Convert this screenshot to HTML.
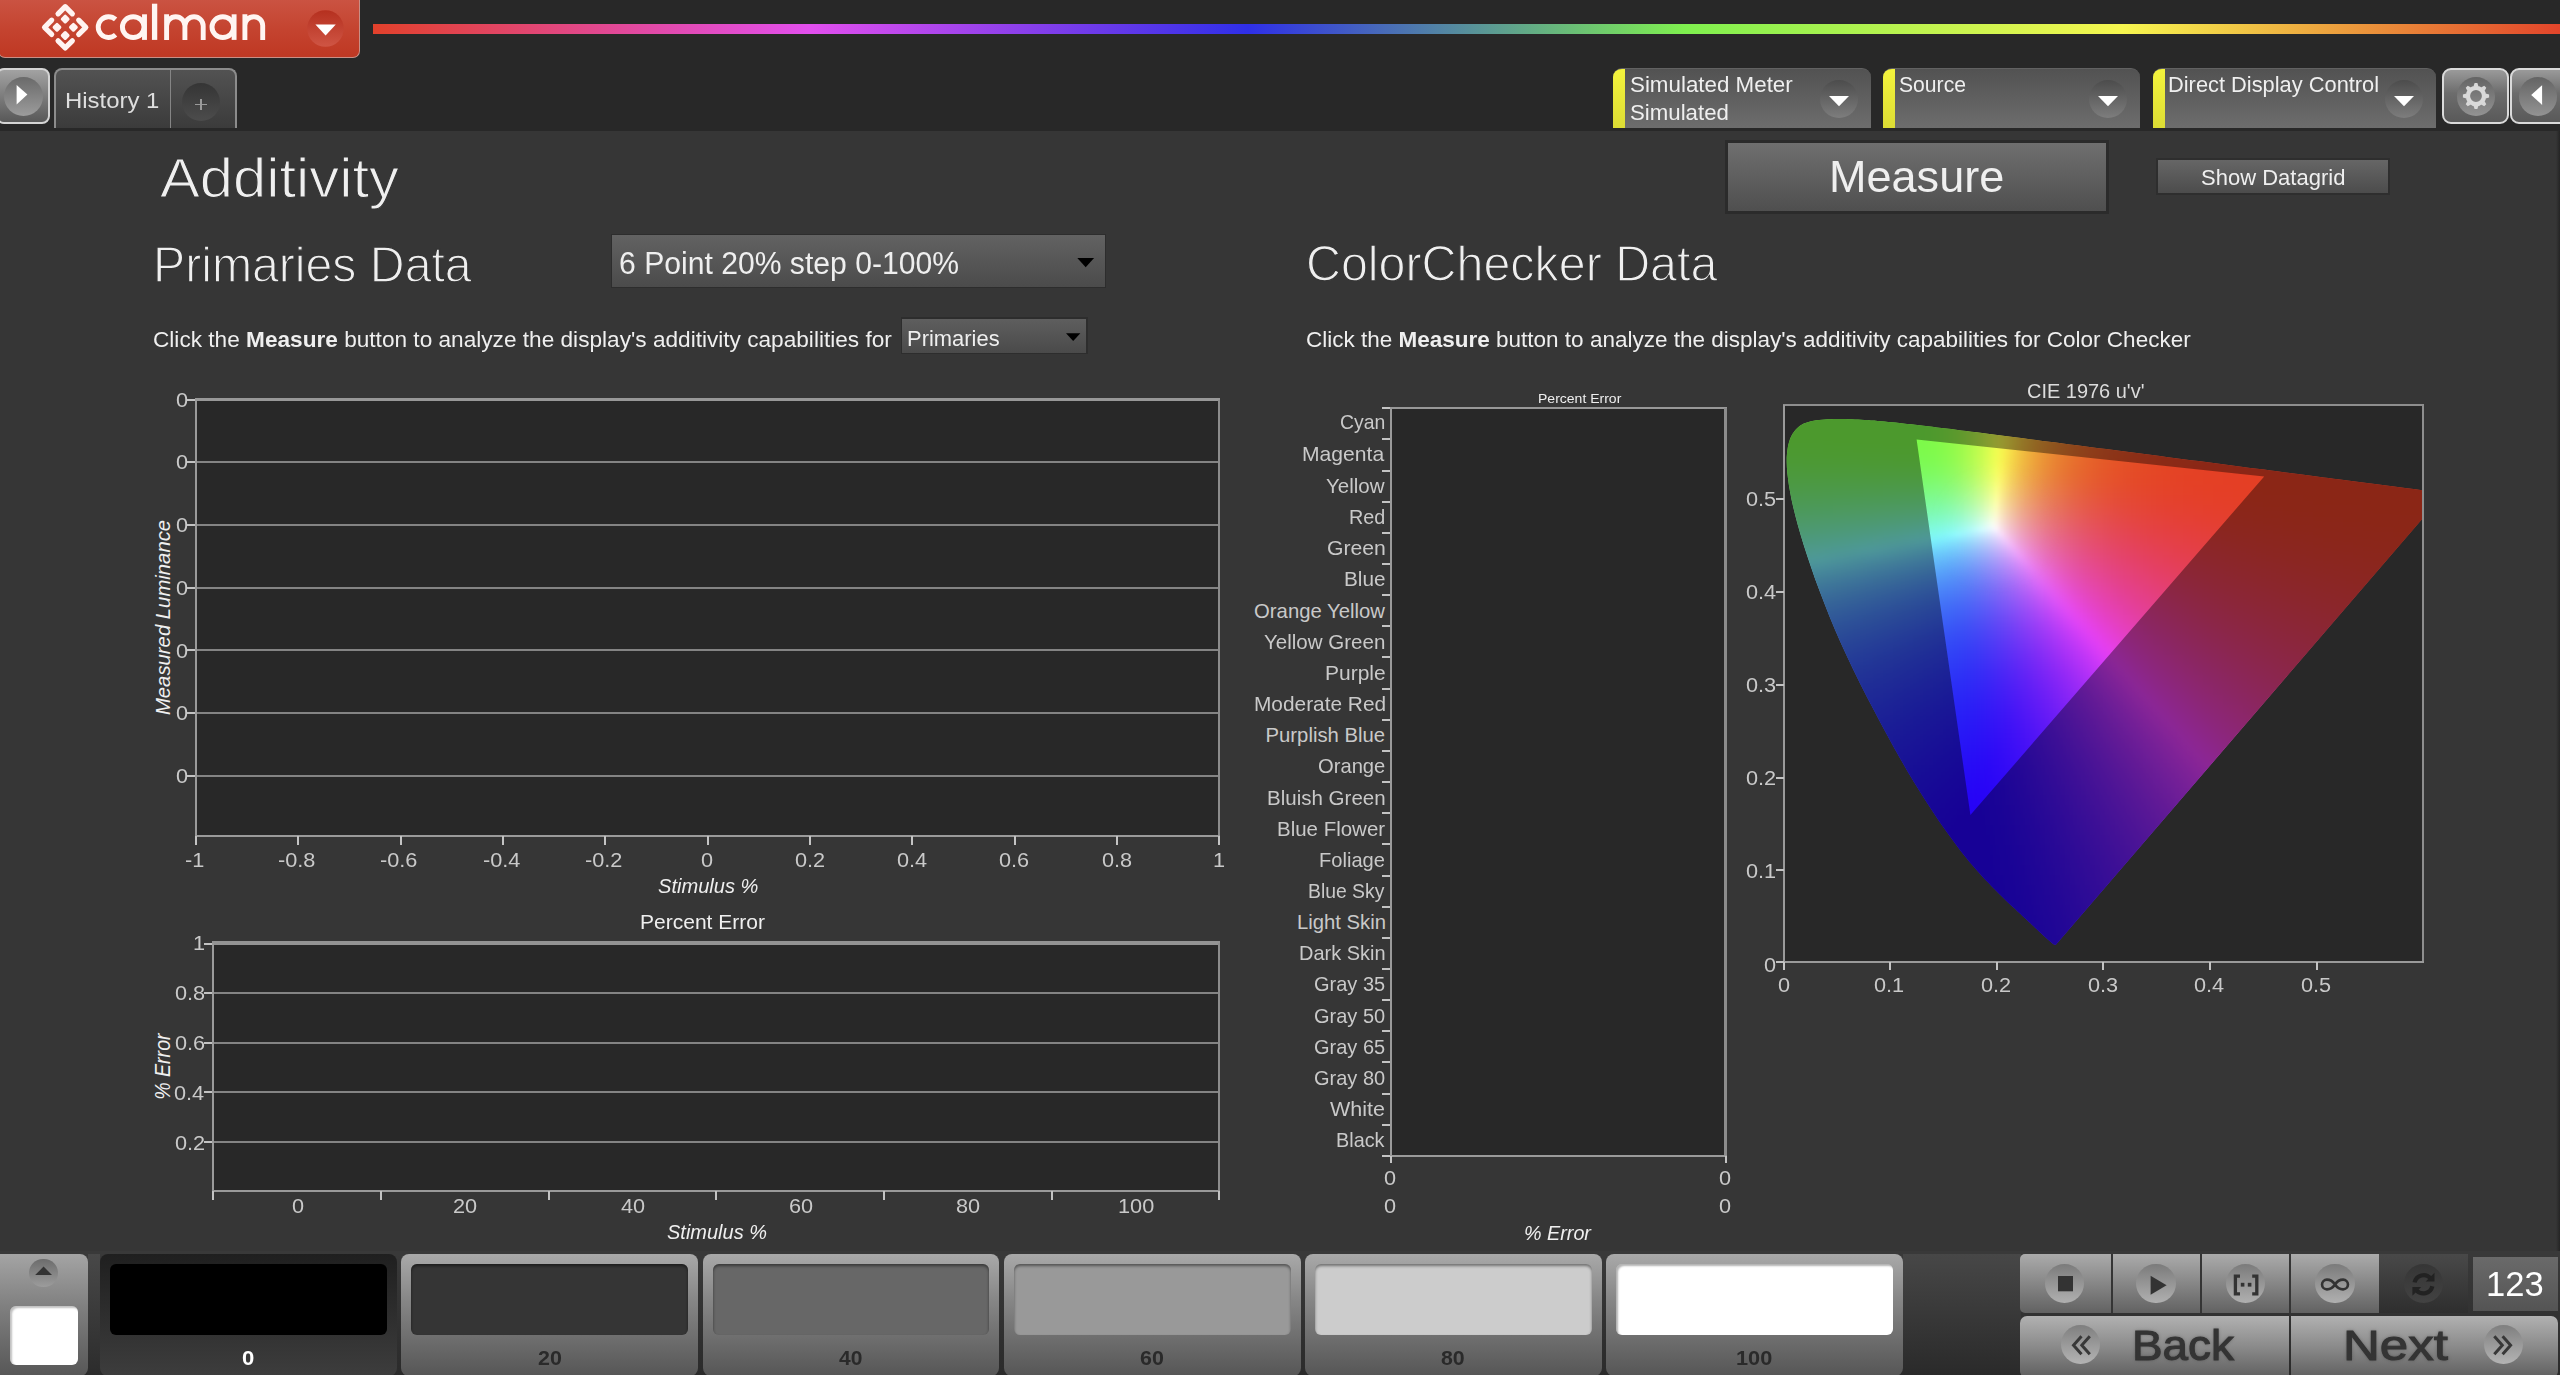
<!DOCTYPE html>
<html><head><meta charset="utf-8"><title>Calman - Additivity</title>
<style>
html,body{margin:0;padding:0;background:#363636;}
body{width:2560px;height:1375px;overflow:hidden;position:relative;font-family:"Liberation Sans",sans-serif;}
#app{position:absolute;left:0;top:0;width:2560px;height:1375px;overflow:hidden;}
#app div,.abs{position:absolute;}
.t{position:absolute;white-space:pre;transform-origin:0 0;display:block;}
.t b{font-weight:bold;}
</style></head><body><div id="app">
<div style="left:0.00px;top:0.00px;width:2560.00px;height:130.50px;background:#282828;"></div>
<div style="left:0.00px;top:130.50px;width:2560.00px;height:1244.50px;background:#363636;"></div>
<div style="left:373.00px;top:24.00px;width:2187.00px;height:10.00px;background:linear-gradient(90deg,#e2412b 0%,#e24fee 20%,#2f2fe8 40%,#7ff04f 60%,#f6f64f 80%,#e2452b 100%);"></div>
<div style="left:2556.00px;top:130.50px;width:4.00px;height:1123.50px;background:linear-gradient(90deg,#363636,#242424);"></div>
<div style="left:-2.00px;top:-2.00px;width:361.50px;height:59.50px;background:linear-gradient(180deg,#cb5443 0%,#c4432f 55%,#bf3823 100%);border-radius:0 0 7px 7px;border:1.5px solid #c98f86;border-top:none;box-sizing:border-box;"></div>
<svg class="abs" style="left:0;top:0" width="370" height="60" viewBox="0 0 370 60">
<defs><linearGradient id="lgc" x1="0" y1="0" x2="0" y2="1"><stop offset="0" stop-color="#b5301f"/><stop offset="1" stop-color="#cf5544"/></linearGradient></defs>
<circle cx="325.5" cy="28.5" r="18.3" fill="url(#lgc)"/>
<path d="M315.4 24.6h20.4l-10.2 10.8z" fill="#fff"/>
<g transform="translate(65.200 27.300) rotate(45)" fill="#fff3f1">
<path d="M-14.6 -4.500V-14.6H-4.500M4.500 -14.6H14.6V-4.500M14.6 4.500V14.6H4.500M-4.500 14.6H-14.6V4.500" fill="none" stroke="#fff3f1" stroke-width="5.200" stroke-linecap="round" stroke-linejoin="round"/>
<rect x="-9.400" y="-9.400" width="7.200" height="7.200" rx="1.700"/><rect x="2.200" y="-9.400" width="7.200" height="7.200" rx="1.700"/>
<rect x="-9.400" y="2.200" width="7.200" height="7.200" rx="1.700"/><rect x="2.200" y="2.200" width="7.200" height="7.200" rx="1.700"/>
</g>
<g fill="none" stroke="#fff5f2" stroke-width="4.9">
<path d="M115.6 19.4A10.4 10.4 0 1 0 115.6 34.8"/>
<ellipse cx="133.2" cy="27.1" rx="10.8" ry="10.4"/><path d="M144.5 14.3V39.9"/>
<path d="M154.6 3.7V39.9" stroke-width="5.3"/>
<path d="M166.6 14.3V39.9M166.6 25.9A9.15 9.15 0 0 1 184.9 25.9V39.9M184.9 25.9A9.15 9.15 0 0 1 203.2 25.9V39.9"/>
<ellipse cx="222.8" cy="27.1" rx="10.8" ry="10.4"/><path d="M234.1 14.3V39.9"/>
<path d="M244.9 14.3V39.9M244.9 25.6A8.9 8.9 0 0 1 262.7 25.6V39.9"/>
</g></svg>
<div style="left:-4.00px;top:68.30px;width:54.30px;height:55.70px;background:linear-gradient(180deg,#a2a2a2,#585858);border:2px solid #d4d4d4;border-radius:8px;box-sizing:border-box;"></div>
<div style="left:3.50px;top:76.60px;width:39.00px;height:39.00px;border-radius:50%;background:linear-gradient(180deg,#6a6a6a,#9c9c9c);"></div>
<svg class="abs" style="left:0;top:60px" width="60" height="70"><path d="M16.6 24.9V44.4L27.4 34.6z" fill="#fff"/></svg>
<div style="left:54.20px;top:68.30px;width:183.00px;height:59.70px;background:linear-gradient(180deg,#525252,#3b3b3b);border:2px solid #8c8c8c;border-bottom:none;border-radius:8px 8px 0 0;box-sizing:border-box;"></div>
<div style="left:169.60px;top:70.00px;width:1.80px;height:58.00px;background:#858585;"></div>
<span class="t" style="left:65.49px;top:89.78px;font-size:21.88px;line-height:21.88px;color:#dedede;transform:scaleX(1.0936);">History 1</span>
<div style="left:182.20px;top:83.00px;width:38.00px;height:38.00px;border-radius:50%;background:linear-gradient(180deg,#353535,#4c4c4c);"></div>
<div style="left:195.10px;top:103.70px;width:11.70px;height:1.60px;background:#9a9a9a;"></div>
<div style="left:200.20px;top:98.60px;width:1.60px;height:11.70px;background:#9a9a9a;"></div>
<div style="left:1613.00px;top:68.00px;width:258.00px;height:60.40px;background:linear-gradient(180deg,#525252,#6d6d6d);border-radius:9px 9px 0 0;overflow:hidden;border-top:1px solid #626262;box-sizing:border-box;"><div style="left:0;top:-1px;width:12px;height:62px;background:linear-gradient(180deg,#f4f43c,#dcdc34);"></div></div>
<div style="left:1819.50px;top:79.50px;width:38.00px;height:38.00px;border-radius:50%;background:linear-gradient(180deg,#4c4c4c,#7d7d7d);"></div>
<svg class="abs" style="left:1823.7px;top:90px" width="30" height="24"><path d="M5 6.100h20l-10 10.2z" fill="#fff"/></svg>
<span class="t" style="left:1629.59px;top:73.60px;font-size:21.74px;line-height:21.74px;color:#efefef;transform:scaleX(1.0283);">Simulated Meter</span>
<span class="t" style="left:1629.60px;top:102.10px;font-size:21.74px;line-height:21.74px;color:#efefef;transform:scaleX(1.0229);">Simulated</span>
<div style="left:1882.60px;top:68.00px;width:257.40px;height:60.40px;background:linear-gradient(180deg,#525252,#6d6d6d);border-radius:9px 9px 0 0;overflow:hidden;border-top:1px solid #626262;box-sizing:border-box;"><div style="left:0;top:-1px;width:12px;height:62px;background:linear-gradient(180deg,#f4f43c,#dcdc34);"></div></div>
<div style="left:2089.00px;top:79.50px;width:38.00px;height:38.00px;border-radius:50%;background:linear-gradient(180deg,#4c4c4c,#7d7d7d);"></div>
<svg class="abs" style="left:2093.2px;top:90px" width="30" height="24"><path d="M5 6.100h20l-10 10.2z" fill="#fff"/></svg>
<span class="t" style="left:1899.05px;top:73.60px;font-size:21.74px;line-height:21.74px;color:#efefef;transform:scaleX(0.9724);">Source</span>
<div style="left:2152.70px;top:68.00px;width:283.30px;height:60.40px;background:linear-gradient(180deg,#525252,#6d6d6d);border-radius:9px 9px 0 0;overflow:hidden;border-top:1px solid #626262;box-sizing:border-box;"><div style="left:0;top:-1px;width:12px;height:62px;background:linear-gradient(180deg,#f4f43c,#dcdc34);"></div></div>
<div style="left:2385.00px;top:79.50px;width:38.00px;height:38.00px;border-radius:50%;background:linear-gradient(180deg,#4c4c4c,#7d7d7d);"></div>
<svg class="abs" style="left:2389.2px;top:90px" width="30" height="24"><path d="M5 6.100h20l-10 10.2z" fill="#fff"/></svg>
<span class="t" style="left:2168.25px;top:73.60px;font-size:21.74px;line-height:21.74px;color:#efefef;transform:scaleX(1.0045);">Direct Display Control</span>
<div style="left:2442.20px;top:68.10px;width:66.80px;height:55.70px;background:linear-gradient(180deg,#9a9a9a,#6c6c6c 45%,#595959);border:2px solid #dadada;border-radius:9px;box-sizing:border-box;"></div>
<div style="left:2510.10px;top:68.10px;width:69.90px;height:55.70px;background:linear-gradient(180deg,#9a9a9a,#6c6c6c 45%,#595959);border:2px solid #dadada;border-radius:9px;box-sizing:border-box;"></div>
<div style="left:2456.70px;top:77.10px;width:38.60px;height:38.60px;border-radius:50%;background:linear-gradient(180deg,#646464,#939393);"></div>
<div style="left:2518.50px;top:77.10px;width:38.60px;height:38.60px;border-radius:50%;background:linear-gradient(180deg,#646464,#939393);"></div>
<svg class="abs" style="left:2456px;top:76.4px" width="40" height="40" viewBox="-20 -20 40 40"><g fill="#d9d9d9"><path d="M-2.500 -9.6L-1.400 -13.100H1.400L2.500 -9.6z" transform="rotate(0)"/><path d="M-2.500 -9.6L-1.400 -13.100H1.400L2.500 -9.6z" transform="rotate(45)"/><path d="M-2.500 -9.6L-1.400 -13.100H1.400L2.500 -9.6z" transform="rotate(90)"/><path d="M-2.500 -9.6L-1.400 -13.100H1.400L2.500 -9.6z" transform="rotate(135)"/><path d="M-2.500 -9.6L-1.400 -13.100H1.400L2.500 -9.6z" transform="rotate(180)"/><path d="M-2.500 -9.6L-1.400 -13.100H1.400L2.500 -9.6z" transform="rotate(225)"/><path d="M-2.500 -9.6L-1.400 -13.100H1.400L2.500 -9.6z" transform="rotate(270)"/><path d="M-2.500 -9.6L-1.400 -13.100H1.400L2.500 -9.6z" transform="rotate(315)"/></g><circle r="8.1" fill="none" stroke="#d9d9d9" stroke-width="4.4"/></svg>
<svg class="abs" style="left:2520px;top:76px" width="40" height="40"><path d="M22.100 9.200V28.900L11.200 19.050z" fill="#fff"/></svg>
<span class="t" style="left:159.70px;top:150.10px;font-size:56.23px;line-height:56.23px;color:#efefef;transform:scaleX(1.0621);-webkit-text-stroke:1.1px #363636;">Additivity</span>
<span class="t" style="left:153.15px;top:239.97px;font-size:50.00px;line-height:50.00px;color:#efefef;transform:scaleX(0.9636);-webkit-text-stroke:1.3px #363636;">Primaries Data</span>
<span class="t" style="left:1305.88px;top:239.44px;font-size:50.87px;line-height:50.87px;color:#efefef;transform:scaleX(0.9512);-webkit-text-stroke:1.3px #363636;">ColorChecker Data</span>
<div style="left:1725.00px;top:140.00px;width:384.00px;height:74.00px;background:#2b2b2b;"></div>
<div style="left:1728.00px;top:143.00px;width:378.00px;height:68.00px;background:linear-gradient(180deg,#6f6f6f,#4f4f4f);"></div>
<span class="t" style="left:1829.10px;top:155.60px;font-size:43.48px;line-height:43.48px;color:#efefef;transform:scaleX(1.0361);">Measure</span>
<div style="left:2156.00px;top:158.00px;width:234.00px;height:37.00px;background:#2e2e2e;"></div>
<div style="left:2158.00px;top:159.50px;width:230.40px;height:33.80px;background:linear-gradient(180deg,#666,#4c4c4c);"></div>
<span class="t" style="left:2201.01px;top:166.89px;font-size:21.16px;line-height:21.16px;color:#efefef;transform:scaleX(1.0405);">Show Datagrid</span>
<div style="left:610.50px;top:233.50px;width:495.50px;height:54.70px;background:#2d2d2d;"></div>
<div style="left:612.00px;top:235.00px;width:492.60px;height:51.80px;background:linear-gradient(180deg,#626262,#4b4b4b);"></div>
<span class="t" style="left:619.39px;top:247.54px;font-size:30.43px;line-height:30.43px;color:#efefef;transform:scaleX(0.9904);">6 Point 20% step 0-100%</span>
<svg class="abs" style="left:1070px;top:250px" width="30" height="24"><path d="M7.3 8h16.8l-8.4 9.3z" fill="#000"/></svg>
<div style="left:900.50px;top:317.30px;width:187.10px;height:37.20px;background:#2d2d2d;"></div>
<div style="left:901.80px;top:318.60px;width:184.60px;height:34.70px;background:linear-gradient(180deg,#5e5e5e,#4a4a4a);"></div>
<span class="t" style="left:907.04px;top:328.13px;font-size:22.17px;line-height:22.17px;color:#efefef;transform:scaleX(0.9897);">Primaries</span>
<svg class="abs" style="left:1060px;top:326px" width="30" height="24"><path d="M6 7.3h14.4l-7.2 7.6z" fill="#000"/></svg>
<span class="t" style="left:153.47px;top:328.34px;font-size:22.75px;line-height:22.75px;color:#efefef;transform:scaleX(0.9946);">Click the <b>Measure</b> button to analyze the display's additivity capabilities for</span>
<span class="t" style="left:1306.07px;top:328.34px;font-size:22.75px;line-height:22.75px;color:#efefef;transform:scaleX(0.9889);">Click the <b>Measure</b> button to analyze the display's additivity capabilities for Color Checker</span>
<div style="left:196.00px;top:399.70px;width:1023.50px;height:436.20px;background:#282828;"></div>
<div style="left:187.00px;top:399.00px;width:9.00px;height:2.00px;background:#c2c2c2;"></div>
<span class="t" style="left:176.02px;top:389.82px;font-size:20.29px;line-height:20.29px;color:#c9c9c9;transform:scaleX(1.0700);">0</span>
<div style="left:196.00px;top:461.00px;width:1024.00px;height:2.00px;background:#848484;"></div>
<div style="left:187.00px;top:461.00px;width:9.00px;height:2.00px;background:#c2c2c2;"></div>
<span class="t" style="left:176.02px;top:452.49px;font-size:20.29px;line-height:20.29px;color:#c9c9c9;transform:scaleX(1.0700);">0</span>
<div style="left:196.00px;top:524.00px;width:1024.00px;height:2.00px;background:#848484;"></div>
<div style="left:187.00px;top:524.00px;width:9.00px;height:2.00px;background:#c2c2c2;"></div>
<span class="t" style="left:176.02px;top:515.16px;font-size:20.29px;line-height:20.29px;color:#c9c9c9;transform:scaleX(1.0700);">0</span>
<div style="left:196.00px;top:587.00px;width:1024.00px;height:2.00px;background:#848484;"></div>
<div style="left:187.00px;top:587.00px;width:9.00px;height:2.00px;background:#c2c2c2;"></div>
<span class="t" style="left:176.02px;top:577.83px;font-size:20.29px;line-height:20.29px;color:#c9c9c9;transform:scaleX(1.0700);">0</span>
<div style="left:196.00px;top:649.00px;width:1024.00px;height:2.00px;background:#848484;"></div>
<div style="left:187.00px;top:649.00px;width:9.00px;height:2.00px;background:#c2c2c2;"></div>
<span class="t" style="left:176.02px;top:640.50px;font-size:20.29px;line-height:20.29px;color:#c9c9c9;transform:scaleX(1.0700);">0</span>
<div style="left:196.00px;top:712.00px;width:1024.00px;height:2.00px;background:#848484;"></div>
<div style="left:187.00px;top:712.00px;width:9.00px;height:2.00px;background:#c2c2c2;"></div>
<span class="t" style="left:176.02px;top:703.17px;font-size:20.29px;line-height:20.29px;color:#c9c9c9;transform:scaleX(1.0700);">0</span>
<div style="left:196.00px;top:775.00px;width:1024.00px;height:2.00px;background:#848484;"></div>
<div style="left:187.00px;top:775.00px;width:9.00px;height:2.00px;background:#c2c2c2;"></div>
<span class="t" style="left:176.02px;top:765.84px;font-size:20.29px;line-height:20.29px;color:#c9c9c9;transform:scaleX(1.0700);">0</span>
<div style="left:195.00px;top:398.00px;width:1025.00px;height:3.00px;background:#989898;"></div>
<div style="left:195.00px;top:400.00px;width:2.00px;height:437.00px;background:#9a9a9a;"></div>
<div style="left:1218.00px;top:400.00px;width:2.00px;height:437.00px;background:#8c8c8c;"></div>
<div style="left:195.00px;top:835.00px;width:1025.00px;height:2.00px;background:#9a9a9a;"></div>
<div style="left:195.00px;top:836.00px;width:2.00px;height:9.00px;background:#c4c4c4;"></div>
<span class="t" style="left:184.79px;top:849.62px;font-size:20.29px;line-height:20.29px;color:#c9c9c9;transform:scaleX(1.0700);">-1</span>
<div style="left:297.00px;top:836.00px;width:2.00px;height:9.00px;background:#c4c4c4;"></div>
<span class="t" style="left:278.03px;top:849.62px;font-size:20.29px;line-height:20.29px;color:#c9c9c9;transform:scaleX(1.0700);">-0.8</span>
<div style="left:400.00px;top:836.00px;width:2.00px;height:9.00px;background:#c4c4c4;"></div>
<span class="t" style="left:380.43px;top:849.62px;font-size:20.29px;line-height:20.29px;color:#c9c9c9;transform:scaleX(1.0700);">-0.6</span>
<div style="left:502.00px;top:836.00px;width:2.00px;height:9.00px;background:#c4c4c4;"></div>
<span class="t" style="left:482.62px;top:849.62px;font-size:20.29px;line-height:20.29px;color:#c9c9c9;transform:scaleX(1.0700);">-0.4</span>
<div style="left:604.00px;top:836.00px;width:2.00px;height:9.00px;background:#c4c4c4;"></div>
<span class="t" style="left:585.18px;top:849.62px;font-size:20.29px;line-height:20.29px;color:#c9c9c9;transform:scaleX(1.0700);">-0.2</span>
<div style="left:707.00px;top:836.00px;width:2.00px;height:9.00px;background:#c4c4c4;"></div>
<span class="t" style="left:701.43px;top:849.62px;font-size:20.29px;line-height:20.29px;color:#c9c9c9;transform:scaleX(1.0700);">0</span>
<div style="left:809.00px;top:836.00px;width:2.00px;height:9.00px;background:#c4c4c4;"></div>
<span class="t" style="left:794.82px;top:849.62px;font-size:20.29px;line-height:20.29px;color:#c9c9c9;transform:scaleX(1.0700);">0.2</span>
<div style="left:911.00px;top:836.00px;width:2.00px;height:9.00px;background:#c4c4c4;"></div>
<span class="t" style="left:896.95px;top:849.62px;font-size:20.29px;line-height:20.29px;color:#c9c9c9;transform:scaleX(1.0700);">0.4</span>
<div style="left:1014.00px;top:836.00px;width:2.00px;height:9.00px;background:#c4c4c4;"></div>
<span class="t" style="left:999.47px;top:849.62px;font-size:20.29px;line-height:20.29px;color:#c9c9c9;transform:scaleX(1.0700);">0.6</span>
<div style="left:1116.00px;top:836.00px;width:2.00px;height:9.00px;background:#c4c4c4;"></div>
<span class="t" style="left:1101.76px;top:849.62px;font-size:20.29px;line-height:20.29px;color:#c9c9c9;transform:scaleX(1.0700);">0.8</span>
<div style="left:1218.00px;top:836.00px;width:2.00px;height:9.00px;background:#c4c4c4;"></div>
<span class="t" style="left:1212.90px;top:849.62px;font-size:20.29px;line-height:20.29px;color:#c9c9c9;transform:scaleX(1.0700);">1</span>
<span class="t" style="left:657.90px;top:875.83px;font-size:20.87px;line-height:20.87px;color:#efefef;transform:scaleX(0.9632);font-style:italic;">Stimulus %</span>
<span class="t" style="left:0;top:0;font-size:20.87px;line-height:20.87px;color:#efefef;transform:translate(170.60px,714.50px) rotate(-90deg) scale(0.9734,1) translate(-0.63px,-17.67px);font-style:italic;">Measured Luminance</span>
<div style="left:213.10px;top:942.80px;width:1006.40px;height:247.90px;background:#282828;"></div>
<div style="left:204.00px;top:943.00px;width:9.00px;height:2.00px;background:#c2c2c2;"></div>
<span class="t" style="left:193.04px;top:933.22px;font-size:20.29px;line-height:20.29px;color:#c9c9c9;transform:scaleX(1.0700);">1</span>
<div style="left:213.00px;top:992.00px;width:1007.00px;height:2.00px;background:#848484;"></div>
<div style="left:204.00px;top:992.00px;width:9.00px;height:2.00px;background:#c2c2c2;"></div>
<span class="t" style="left:174.69px;top:983.07px;font-size:20.29px;line-height:20.29px;color:#c9c9c9;transform:scaleX(1.0700);">0.8</span>
<div style="left:213.00px;top:1042.00px;width:1007.00px;height:2.00px;background:#848484;"></div>
<div style="left:204.00px;top:1042.00px;width:9.00px;height:2.00px;background:#c2c2c2;"></div>
<span class="t" style="left:174.80px;top:1032.92px;font-size:20.29px;line-height:20.29px;color:#c9c9c9;transform:scaleX(1.0700);">0.6</span>
<div style="left:213.00px;top:1091.00px;width:1007.00px;height:2.00px;background:#848484;"></div>
<div style="left:204.00px;top:1091.00px;width:9.00px;height:2.00px;background:#c2c2c2;"></div>
<span class="t" style="left:174.47px;top:1082.77px;font-size:20.29px;line-height:20.29px;color:#c9c9c9;transform:scaleX(1.0700);">0.4</span>
<div style="left:213.00px;top:1141.00px;width:1007.00px;height:2.00px;background:#848484;"></div>
<div style="left:204.00px;top:1141.00px;width:9.00px;height:2.00px;background:#c2c2c2;"></div>
<span class="t" style="left:174.91px;top:1132.62px;font-size:20.29px;line-height:20.29px;color:#c9c9c9;transform:scaleX(1.0700);">0.2</span>
<div style="left:212.00px;top:941.00px;width:1008.00px;height:4.00px;background:#939393;"></div>
<div style="left:212.00px;top:943.00px;width:2.00px;height:249.00px;background:#9a9a9a;"></div>
<div style="left:1218.00px;top:943.00px;width:2.00px;height:249.00px;background:#8c8c8c;"></div>
<div style="left:212.00px;top:1190.00px;width:1008.00px;height:2.00px;background:#9a9a9a;"></div>
<div style="left:212.00px;top:1191.00px;width:2.00px;height:9.00px;background:#c4c4c4;"></div>
<div style="left:380.00px;top:1191.00px;width:2.00px;height:9.00px;background:#c4c4c4;"></div>
<div style="left:548.00px;top:1191.00px;width:2.00px;height:9.00px;background:#c4c4c4;"></div>
<div style="left:715.00px;top:1191.00px;width:2.00px;height:9.00px;background:#c4c4c4;"></div>
<div style="left:883.00px;top:1191.00px;width:2.00px;height:9.00px;background:#c4c4c4;"></div>
<div style="left:1051.00px;top:1191.00px;width:2.00px;height:9.00px;background:#c4c4c4;"></div>
<div style="left:1218.00px;top:1191.00px;width:2.00px;height:9.00px;background:#c4c4c4;"></div>
<span class="t" style="left:291.54px;top:1196.42px;font-size:20.29px;line-height:20.29px;color:#c9c9c9;transform:scaleX(1.0700);">0</span>
<span class="t" style="left:453.12px;top:1196.42px;font-size:20.29px;line-height:20.29px;color:#c9c9c9;transform:scaleX(1.0700);">20</span>
<span class="t" style="left:621.11px;top:1196.42px;font-size:20.29px;line-height:20.29px;color:#c9c9c9;transform:scaleX(1.0700);">40</span>
<span class="t" style="left:788.56px;top:1196.42px;font-size:20.29px;line-height:20.29px;color:#c9c9c9;transform:scaleX(1.0700);">60</span>
<span class="t" style="left:956.34px;top:1196.42px;font-size:20.29px;line-height:20.29px;color:#c9c9c9;transform:scaleX(1.0700);">80</span>
<span class="t" style="left:1117.71px;top:1196.42px;font-size:20.29px;line-height:20.29px;color:#c9c9c9;transform:scaleX(1.0700);">100</span>
<span class="t" style="left:640.32px;top:911.58px;font-size:20.58px;line-height:20.58px;color:#efefef;transform:scaleX(1.0217);">Percent Error</span>
<span class="t" style="left:666.90px;top:1221.83px;font-size:20.87px;line-height:20.87px;color:#efefef;transform:scaleX(0.9583);font-style:italic;">Stimulus %</span>
<span class="t" style="left:0;top:0;font-size:21.45px;line-height:21.45px;color:#efefef;transform:translate(171.20px,1098.50px) rotate(-90deg) scale(0.9143,1) translate(-1.50px,-18.16px);font-style:italic;">% Error</span>
<div style="left:1390.90px;top:408.00px;width:334.90px;height:747.60px;background:#282828;"></div>
<div style="left:1382.00px;top:407.00px;width:9.00px;height:2.00px;background:#c4c4c4;"></div>
<div style="left:1382.00px;top:438.00px;width:9.00px;height:2.00px;background:#c4c4c4;"></div>
<div style="left:1382.00px;top:470.00px;width:9.00px;height:2.00px;background:#c4c4c4;"></div>
<div style="left:1382.00px;top:501.00px;width:9.00px;height:2.00px;background:#c4c4c4;"></div>
<div style="left:1382.00px;top:532.00px;width:9.00px;height:2.00px;background:#c4c4c4;"></div>
<div style="left:1382.00px;top:563.00px;width:9.00px;height:2.00px;background:#c4c4c4;"></div>
<div style="left:1382.00px;top:594.00px;width:9.00px;height:2.00px;background:#c4c4c4;"></div>
<div style="left:1382.00px;top:625.00px;width:9.00px;height:2.00px;background:#c4c4c4;"></div>
<div style="left:1382.00px;top:656.00px;width:9.00px;height:2.00px;background:#c4c4c4;"></div>
<div style="left:1382.00px;top:688.00px;width:9.00px;height:2.00px;background:#c4c4c4;"></div>
<div style="left:1382.00px;top:719.00px;width:9.00px;height:2.00px;background:#c4c4c4;"></div>
<div style="left:1382.00px;top:750.00px;width:9.00px;height:2.00px;background:#c4c4c4;"></div>
<div style="left:1382.00px;top:781.00px;width:9.00px;height:2.00px;background:#c4c4c4;"></div>
<div style="left:1382.00px;top:812.00px;width:9.00px;height:2.00px;background:#c4c4c4;"></div>
<div style="left:1382.00px;top:843.00px;width:9.00px;height:2.00px;background:#c4c4c4;"></div>
<div style="left:1382.00px;top:875.00px;width:9.00px;height:2.00px;background:#c4c4c4;"></div>
<div style="left:1382.00px;top:906.00px;width:9.00px;height:2.00px;background:#c4c4c4;"></div>
<div style="left:1382.00px;top:937.00px;width:9.00px;height:2.00px;background:#c4c4c4;"></div>
<div style="left:1382.00px;top:968.00px;width:9.00px;height:2.00px;background:#c4c4c4;"></div>
<div style="left:1382.00px;top:999.00px;width:9.00px;height:2.00px;background:#c4c4c4;"></div>
<div style="left:1382.00px;top:1030.00px;width:9.00px;height:2.00px;background:#c4c4c4;"></div>
<div style="left:1382.00px;top:1061.00px;width:9.00px;height:2.00px;background:#c4c4c4;"></div>
<div style="left:1382.00px;top:1093.00px;width:9.00px;height:2.00px;background:#c4c4c4;"></div>
<div style="left:1382.00px;top:1124.00px;width:9.00px;height:2.00px;background:#c4c4c4;"></div>
<div style="left:1382.00px;top:1155.00px;width:9.00px;height:2.00px;background:#c4c4c4;"></div>
<span class="t" style="left:1340.43px;top:412.30px;font-size:20.29px;line-height:20.29px;color:#c9c9c9;transform:scaleX(0.9569);">Cyan</span>
<span class="t" style="left:1302.31px;top:443.95px;font-size:20.29px;line-height:20.29px;color:#c9c9c9;transform:scaleX(1.0413);">Magenta</span>
<span class="t" style="left:1325.89px;top:475.60px;font-size:20.29px;line-height:20.29px;color:#c9c9c9;transform:scaleX(1.0118);">Yellow</span>
<span class="t" style="left:1349.41px;top:507.15px;font-size:20.29px;line-height:20.29px;color:#c9c9c9;transform:scaleX(0.9770);">Red</span>
<span class="t" style="left:1326.94px;top:538.30px;font-size:20.29px;line-height:20.29px;color:#c9c9c9;transform:scaleX(1.0449);">Green</span>
<span class="t" style="left:1343.94px;top:569.45px;font-size:20.29px;line-height:20.29px;color:#c9c9c9;transform:scaleX(1.0225);">Blue</span>
<span class="t" style="left:1254.09px;top:600.60px;font-size:20.29px;line-height:20.29px;color:#c9c9c9;">Orange Yellow</span>
<span class="t" style="left:1264.49px;top:631.75px;font-size:20.29px;line-height:20.29px;color:#c9c9c9;transform:scaleX(1.0120);">Yellow Green</span>
<span class="t" style="left:1324.72px;top:662.90px;font-size:20.29px;line-height:20.29px;color:#c9c9c9;transform:scaleX(1.0356);">Purple</span>
<span class="t" style="left:1253.73px;top:694.05px;font-size:20.29px;line-height:20.29px;color:#c9c9c9;transform:scaleX(1.0279);">Moderate Red</span>
<span class="t" style="left:1265.57px;top:725.20px;font-size:20.29px;line-height:20.29px;color:#c9c9c9;">Purplish Blue</span>
<span class="t" style="left:1318.09px;top:756.35px;font-size:20.29px;line-height:20.29px;color:#c9c9c9;transform:scaleX(0.9948);">Orange</span>
<span class="t" style="left:1267.16px;top:787.50px;font-size:20.29px;line-height:20.29px;color:#c9c9c9;transform:scaleX(1.0120);">Bluish Green</span>
<span class="t" style="left:1276.76px;top:818.65px;font-size:20.29px;line-height:20.29px;color:#c9c9c9;transform:scaleX(1.0095);">Blue Flower</span>
<span class="t" style="left:1319.39px;top:849.80px;font-size:20.29px;line-height:20.29px;color:#c9c9c9;transform:scaleX(0.9920);">Foliage</span>
<span class="t" style="left:1308.25px;top:880.95px;font-size:20.29px;line-height:20.29px;color:#c9c9c9;transform:scaleX(0.9538);">Blue Sky</span>
<span class="t" style="left:1296.98px;top:912.10px;font-size:20.29px;line-height:20.29px;color:#c9c9c9;">Light Skin</span>
<span class="t" style="left:1299.20px;top:943.25px;font-size:20.29px;line-height:20.29px;color:#c9c9c9;transform:scaleX(0.9845);">Dark Skin</span>
<span class="t" style="left:1314.20px;top:974.40px;font-size:20.29px;line-height:20.29px;color:#c9c9c9;transform:scaleX(0.9857);">Gray 35</span>
<span class="t" style="left:1314.20px;top:1005.55px;font-size:20.29px;line-height:20.29px;color:#c9c9c9;transform:scaleX(0.9857);">Gray 50</span>
<span class="t" style="left:1314.20px;top:1036.70px;font-size:20.29px;line-height:20.29px;color:#c9c9c9;transform:scaleX(0.9857);">Gray 65</span>
<span class="t" style="left:1314.20px;top:1067.85px;font-size:20.29px;line-height:20.29px;color:#c9c9c9;transform:scaleX(0.9857);">Gray 80</span>
<span class="t" style="left:1330.49px;top:1099.00px;font-size:20.29px;line-height:20.29px;color:#c9c9c9;transform:scaleX(1.0605);">White</span>
<span class="t" style="left:1336.01px;top:1130.15px;font-size:20.29px;line-height:20.29px;color:#c9c9c9;transform:scaleX(0.9774);">Black</span>
<div style="left:1390.00px;top:407.00px;width:337.00px;height:2.00px;background:#989898;"></div>
<div style="left:1390.00px;top:408.00px;width:2.00px;height:749.00px;background:#9a9a9a;"></div>
<div style="left:1724.00px;top:408.00px;width:3.00px;height:749.00px;background:#8c8c8c;"></div>
<div style="left:1390.00px;top:1155.00px;width:337.00px;height:2.00px;background:#9a9a9a;"></div>
<div style="left:1390.00px;top:1156.00px;width:2.00px;height:7.00px;background:#c4c4c4;"></div>
<div style="left:1725.00px;top:1156.00px;width:2.00px;height:7.00px;background:#c4c4c4;"></div>
<span class="t" style="left:1384.38px;top:1168.02px;font-size:20.29px;line-height:20.29px;color:#c9c9c9;transform:scaleX(1.0700);">0</span>
<span class="t" style="left:1384.38px;top:1196.12px;font-size:20.29px;line-height:20.29px;color:#c9c9c9;transform:scaleX(1.0700);">0</span>
<span class="t" style="left:1719.38px;top:1168.02px;font-size:20.29px;line-height:20.29px;color:#c9c9c9;transform:scaleX(1.0700);">0</span>
<span class="t" style="left:1719.38px;top:1196.12px;font-size:20.29px;line-height:20.29px;color:#c9c9c9;transform:scaleX(1.0700);">0</span>
<span class="t" style="left:1524.42px;top:1222.73px;font-size:20.87px;line-height:20.87px;color:#efefef;transform:scaleX(0.9469);font-style:italic;">% Error</span>
<span class="t" style="left:1537.68px;top:393.08px;font-size:12.90px;line-height:12.90px;color:#efefef;transform:scaleX(1.0867);">Percent Error</span>
<div style="left:1784.20px;top:405.20px;width:639.00px;height:557.00px;background:#282828;"></div>
<svg class="abs" style="left:0;top:0" width="2560" height="1375" viewBox="0 0 2560 1375">
<defs><filter id="cb" color-interpolation-filters="sRGB" x="-5%" y="-5%" width="110%" height="110%"><feGaussianBlur stdDeviation="5.2"/></filter>
<filter id="cb2" color-interpolation-filters="sRGB" x="-10%" y="-10%" width="120%" height="120%"><feGaussianBlur stdDeviation="2.2"/></filter>
<radialGradient id="wg" gradientUnits="userSpaceOnUse" cx="1994.3" cy="527.0" r="68"><stop offset="0" stop-color="#fff"/><stop offset="0.55" stop-color="#fff"/><stop offset="1" stop-color="#000"/></radialGradient>
<mask id="wm" maskUnits="userSpaceOnUse" x="1914.3" y="447.0" width="160" height="160"><rect x="1914.3" y="447.0" width="160" height="160" fill="url(#wg)"/></mask>
<clipPath id="cp"><rect x="1785.2" y="406.2" width="637.0" height="555.0"/></clipPath>
<clipPath id="cl" clip-path="url(#cp)"><path d="M2055.9 944.7L2444.6 493.1L2444.6 493.1L2443.2 492.9L2441.2 492.6L2438.6 492.3L2434.9 491.8L2430.1 491.2L2423.9 490.4L2415.7 489.3L2405.2 488.0L2392.3 486.3L2376.9 484.3L2359.2 482.0L2338.2 479.3L2333.5 478.7L2328.7 478.0L2323.7 477.4L2318.5 476.7L2313.1 476.0L2307.6 475.3L2301.9 474.5L2296.0 473.7L2289.9 473.0L2283.7 472.2L2277.3 471.3L2270.8 470.5L2264.2 469.6L2257.3 468.8L2250.4 467.9L2243.2 466.9L2235.9 466.0L2228.5 465.0L2221.1 464.1L2213.6 463.1L2206.1 462.1L2198.6 461.1L2191.0 460.2L2183.4 459.2L2175.8 458.2L2168.0 457.2L2160.2 456.1L2152.4 455.1L2144.6 454.1L2136.8 453.1L2129.0 452.1L2121.4 451.1L2113.8 450.1L2106.3 449.1L2098.8 448.2L2091.5 447.2L2084.2 446.3L2077.0 445.3L2069.9 444.4L2062.9 443.5L2056.1 442.6L2049.3 441.7L2042.6 440.9L2036.1 440.0L2029.7 439.2L2023.3 438.3L2017.1 437.5L2011.0 436.7L2005.1 436.0L1999.2 435.2L1993.4 434.5L1987.7 433.7L1982.2 433.0L1976.7 432.3L1971.4 431.7L1966.2 431.0L1961.1 430.4L1956.1 429.7L1951.2 429.1L1946.4 428.5L1941.6 427.9L1937.0 427.4L1932.5 426.8L1928.0 426.3L1923.7 425.8L1919.4 425.3L1915.3 424.8L1911.2 424.3L1907.2 423.9L1903.3 423.4L1899.4 423.0L1895.6 422.6L1891.9 422.2L1888.3 421.9L1884.7 421.5L1881.2 421.2L1877.7 420.9L1874.3 420.6L1870.9 420.4L1867.6 420.1L1864.4 419.9L1861.2 419.7L1858.0 419.6L1854.9 419.4L1851.8 419.3L1848.7 419.2L1845.7 419.1L1842.7 419.1L1839.7 419.1L1836.6 419.1L1833.6 419.1L1830.6 419.2L1827.6 419.3L1824.7 419.5L1821.8 419.7L1819.0 419.9L1816.2 420.2L1813.5 420.7L1810.9 421.2L1808.5 421.9L1806.1 422.7L1803.8 423.6L1801.6 424.8L1799.6 426.1L1797.6 427.7L1795.8 429.4L1794.2 431.5L1792.6 433.7L1791.2 436.3L1790.0 439.1L1789.0 442.2L1788.1 445.5L1787.5 449.2L1787.0 453.3L1786.7 457.6L1786.7 462.3L1786.9 467.4L1787.3 472.9L1788.0 478.8L1788.9 485.2L1790.1 492.1L1791.5 499.5L1793.3 507.4L1795.4 515.9L1797.8 525.1L1800.6 534.8L1803.7 545.0L1807.2 555.8L1811.0 567.1L1815.1 578.9L1819.6 591.1L1824.4 603.6L1829.5 616.5L1834.9 629.5L1840.7 642.8L1846.8 656.1L1853.2 669.5L1859.8 682.9L1866.5 696.2L1873.4 709.3L1880.2 722.3L1887.1 735.1L1893.9 747.4L1900.7 759.4L1907.3 770.9L1913.9 781.9L1920.3 792.3L1926.6 802.2L1932.7 811.5L1938.6 820.4L1944.4 828.7L1950.0 836.5L1955.3 843.7L1960.3 850.4L1965.1 856.5L1969.5 861.9L1973.7 866.8L1977.6 871.3L1981.4 875.5L1985.0 879.4L1988.6 883.1L1992.0 886.7L1995.3 890.1L1998.5 893.3L2001.6 896.3L2004.6 899.2L2007.4 901.9L2010.1 904.4L2012.6 906.8L2015.2 909.1L2017.6 911.4L2020.0 913.6L2022.2 915.7L2024.4 917.7L2026.4 919.6L2028.4 921.4L2030.2 923.1L2031.9 924.7L2033.5 926.2L2035.1 927.7L2047.2 939.1L2053.4 944.2L2055.2 944.8L2055.7 944.8L2055.9 944.7Z"/></clipPath></defs>
<g clip-path="url(#cl)"><g filter="url(#cb)">
<path fill="#7cfa4a" d="M1763 395h11v11h-11z"/>
<path fill="#7cfa4a" d="M1763 405h11v11h-11z"/>
<path fill="#7cfa4a" d="M1763 415h11v11h-11z"/>
<path fill="#7cfa4a" d="M1763 425h11v11h-11z"/>
<path fill="#7cfa4c" d="M1763 435h11v11h-11z"/>
<path fill="#7cfa50" d="M1763 445h11v11h-11z"/>
<path fill="#7cfa56" d="M1763 455h11v11h-11z"/>
<path fill="#7dfa5f" d="M1763 465h11v11h-11z"/>
<path fill="#7dfa69" d="M1763 475h11v11h-11z"/>
<path fill="#7dfa75" d="M1763 485h11v11h-11z"/>
<path fill="#7dfa83" d="M1763 495h11v11h-11z"/>
<path fill="#7dfa91" d="M1763 505h11v11h-11z"/>
<path fill="#7efaa1" d="M1763 515h11v11h-11z"/>
<path fill="#7efab2" d="M1763 525h11v11h-11z"/>
<path fill="#7ffac3" d="M1763 535h11v11h-11z"/>
<path fill="#7ffad6" d="M1763 545h11v11h-11z"/>
<path fill="#7cfa4a" d="M1773 395h11v11h-11z"/>
<path fill="#7cfa4a" d="M1773 405h11v11h-11z"/>
<path fill="#7cfa4a" d="M1773 415h11v11h-11z"/>
<path fill="#7cfa4a" d="M1773 425h11v11h-11z"/>
<path fill="#7cfa4c" d="M1773 435h11v11h-11z"/>
<path fill="#7cfa50" d="M1773 445h11v11h-11z"/>
<path fill="#7cfa56" d="M1773 455h11v11h-11z"/>
<path fill="#7dfa5f" d="M1773 465h11v11h-11z"/>
<path fill="#7dfa69" d="M1773 475h11v11h-11z"/>
<path fill="#7dfa76" d="M1773 485h11v11h-11z"/>
<path fill="#7dfa83" d="M1773 495h11v11h-11z"/>
<path fill="#7dfa92" d="M1773 505h11v11h-11z"/>
<path fill="#7efaa2" d="M1773 515h11v11h-11z"/>
<path fill="#7efab4" d="M1773 525h11v11h-11z"/>
<path fill="#7ffac6" d="M1773 535h11v11h-11z"/>
<path fill="#7ffad9" d="M1773 545h11v11h-11z"/>
<path fill="#80faed" d="M1773 555h11v11h-11z"/>
<path fill="#7ef4fd" d="M1773 565h11v11h-11z"/>
<path fill="#74dffc" d="M1773 575h11v11h-11z"/>
<path fill="#7cfa4a" d="M1783 395h11v11h-11z"/>
<path fill="#7cfa4a" d="M1783 405h11v11h-11z"/>
<path fill="#7cfa4a" d="M1783 415h11v11h-11z"/>
<path fill="#7cfa4a" d="M1783 425h11v11h-11z"/>
<path fill="#7cfa4b" d="M1783 435h11v11h-11z"/>
<path fill="#7cfa4f" d="M1783 445h11v11h-11z"/>
<path fill="#7cfa56" d="M1783 455h11v11h-11z"/>
<path fill="#7dfa5f" d="M1783 465h11v11h-11z"/>
<path fill="#7dfa69" d="M1783 475h11v11h-11z"/>
<path fill="#7dfa76" d="M1783 485h11v11h-11z"/>
<path fill="#7dfa84" d="M1783 495h11v11h-11z"/>
<path fill="#7dfa93" d="M1783 505h11v11h-11z"/>
<path fill="#7efaa4" d="M1783 515h11v11h-11z"/>
<path fill="#7efab6" d="M1783 525h11v11h-11z"/>
<path fill="#7ffac8" d="M1783 535h11v11h-11z"/>
<path fill="#7ffadc" d="M1783 545h11v11h-11z"/>
<path fill="#80faf1" d="M1783 555h11v11h-11z"/>
<path fill="#7cf0fd" d="M1783 565h11v11h-11z"/>
<path fill="#72dbfc" d="M1783 575h11v11h-11z"/>
<path fill="#6ac9fb" d="M1783 585h11v11h-11z"/>
<path fill="#62b9fa" d="M1783 595h11v11h-11z"/>
<path fill="#5cabf9" d="M1783 605h11v11h-11z"/>
<path fill="#7cfa4a" d="M1793 385h11v11h-11z"/>
<path fill="#7cfa4a" d="M1793 395h11v11h-11z"/>
<path fill="#7cfa4a" d="M1793 405h11v11h-11z"/>
<path fill="#7cfa4a" d="M1793 415h11v11h-11z"/>
<path fill="#7cfa4a" d="M1793 425h11v11h-11z"/>
<path fill="#7cfa4b" d="M1793 435h11v11h-11z"/>
<path fill="#7cfa4f" d="M1793 445h11v11h-11z"/>
<path fill="#7cfa56" d="M1793 455h11v11h-11z"/>
<path fill="#7dfa5f" d="M1793 465h11v11h-11z"/>
<path fill="#7dfa6a" d="M1793 475h11v11h-11z"/>
<path fill="#7dfa76" d="M1793 485h11v11h-11z"/>
<path fill="#7dfa85" d="M1793 495h11v11h-11z"/>
<path fill="#7dfa94" d="M1793 505h11v11h-11z"/>
<path fill="#7efaa5" d="M1793 515h11v11h-11z"/>
<path fill="#7efab8" d="M1793 525h11v11h-11z"/>
<path fill="#7ffacb" d="M1793 535h11v11h-11z"/>
<path fill="#7ffadf" d="M1793 545h11v11h-11z"/>
<path fill="#80faf5" d="M1793 555h11v11h-11z"/>
<path fill="#7aebfc" d="M1793 565h11v11h-11z"/>
<path fill="#70d7fb" d="M1793 575h11v11h-11z"/>
<path fill="#68c5fa" d="M1793 585h11v11h-11z"/>
<path fill="#60b5fa" d="M1793 595h11v11h-11z"/>
<path fill="#5aa7f9" d="M1793 605h11v11h-11z"/>
<path fill="#549bf8" d="M1793 615h11v11h-11z"/>
<path fill="#4f8ff8" d="M1793 625h11v11h-11z"/>
<path fill="#4b85f8" d="M1793 635h11v11h-11z"/>
<path fill="#7cfa4a" d="M1803 385h11v11h-11z"/>
<path fill="#7cfa4a" d="M1803 395h11v11h-11z"/>
<path fill="#7cfa4a" d="M1803 405h11v11h-11z"/>
<path fill="#7cfa4a" d="M1803 415h11v11h-11z"/>
<path fill="#7cfa4a" d="M1803 425h11v11h-11z"/>
<path fill="#7cfa4b" d="M1803 435h11v11h-11z"/>
<path fill="#7cfa4f" d="M1803 445h11v11h-11z"/>
<path fill="#7cfa55" d="M1803 455h11v11h-11z"/>
<path fill="#7dfa5e" d="M1803 465h11v11h-11z"/>
<path fill="#7dfa6a" d="M1803 475h11v11h-11z"/>
<path fill="#7dfa77" d="M1803 485h11v11h-11z"/>
<path fill="#7dfa86" d="M1803 495h11v11h-11z"/>
<path fill="#7dfa96" d="M1803 505h11v11h-11z"/>
<path fill="#7efaa7" d="M1803 515h11v11h-11z"/>
<path fill="#7efaba" d="M1803 525h11v11h-11z"/>
<path fill="#7fface" d="M1803 535h11v11h-11z"/>
<path fill="#80fae3" d="M1803 545h11v11h-11z"/>
<path fill="#80faf9" d="M1803 555h11v11h-11z"/>
<path fill="#78e7fc" d="M1803 565h11v11h-11z"/>
<path fill="#6ed3fb" d="M1803 575h11v11h-11z"/>
<path fill="#66c1fa" d="M1803 585h11v11h-11z"/>
<path fill="#5eb2f9" d="M1803 595h11v11h-11z"/>
<path fill="#58a4f9" d="M1803 605h11v11h-11z"/>
<path fill="#5397f8" d="M1803 615h11v11h-11z"/>
<path fill="#4e8cf8" d="M1803 625h11v11h-11z"/>
<path fill="#4982f8" d="M1803 635h11v11h-11z"/>
<path fill="#4578f7" d="M1803 645h11v11h-11z"/>
<path fill="#4270f7" d="M1803 655h11v11h-11z"/>
<path fill="#7cfa4a" d="M1813 385h11v11h-11z"/>
<path fill="#7cfa4a" d="M1813 395h11v11h-11z"/>
<path fill="#7cfa4a" d="M1813 405h11v11h-11z"/>
<path fill="#7cfa4a" d="M1813 415h11v11h-11z"/>
<path fill="#7cfa4a" d="M1813 425h11v11h-11z"/>
<path fill="#7cfa4b" d="M1813 435h11v11h-11z"/>
<path fill="#7cfa4f" d="M1813 445h11v11h-11z"/>
<path fill="#7cfa55" d="M1813 455h11v11h-11z"/>
<path fill="#7dfa5e" d="M1813 465h11v11h-11z"/>
<path fill="#7dfa6a" d="M1813 475h11v11h-11z"/>
<path fill="#7dfa77" d="M1813 485h11v11h-11z"/>
<path fill="#7dfa86" d="M1813 495h11v11h-11z"/>
<path fill="#7dfa97" d="M1813 505h11v11h-11z"/>
<path fill="#7efaa9" d="M1813 515h11v11h-11z"/>
<path fill="#7efabc" d="M1813 525h11v11h-11z"/>
<path fill="#7ffad1" d="M1813 535h11v11h-11z"/>
<path fill="#80fae6" d="M1813 545h11v11h-11z"/>
<path fill="#80fafd" d="M1813 555h11v11h-11z"/>
<path fill="#75e3fc" d="M1813 565h11v11h-11z"/>
<path fill="#6ccffb" d="M1813 575h11v11h-11z"/>
<path fill="#64bdfa" d="M1813 585h11v11h-11z"/>
<path fill="#5dadf9" d="M1813 595h11v11h-11z"/>
<path fill="#56a0f9" d="M1813 605h11v11h-11z"/>
<path fill="#5193f8" d="M1813 615h11v11h-11z"/>
<path fill="#4c88f8" d="M1813 625h11v11h-11z"/>
<path fill="#487ef7" d="M1813 635h11v11h-11z"/>
<path fill="#4475f7" d="M1813 645h11v11h-11z"/>
<path fill="#406df7" d="M1813 655h11v11h-11z"/>
<path fill="#3d65f7" d="M1813 665h11v11h-11z"/>
<path fill="#3b5ef7" d="M1813 675h11v11h-11z"/>
<path fill="#7cfa4a" d="M1823 385h11v11h-11z"/>
<path fill="#7cfa4a" d="M1823 395h11v11h-11z"/>
<path fill="#7cfa4a" d="M1823 405h11v11h-11z"/>
<path fill="#7cfa4a" d="M1823 415h11v11h-11z"/>
<path fill="#7cfa4a" d="M1823 425h11v11h-11z"/>
<path fill="#7cfa4b" d="M1823 435h11v11h-11z"/>
<path fill="#7cfa4e" d="M1823 445h11v11h-11z"/>
<path fill="#7cfa55" d="M1823 455h11v11h-11z"/>
<path fill="#7dfa5e" d="M1823 465h11v11h-11z"/>
<path fill="#7dfa6a" d="M1823 475h11v11h-11z"/>
<path fill="#7dfa78" d="M1823 485h11v11h-11z"/>
<path fill="#7dfa87" d="M1823 495h11v11h-11z"/>
<path fill="#7dfa98" d="M1823 505h11v11h-11z"/>
<path fill="#7efaab" d="M1823 515h11v11h-11z"/>
<path fill="#7efabf" d="M1823 525h11v11h-11z"/>
<path fill="#7ffad4" d="M1823 535h11v11h-11z"/>
<path fill="#80faea" d="M1823 545h11v11h-11z"/>
<path fill="#7ef5fd" d="M1823 555h11v11h-11z"/>
<path fill="#73defc" d="M1823 565h11v11h-11z"/>
<path fill="#6acafb" d="M1823 575h11v11h-11z"/>
<path fill="#62b9fa" d="M1823 585h11v11h-11z"/>
<path fill="#5ba9f9" d="M1823 595h11v11h-11z"/>
<path fill="#559cf8" d="M1823 605h11v11h-11z"/>
<path fill="#4f90f8" d="M1823 615h11v11h-11z"/>
<path fill="#4a85f8" d="M1823 625h11v11h-11z"/>
<path fill="#467bf7" d="M1823 635h11v11h-11z"/>
<path fill="#4272f7" d="M1823 645h11v11h-11z"/>
<path fill="#3f69f7" d="M1823 655h11v11h-11z"/>
<path fill="#3c62f7" d="M1823 665h11v11h-11z"/>
<path fill="#395bf7" d="M1823 675h11v11h-11z"/>
<path fill="#3754f6" d="M1823 685h11v11h-11z"/>
<path fill="#354ff6" d="M1823 695h11v11h-11z"/>
<path fill="#7cfa4a" d="M1833 385h11v11h-11z"/>
<path fill="#7cfa4a" d="M1833 395h11v11h-11z"/>
<path fill="#7cfa4a" d="M1833 405h11v11h-11z"/>
<path fill="#7cfa4a" d="M1833 415h11v11h-11z"/>
<path fill="#7cfa4a" d="M1833 425h11v11h-11z"/>
<path fill="#7cfa4a" d="M1833 435h11v11h-11z"/>
<path fill="#7cfa4e" d="M1833 445h11v11h-11z"/>
<path fill="#7cfa54" d="M1833 455h11v11h-11z"/>
<path fill="#7dfa5e" d="M1833 465h11v11h-11z"/>
<path fill="#7dfa6a" d="M1833 475h11v11h-11z"/>
<path fill="#7dfa78" d="M1833 485h11v11h-11z"/>
<path fill="#7dfa88" d="M1833 495h11v11h-11z"/>
<path fill="#7efa9a" d="M1833 505h11v11h-11z"/>
<path fill="#7efaad" d="M1833 515h11v11h-11z"/>
<path fill="#7efac1" d="M1833 525h11v11h-11z"/>
<path fill="#7ffad7" d="M1833 535h11v11h-11z"/>
<path fill="#80faee" d="M1833 545h11v11h-11z"/>
<path fill="#7cf0fd" d="M1833 555h11v11h-11z"/>
<path fill="#71d9fb" d="M1833 565h11v11h-11z"/>
<path fill="#68c6fa" d="M1833 575h11v11h-11z"/>
<path fill="#60b5f9" d="M1833 585h11v11h-11z"/>
<path fill="#59a5f9" d="M1833 595h11v11h-11z"/>
<path fill="#5398f8" d="M1833 605h11v11h-11z"/>
<path fill="#4d8cf8" d="M1833 615h11v11h-11z"/>
<path fill="#4981f7" d="M1833 625h11v11h-11z"/>
<path fill="#4577f7" d="M1833 635h11v11h-11z"/>
<path fill="#416ef7" d="M1833 645h11v11h-11z"/>
<path fill="#3e66f7" d="M1833 655h11v11h-11z"/>
<path fill="#3b5ff7" d="M1833 665h11v11h-11z"/>
<path fill="#3858f6" d="M1833 675h11v11h-11z"/>
<path fill="#3651f6" d="M1833 685h11v11h-11z"/>
<path fill="#344cf6" d="M1833 695h11v11h-11z"/>
<path fill="#3246f6" d="M1833 705h11v11h-11z"/>
<path fill="#3141f6" d="M1833 715h11v11h-11z"/>
<path fill="#7cfa4a" d="M1843 385h11v11h-11z"/>
<path fill="#7cfa4a" d="M1843 395h11v11h-11z"/>
<path fill="#7cfa4a" d="M1843 405h11v11h-11z"/>
<path fill="#7cfa4a" d="M1843 415h11v11h-11z"/>
<path fill="#7cfa4a" d="M1843 425h11v11h-11z"/>
<path fill="#7cfa4a" d="M1843 435h11v11h-11z"/>
<path fill="#7cfa4e" d="M1843 445h11v11h-11z"/>
<path fill="#7cfa54" d="M1843 455h11v11h-11z"/>
<path fill="#7dfa5e" d="M1843 465h11v11h-11z"/>
<path fill="#7dfa6a" d="M1843 475h11v11h-11z"/>
<path fill="#7dfa79" d="M1843 485h11v11h-11z"/>
<path fill="#7dfa89" d="M1843 495h11v11h-11z"/>
<path fill="#7efa9b" d="M1843 505h11v11h-11z"/>
<path fill="#7efaaf" d="M1843 515h11v11h-11z"/>
<path fill="#7ffac4" d="M1843 525h11v11h-11z"/>
<path fill="#7ffada" d="M1843 535h11v11h-11z"/>
<path fill="#80faf2" d="M1843 545h11v11h-11z"/>
<path fill="#7aebfc" d="M1843 555h11v11h-11z"/>
<path fill="#6fd5fb" d="M1843 565h11v11h-11z"/>
<path fill="#66c1fa" d="M1843 575h11v11h-11z"/>
<path fill="#5eb0f9" d="M1843 585h11v11h-11z"/>
<path fill="#57a1f9" d="M1843 595h11v11h-11z"/>
<path fill="#5194f8" d="M1843 605h11v11h-11z"/>
<path fill="#4c88f8" d="M1843 615h11v11h-11z"/>
<path fill="#477df7" d="M1843 625h11v11h-11z"/>
<path fill="#4373f7" d="M1843 635h11v11h-11z"/>
<path fill="#406bf7" d="M1843 645h11v11h-11z"/>
<path fill="#3c63f7" d="M1843 655h11v11h-11z"/>
<path fill="#3a5bf7" d="M1843 665h11v11h-11z"/>
<path fill="#3755f6" d="M1843 675h11v11h-11z"/>
<path fill="#354ef6" d="M1843 685h11v11h-11z"/>
<path fill="#3349f6" d="M1843 695h11v11h-11z"/>
<path fill="#3143f6" d="M1843 705h11v11h-11z"/>
<path fill="#303ef6" d="M1843 715h11v11h-11z"/>
<path fill="#2e3af6" d="M1843 725h11v11h-11z"/>
<path fill="#2d35f6" d="M1843 735h11v11h-11z"/>
<path fill="#7cfa4a" d="M1853 385h11v11h-11z"/>
<path fill="#7cfa4a" d="M1853 395h11v11h-11z"/>
<path fill="#7cfa4a" d="M1853 405h11v11h-11z"/>
<path fill="#7cfa4a" d="M1853 415h11v11h-11z"/>
<path fill="#7cfa4a" d="M1853 425h11v11h-11z"/>
<path fill="#7cfa4a" d="M1853 435h11v11h-11z"/>
<path fill="#7cfa4d" d="M1853 445h11v11h-11z"/>
<path fill="#7cfa54" d="M1853 455h11v11h-11z"/>
<path fill="#7dfa5e" d="M1853 465h11v11h-11z"/>
<path fill="#7dfa6a" d="M1853 475h11v11h-11z"/>
<path fill="#7dfa79" d="M1853 485h11v11h-11z"/>
<path fill="#7dfa8a" d="M1853 495h11v11h-11z"/>
<path fill="#7efa9d" d="M1853 505h11v11h-11z"/>
<path fill="#7efab1" d="M1853 515h11v11h-11z"/>
<path fill="#7ffac7" d="M1853 525h11v11h-11z"/>
<path fill="#7ffade" d="M1853 535h11v11h-11z"/>
<path fill="#80faf7" d="M1853 545h11v11h-11z"/>
<path fill="#77e6fc" d="M1853 555h11v11h-11z"/>
<path fill="#6dd0fb" d="M1853 565h11v11h-11z"/>
<path fill="#64bdfa" d="M1853 575h11v11h-11z"/>
<path fill="#5cacf9" d="M1853 585h11v11h-11z"/>
<path fill="#559df8" d="M1853 595h11v11h-11z"/>
<path fill="#4f90f8" d="M1853 605h11v11h-11z"/>
<path fill="#4a84f8" d="M1853 615h11v11h-11z"/>
<path fill="#4679f7" d="M1853 625h11v11h-11z"/>
<path fill="#4270f7" d="M1853 635h11v11h-11z"/>
<path fill="#3e67f7" d="M1853 645h11v11h-11z"/>
<path fill="#3b5ff7" d="M1853 655h11v11h-11z"/>
<path fill="#3858f6" d="M1853 665h11v11h-11z"/>
<path fill="#3651f6" d="M1853 675h11v11h-11z"/>
<path fill="#344bf6" d="M1853 685h11v11h-11z"/>
<path fill="#3246f6" d="M1853 695h11v11h-11z"/>
<path fill="#3040f6" d="M1853 705h11v11h-11z"/>
<path fill="#2f3bf6" d="M1853 715h11v11h-11z"/>
<path fill="#2e37f6" d="M1853 725h11v11h-11z"/>
<path fill="#2c33f6" d="M1853 735h11v11h-11z"/>
<path fill="#2b2ff6" d="M1853 745h11v11h-11z"/>
<path fill="#2b2bf6" d="M1853 755h11v11h-11z"/>
<path fill="#7cfa4a" d="M1863 385h11v11h-11z"/>
<path fill="#7cfa4a" d="M1863 395h11v11h-11z"/>
<path fill="#7cfa4a" d="M1863 405h11v11h-11z"/>
<path fill="#7cfa4a" d="M1863 415h11v11h-11z"/>
<path fill="#7cfa4a" d="M1863 425h11v11h-11z"/>
<path fill="#7cfa4a" d="M1863 435h11v11h-11z"/>
<path fill="#7cfa4d" d="M1863 445h11v11h-11z"/>
<path fill="#7cfa53" d="M1863 455h11v11h-11z"/>
<path fill="#7dfa5d" d="M1863 465h11v11h-11z"/>
<path fill="#7dfa6a" d="M1863 475h11v11h-11z"/>
<path fill="#7dfa7a" d="M1863 485h11v11h-11z"/>
<path fill="#7dfa8b" d="M1863 495h11v11h-11z"/>
<path fill="#7efa9e" d="M1863 505h11v11h-11z"/>
<path fill="#7efab3" d="M1863 515h11v11h-11z"/>
<path fill="#7ffaca" d="M1863 525h11v11h-11z"/>
<path fill="#7ffae2" d="M1863 535h11v11h-11z"/>
<path fill="#80fafc" d="M1863 545h11v11h-11z"/>
<path fill="#75e1fc" d="M1863 555h11v11h-11z"/>
<path fill="#6acbfb" d="M1863 565h11v11h-11z"/>
<path fill="#62b8fa" d="M1863 575h11v11h-11z"/>
<path fill="#5aa7f9" d="M1863 585h11v11h-11z"/>
<path fill="#5399f8" d="M1863 595h11v11h-11z"/>
<path fill="#4d8cf8" d="M1863 605h11v11h-11z"/>
<path fill="#4880f7" d="M1863 615h11v11h-11z"/>
<path fill="#4476f7" d="M1863 625h11v11h-11z"/>
<path fill="#406cf7" d="M1863 635h11v11h-11z"/>
<path fill="#3d64f7" d="M1863 645h11v11h-11z"/>
<path fill="#3a5cf7" d="M1863 655h11v11h-11z"/>
<path fill="#3755f6" d="M1863 665h11v11h-11z"/>
<path fill="#354ef6" d="M1863 675h11v11h-11z"/>
<path fill="#3348f6" d="M1863 685h11v11h-11z"/>
<path fill="#3143f6" d="M1863 695h11v11h-11z"/>
<path fill="#2f3df6" d="M1863 705h11v11h-11z"/>
<path fill="#2e39f6" d="M1863 715h11v11h-11z"/>
<path fill="#2d34f6" d="M1863 725h11v11h-11z"/>
<path fill="#2c30f6" d="M1863 735h11v11h-11z"/>
<path fill="#2b2cf6" d="M1863 745h11v11h-11z"/>
<path fill="#2a28f6" d="M1863 755h11v11h-11z"/>
<path fill="#2925f6" d="M1863 765h11v11h-11z"/>
<path fill="#2922f6" d="M1863 775h11v11h-11z"/>
<path fill="#7cfa4a" d="M1873 385h11v11h-11z"/>
<path fill="#7cfa4a" d="M1873 395h11v11h-11z"/>
<path fill="#7cfa4a" d="M1873 405h11v11h-11z"/>
<path fill="#7cfa4a" d="M1873 415h11v11h-11z"/>
<path fill="#7cfa4a" d="M1873 425h11v11h-11z"/>
<path fill="#7cfa4a" d="M1873 435h11v11h-11z"/>
<path fill="#7cfa4d" d="M1873 445h11v11h-11z"/>
<path fill="#7cfa53" d="M1873 455h11v11h-11z"/>
<path fill="#7dfa5d" d="M1873 465h11v11h-11z"/>
<path fill="#7dfa6a" d="M1873 475h11v11h-11z"/>
<path fill="#7dfa7a" d="M1873 485h11v11h-11z"/>
<path fill="#7dfa8c" d="M1873 495h11v11h-11z"/>
<path fill="#7efaa0" d="M1873 505h11v11h-11z"/>
<path fill="#7efab6" d="M1873 515h11v11h-11z"/>
<path fill="#7ffacd" d="M1873 525h11v11h-11z"/>
<path fill="#80fae6" d="M1873 535h11v11h-11z"/>
<path fill="#7ff6fd" d="M1873 545h11v11h-11z"/>
<path fill="#73dcfc" d="M1873 555h11v11h-11z"/>
<path fill="#68c6fa" d="M1873 565h11v11h-11z"/>
<path fill="#5fb3f9" d="M1873 575h11v11h-11z"/>
<path fill="#58a3f9" d="M1873 585h11v11h-11z"/>
<path fill="#5194f8" d="M1873 595h11v11h-11z"/>
<path fill="#4c87f8" d="M1873 605h11v11h-11z"/>
<path fill="#477cf7" d="M1873 615h11v11h-11z"/>
<path fill="#4272f7" d="M1873 625h11v11h-11z"/>
<path fill="#3f68f7" d="M1873 635h11v11h-11z"/>
<path fill="#3b60f7" d="M1873 645h11v11h-11z"/>
<path fill="#3858f6" d="M1873 655h11v11h-11z"/>
<path fill="#3651f6" d="M1873 665h11v11h-11z"/>
<path fill="#344bf6" d="M1873 675h11v11h-11z"/>
<path fill="#3245f6" d="M1873 685h11v11h-11z"/>
<path fill="#3040f6" d="M1873 695h11v11h-11z"/>
<path fill="#2f3af6" d="M1873 705h11v11h-11z"/>
<path fill="#2d36f6" d="M1873 715h11v11h-11z"/>
<path fill="#2c31f6" d="M1873 725h11v11h-11z"/>
<path fill="#2b2df6" d="M1873 735h11v11h-11z"/>
<path fill="#2a29f6" d="M1873 745h11v11h-11z"/>
<path fill="#2a26f6" d="M1873 755h11v11h-11z"/>
<path fill="#2922f6" d="M1873 765h11v11h-11z"/>
<path fill="#281ff6" d="M1873 775h11v11h-11z"/>
<path fill="#281cf6" d="M1873 785h11v11h-11z"/>
<path fill="#7cfa4a" d="M1883 385h11v11h-11z"/>
<path fill="#7cfa4a" d="M1883 395h11v11h-11z"/>
<path fill="#7cfa4a" d="M1883 405h11v11h-11z"/>
<path fill="#7cfa4a" d="M1883 415h11v11h-11z"/>
<path fill="#7cfa4a" d="M1883 425h11v11h-11z"/>
<path fill="#7cfa4a" d="M1883 435h11v11h-11z"/>
<path fill="#7cfa4c" d="M1883 445h11v11h-11z"/>
<path fill="#7cfa53" d="M1883 455h11v11h-11z"/>
<path fill="#7dfa5d" d="M1883 465h11v11h-11z"/>
<path fill="#7dfa6b" d="M1883 475h11v11h-11z"/>
<path fill="#7dfa7b" d="M1883 485h11v11h-11z"/>
<path fill="#7dfa8d" d="M1883 495h11v11h-11z"/>
<path fill="#7efaa2" d="M1883 505h11v11h-11z"/>
<path fill="#7efab8" d="M1883 515h11v11h-11z"/>
<path fill="#7ffad1" d="M1883 525h11v11h-11z"/>
<path fill="#80faea" d="M1883 535h11v11h-11z"/>
<path fill="#7cf1fd" d="M1883 545h11v11h-11z"/>
<path fill="#70d7fb" d="M1883 555h11v11h-11z"/>
<path fill="#66c1fa" d="M1883 565h11v11h-11z"/>
<path fill="#5daff9" d="M1883 575h11v11h-11z"/>
<path fill="#569ef9" d="M1883 585h11v11h-11z"/>
<path fill="#4f90f8" d="M1883 595h11v11h-11z"/>
<path fill="#4a83f8" d="M1883 605h11v11h-11z"/>
<path fill="#4578f7" d="M1883 615h11v11h-11z"/>
<path fill="#416ef7" d="M1883 625h11v11h-11z"/>
<path fill="#3d65f7" d="M1883 635h11v11h-11z"/>
<path fill="#3a5cf7" d="M1883 645h11v11h-11z"/>
<path fill="#3755f6" d="M1883 655h11v11h-11z"/>
<path fill="#354ef6" d="M1883 665h11v11h-11z"/>
<path fill="#3348f6" d="M1883 675h11v11h-11z"/>
<path fill="#3142f6" d="M1883 685h11v11h-11z"/>
<path fill="#2f3df6" d="M1883 695h11v11h-11z"/>
<path fill="#2e38f6" d="M1883 705h11v11h-11z"/>
<path fill="#2d33f6" d="M1883 715h11v11h-11z"/>
<path fill="#2b2ff6" d="M1883 725h11v11h-11z"/>
<path fill="#2b2bf6" d="M1883 735h11v11h-11z"/>
<path fill="#2a27f6" d="M1883 745h11v11h-11z"/>
<path fill="#2923f6" d="M1883 755h11v11h-11z"/>
<path fill="#2920f6" d="M1883 765h11v11h-11z"/>
<path fill="#281df6" d="M1883 775h11v11h-11z"/>
<path fill="#281af6" d="M1883 785h11v11h-11z"/>
<path fill="#2717f6" d="M1883 795h11v11h-11z"/>
<path fill="#2714f6" d="M1883 805h11v11h-11z"/>
<path fill="#7cfa4a" d="M1893 395h11v11h-11z"/>
<path fill="#7cfa4a" d="M1893 405h11v11h-11z"/>
<path fill="#7cfa4a" d="M1893 415h11v11h-11z"/>
<path fill="#7cfa4a" d="M1893 425h11v11h-11z"/>
<path fill="#7cfa4a" d="M1893 435h11v11h-11z"/>
<path fill="#7cfa4c" d="M1893 445h11v11h-11z"/>
<path fill="#7cfa52" d="M1893 455h11v11h-11z"/>
<path fill="#7dfa5d" d="M1893 465h11v11h-11z"/>
<path fill="#7dfa6b" d="M1893 475h11v11h-11z"/>
<path fill="#7dfa7c" d="M1893 485h11v11h-11z"/>
<path fill="#7dfa8f" d="M1893 495h11v11h-11z"/>
<path fill="#7efaa4" d="M1893 505h11v11h-11z"/>
<path fill="#7efabb" d="M1893 515h11v11h-11z"/>
<path fill="#7ffad4" d="M1893 525h11v11h-11z"/>
<path fill="#80faef" d="M1893 535h11v11h-11z"/>
<path fill="#7aebfc" d="M1893 545h11v11h-11z"/>
<path fill="#6ed2fb" d="M1893 555h11v11h-11z"/>
<path fill="#63bcfa" d="M1893 565h11v11h-11z"/>
<path fill="#5baaf9" d="M1893 575h11v11h-11z"/>
<path fill="#549af8" d="M1893 585h11v11h-11z"/>
<path fill="#4d8bf8" d="M1893 595h11v11h-11z"/>
<path fill="#487ff7" d="M1893 605h11v11h-11z"/>
<path fill="#4374f7" d="M1893 615h11v11h-11z"/>
<path fill="#3f6af7" d="M1893 625h11v11h-11z"/>
<path fill="#3c61f7" d="M1893 635h11v11h-11z"/>
<path fill="#3959f6" d="M1893 645h11v11h-11z"/>
<path fill="#3651f6" d="M1893 655h11v11h-11z"/>
<path fill="#344bf6" d="M1893 665h11v11h-11z"/>
<path fill="#3244f6" d="M1893 675h11v11h-11z"/>
<path fill="#303ff6" d="M1893 685h11v11h-11z"/>
<path fill="#2e39f6" d="M1893 695h11v11h-11z"/>
<path fill="#2d35f6" d="M1893 705h11v11h-11z"/>
<path fill="#2c30f6" d="M1893 715h11v11h-11z"/>
<path fill="#2b2cf6" d="M1893 725h11v11h-11z"/>
<path fill="#2a28f6" d="M1893 735h11v11h-11z"/>
<path fill="#2924f6" d="M1893 745h11v11h-11z"/>
<path fill="#2921f6" d="M1893 755h11v11h-11z"/>
<path fill="#281df6" d="M1893 765h11v11h-11z"/>
<path fill="#281af6" d="M1893 775h11v11h-11z"/>
<path fill="#2717f6" d="M1893 785h11v11h-11z"/>
<path fill="#2715f6" d="M1893 795h11v11h-11z"/>
<path fill="#2712f6" d="M1893 805h11v11h-11z"/>
<path fill="#2710f6" d="M1893 815h11v11h-11z"/>
<path fill="#260df6" d="M1893 825h11v11h-11z"/>
<path fill="#7cfa4a" d="M1903 395h11v11h-11z"/>
<path fill="#7cfa4a" d="M1903 405h11v11h-11z"/>
<path fill="#7cfa4a" d="M1903 415h11v11h-11z"/>
<path fill="#7cfa4a" d="M1903 425h11v11h-11z"/>
<path fill="#7cfa4a" d="M1903 435h11v11h-11z"/>
<path fill="#7cfa4c" d="M1903 445h11v11h-11z"/>
<path fill="#7cfa52" d="M1903 455h11v11h-11z"/>
<path fill="#7dfa5d" d="M1903 465h11v11h-11z"/>
<path fill="#7dfa6b" d="M1903 475h11v11h-11z"/>
<path fill="#7dfa7c" d="M1903 485h11v11h-11z"/>
<path fill="#7dfa90" d="M1903 495h11v11h-11z"/>
<path fill="#7efaa6" d="M1903 505h11v11h-11z"/>
<path fill="#7efabe" d="M1903 515h11v11h-11z"/>
<path fill="#7ffad8" d="M1903 525h11v11h-11z"/>
<path fill="#80faf4" d="M1903 535h11v11h-11z"/>
<path fill="#77e6fc" d="M1903 545h11v11h-11z"/>
<path fill="#6bccfb" d="M1903 555h11v11h-11z"/>
<path fill="#61b7fa" d="M1903 565h11v11h-11z"/>
<path fill="#59a5f9" d="M1903 575h11v11h-11z"/>
<path fill="#5295f8" d="M1903 585h11v11h-11z"/>
<path fill="#4b87f8" d="M1903 595h11v11h-11z"/>
<path fill="#467bf7" d="M1903 605h11v11h-11z"/>
<path fill="#4270f7" d="M1903 615h11v11h-11z"/>
<path fill="#3e66f7" d="M1903 625h11v11h-11z"/>
<path fill="#3a5df7" d="M1903 635h11v11h-11z"/>
<path fill="#3755f6" d="M1903 645h11v11h-11z"/>
<path fill="#354ef6" d="M1903 655h11v11h-11z"/>
<path fill="#3247f6" d="M1903 665h11v11h-11z"/>
<path fill="#3141f6" d="M1903 675h11v11h-11z"/>
<path fill="#2f3bf6" d="M1903 685h11v11h-11z"/>
<path fill="#2d36f6" d="M1903 695h11v11h-11z"/>
<path fill="#2c32f6" d="M1903 705h11v11h-11z"/>
<path fill="#2b2df6" d="M1903 715h11v11h-11z"/>
<path fill="#2a29f6" d="M1903 725h11v11h-11z"/>
<path fill="#2925f6" d="M1903 735h11v11h-11z"/>
<path fill="#2921f6" d="M1903 745h11v11h-11z"/>
<path fill="#281ef6" d="M1903 755h11v11h-11z"/>
<path fill="#281bf6" d="M1903 765h11v11h-11z"/>
<path fill="#2718f6" d="M1903 775h11v11h-11z"/>
<path fill="#2715f6" d="M1903 785h11v11h-11z"/>
<path fill="#2712f6" d="M1903 795h11v11h-11z"/>
<path fill="#2710f6" d="M1903 805h11v11h-11z"/>
<path fill="#260df6" d="M1903 815h11v11h-11z"/>
<path fill="#260bf6" d="M1903 825h11v11h-11z"/>
<path fill="#2609f6" d="M1903 835h11v11h-11z"/>
<path fill="#7dfa4a" d="M1913 395h11v11h-11z"/>
<path fill="#7dfa4a" d="M1913 405h11v11h-11z"/>
<path fill="#7cfa4a" d="M1913 415h11v11h-11z"/>
<path fill="#7cfa4a" d="M1913 425h11v11h-11z"/>
<path fill="#7cfa4a" d="M1913 435h11v11h-11z"/>
<path fill="#7cfa4b" d="M1913 445h11v11h-11z"/>
<path fill="#7cfa52" d="M1913 455h11v11h-11z"/>
<path fill="#7dfa5c" d="M1913 465h11v11h-11z"/>
<path fill="#7dfa6b" d="M1913 475h11v11h-11z"/>
<path fill="#7dfa7d" d="M1913 485h11v11h-11z"/>
<path fill="#7dfa92" d="M1913 495h11v11h-11z"/>
<path fill="#7efaa8" d="M1913 505h11v11h-11z"/>
<path fill="#7efac1" d="M1913 515h11v11h-11z"/>
<path fill="#7ffadc" d="M1913 525h11v11h-11z"/>
<path fill="#80faf9" d="M1913 535h11v11h-11z"/>
<path fill="#74e0fc" d="M1913 545h11v11h-11z"/>
<path fill="#68c7fa" d="M1913 555h11v11h-11z"/>
<path fill="#5fb2f9" d="M1913 565h11v11h-11z"/>
<path fill="#56a0f9" d="M1913 575h11v11h-11z"/>
<path fill="#4f90f8" d="M1913 585h11v11h-11z"/>
<path fill="#4982f8" d="M1913 595h11v11h-11z"/>
<path fill="#4476f7" d="M1913 605h11v11h-11z"/>
<path fill="#406cf7" d="M1913 615h11v11h-11z"/>
<path fill="#3c62f7" d="M1913 625h11v11h-11z"/>
<path fill="#3959f6" d="M1913 635h11v11h-11z"/>
<path fill="#3651f6" d="M1913 645h11v11h-11z"/>
<path fill="#334af6" d="M1913 655h11v11h-11z"/>
<path fill="#3144f6" d="M1913 665h11v11h-11z"/>
<path fill="#2f3ef6" d="M1913 675h11v11h-11z"/>
<path fill="#2e38f6" d="M1913 685h11v11h-11z"/>
<path fill="#2d33f6" d="M1913 695h11v11h-11z"/>
<path fill="#2b2ef6" d="M1913 705h11v11h-11z"/>
<path fill="#2a2af6" d="M1913 715h11v11h-11z"/>
<path fill="#2a26f6" d="M1913 725h11v11h-11z"/>
<path fill="#2922f6" d="M1913 735h11v11h-11z"/>
<path fill="#281ff6" d="M1913 745h11v11h-11z"/>
<path fill="#281bf6" d="M1913 755h11v11h-11z"/>
<path fill="#2718f6" d="M1913 765h11v11h-11z"/>
<path fill="#2715f6" d="M1913 775h11v11h-11z"/>
<path fill="#2713f6" d="M1913 785h11v11h-11z"/>
<path fill="#2710f6" d="M1913 795h11v11h-11z"/>
<path fill="#260ef6" d="M1913 805h11v11h-11z"/>
<path fill="#260bf6" d="M1913 815h11v11h-11z"/>
<path fill="#2609f6" d="M1913 825h11v11h-11z"/>
<path fill="#2607f6" d="M1913 835h11v11h-11z"/>
<path fill="#2605f6" d="M1913 845h11v11h-11z"/>
<path fill="#2603f6" d="M1913 855h11v11h-11z"/>
<path fill="#7ffa4a" d="M1923 395h11v11h-11z"/>
<path fill="#7ffa4a" d="M1923 405h11v11h-11z"/>
<path fill="#7ffa4a" d="M1923 415h11v11h-11z"/>
<path fill="#7efa4a" d="M1923 425h11v11h-11z"/>
<path fill="#7efa4a" d="M1923 435h11v11h-11z"/>
<path fill="#7efa4b" d="M1923 445h11v11h-11z"/>
<path fill="#7dfa51" d="M1923 455h11v11h-11z"/>
<path fill="#7dfa5c" d="M1923 465h11v11h-11z"/>
<path fill="#7dfa6b" d="M1923 475h11v11h-11z"/>
<path fill="#7dfa7e" d="M1923 485h11v11h-11z"/>
<path fill="#7dfa93" d="M1923 495h11v11h-11z"/>
<path fill="#7efaab" d="M1923 505h11v11h-11z"/>
<path fill="#7ffac5" d="M1923 515h11v11h-11z"/>
<path fill="#7ffae1" d="M1923 525h11v11h-11z"/>
<path fill="#80f8fd" d="M1923 535h11v11h-11z"/>
<path fill="#71dafb" d="M1923 545h11v11h-11z"/>
<path fill="#66c1fa" d="M1923 555h11v11h-11z"/>
<path fill="#5cadf9" d="M1923 565h11v11h-11z"/>
<path fill="#549bf8" d="M1923 575h11v11h-11z"/>
<path fill="#4d8bf8" d="M1923 585h11v11h-11z"/>
<path fill="#477ef7" d="M1923 595h11v11h-11z"/>
<path fill="#4272f7" d="M1923 605h11v11h-11z"/>
<path fill="#3e67f7" d="M1923 615h11v11h-11z"/>
<path fill="#3a5ef7" d="M1923 625h11v11h-11z"/>
<path fill="#3755f6" d="M1923 635h11v11h-11z"/>
<path fill="#354ef6" d="M1923 645h11v11h-11z"/>
<path fill="#3247f6" d="M1923 655h11v11h-11z"/>
<path fill="#3040f6" d="M1923 665h11v11h-11z"/>
<path fill="#2f3af6" d="M1923 675h11v11h-11z"/>
<path fill="#2d35f6" d="M1923 685h11v11h-11z"/>
<path fill="#2c30f6" d="M1923 695h11v11h-11z"/>
<path fill="#2b2bf6" d="M1923 705h11v11h-11z"/>
<path fill="#2a27f6" d="M1923 715h11v11h-11z"/>
<path fill="#2923f6" d="M1923 725h11v11h-11z"/>
<path fill="#281ff6" d="M1923 735h11v11h-11z"/>
<path fill="#281cf6" d="M1923 745h11v11h-11z"/>
<path fill="#2819f6" d="M1923 755h11v11h-11z"/>
<path fill="#2716f6" d="M1923 765h11v11h-11z"/>
<path fill="#2713f6" d="M1923 775h11v11h-11z"/>
<path fill="#2710f6" d="M1923 785h11v11h-11z"/>
<path fill="#260ef6" d="M1923 795h11v11h-11z"/>
<path fill="#260bf6" d="M1923 805h11v11h-11z"/>
<path fill="#2609f6" d="M1923 815h11v11h-11z"/>
<path fill="#2607f6" d="M1923 825h11v11h-11z"/>
<path fill="#2605f6" d="M1923 835h11v11h-11z"/>
<path fill="#2603f6" d="M1923 845h11v11h-11z"/>
<path fill="#2602f6" d="M1923 855h11v11h-11z"/>
<path fill="#2602f6" d="M1923 865h11v11h-11z"/>
<path fill="#85fa4a" d="M1933 395h11v11h-11z"/>
<path fill="#85fa4a" d="M1933 405h11v11h-11z"/>
<path fill="#84fa4a" d="M1933 415h11v11h-11z"/>
<path fill="#83fa4a" d="M1933 425h11v11h-11z"/>
<path fill="#83fa4a" d="M1933 435h11v11h-11z"/>
<path fill="#82fa4b" d="M1933 445h11v11h-11z"/>
<path fill="#82fa51" d="M1933 455h11v11h-11z"/>
<path fill="#81fa5c" d="M1933 465h11v11h-11z"/>
<path fill="#81fa6c" d="M1933 475h11v11h-11z"/>
<path fill="#81fa7f" d="M1933 485h11v11h-11z"/>
<path fill="#80fa95" d="M1933 495h11v11h-11z"/>
<path fill="#80faad" d="M1933 505h11v11h-11z"/>
<path fill="#81fac8" d="M1933 515h11v11h-11z"/>
<path fill="#81fae6" d="M1933 525h11v11h-11z"/>
<path fill="#7ef2fd" d="M1933 535h11v11h-11z"/>
<path fill="#6fd4fb" d="M1933 545h11v11h-11z"/>
<path fill="#64bcfa" d="M1933 555h11v11h-11z"/>
<path fill="#5aa7f9" d="M1933 565h11v11h-11z"/>
<path fill="#5296f8" d="M1933 575h11v11h-11z"/>
<path fill="#4b86f8" d="M1933 585h11v11h-11z"/>
<path fill="#4579f7" d="M1933 595h11v11h-11z"/>
<path fill="#416df7" d="M1933 605h11v11h-11z"/>
<path fill="#3c63f7" d="M1933 615h11v11h-11z"/>
<path fill="#395af6" d="M1933 625h11v11h-11z"/>
<path fill="#3651f6" d="M1933 635h11v11h-11z"/>
<path fill="#334af6" d="M1933 645h11v11h-11z"/>
<path fill="#3143f6" d="M1933 655h11v11h-11z"/>
<path fill="#2f3df6" d="M1933 665h11v11h-11z"/>
<path fill="#2e37f6" d="M1933 675h11v11h-11z"/>
<path fill="#2c32f6" d="M1933 685h11v11h-11z"/>
<path fill="#2b2df6" d="M1933 695h11v11h-11z"/>
<path fill="#2a28f6" d="M1933 705h11v11h-11z"/>
<path fill="#2924f6" d="M1933 715h11v11h-11z"/>
<path fill="#2920f6" d="M1933 725h11v11h-11z"/>
<path fill="#281df6" d="M1933 735h11v11h-11z"/>
<path fill="#2819f6" d="M1933 745h11v11h-11z"/>
<path fill="#2716f6" d="M1933 755h11v11h-11z"/>
<path fill="#2713f6" d="M1933 765h11v11h-11z"/>
<path fill="#2710f6" d="M1933 775h11v11h-11z"/>
<path fill="#260ef6" d="M1933 785h11v11h-11z"/>
<path fill="#260bf6" d="M1933 795h11v11h-11z"/>
<path fill="#2609f6" d="M1933 805h11v11h-11z"/>
<path fill="#2607f6" d="M1933 815h11v11h-11z"/>
<path fill="#2605f6" d="M1933 825h11v11h-11z"/>
<path fill="#2603f6" d="M1933 835h11v11h-11z"/>
<path fill="#2602f6" d="M1933 845h11v11h-11z"/>
<path fill="#2602f6" d="M1933 855h11v11h-11z"/>
<path fill="#2602f6" d="M1933 865h11v11h-11z"/>
<path fill="#2602f6" d="M1933 875h11v11h-11z"/>
<path fill="#8efa4a" d="M1943 395h11v11h-11z"/>
<path fill="#8efa4a" d="M1943 405h11v11h-11z"/>
<path fill="#8dfa4a" d="M1943 415h11v11h-11z"/>
<path fill="#8cfa4a" d="M1943 425h11v11h-11z"/>
<path fill="#8cfa4a" d="M1943 435h11v11h-11z"/>
<path fill="#8bfa4b" d="M1943 445h11v11h-11z"/>
<path fill="#8afa51" d="M1943 455h11v11h-11z"/>
<path fill="#8afa5c" d="M1943 465h11v11h-11z"/>
<path fill="#89fa6c" d="M1943 475h11v11h-11z"/>
<path fill="#89fa80" d="M1943 485h11v11h-11z"/>
<path fill="#88fa97" d="M1943 495h11v11h-11z"/>
<path fill="#88fab0" d="M1943 505h11v11h-11z"/>
<path fill="#88facc" d="M1943 515h11v11h-11z"/>
<path fill="#88faeb" d="M1943 525h11v11h-11z"/>
<path fill="#81ebfd" d="M1943 535h11v11h-11z"/>
<path fill="#71cefb" d="M1943 545h11v11h-11z"/>
<path fill="#65b6fa" d="M1943 555h11v11h-11z"/>
<path fill="#5aa2f9" d="M1943 565h11v11h-11z"/>
<path fill="#5290f8" d="M1943 575h11v11h-11z"/>
<path fill="#4b81f8" d="M1943 585h11v11h-11z"/>
<path fill="#4574f7" d="M1943 595h11v11h-11z"/>
<path fill="#3f69f7" d="M1943 605h11v11h-11z"/>
<path fill="#3b5ff7" d="M1943 615h11v11h-11z"/>
<path fill="#3856f6" d="M1943 625h11v11h-11z"/>
<path fill="#354df6" d="M1943 635h11v11h-11z"/>
<path fill="#3246f6" d="M1943 645h11v11h-11z"/>
<path fill="#303ff6" d="M1943 655h11v11h-11z"/>
<path fill="#2e39f6" d="M1943 665h11v11h-11z"/>
<path fill="#2d34f6" d="M1943 675h11v11h-11z"/>
<path fill="#2b2ef6" d="M1943 685h11v11h-11z"/>
<path fill="#2a2af6" d="M1943 695h11v11h-11z"/>
<path fill="#2925f6" d="M1943 705h11v11h-11z"/>
<path fill="#2921f6" d="M1943 715h11v11h-11z"/>
<path fill="#281df6" d="M1943 725h11v11h-11z"/>
<path fill="#281af6" d="M1943 735h11v11h-11z"/>
<path fill="#2717f6" d="M1943 745h11v11h-11z"/>
<path fill="#2713f6" d="M1943 755h11v11h-11z"/>
<path fill="#2711f6" d="M1943 765h11v11h-11z"/>
<path fill="#260ef6" d="M1943 775h11v11h-11z"/>
<path fill="#260bf6" d="M1943 785h11v11h-11z"/>
<path fill="#2609f6" d="M1943 795h11v11h-11z"/>
<path fill="#2607f6" d="M1943 805h11v11h-11z"/>
<path fill="#2605f6" d="M1943 815h11v11h-11z"/>
<path fill="#2603f6" d="M1943 825h11v11h-11z"/>
<path fill="#2602f6" d="M1943 835h11v11h-11z"/>
<path fill="#2602f6" d="M1943 845h11v11h-11z"/>
<path fill="#2602f6" d="M1943 855h11v11h-11z"/>
<path fill="#2602f6" d="M1943 865h11v11h-11z"/>
<path fill="#2602f6" d="M1943 875h11v11h-11z"/>
<path fill="#2602f6" d="M1943 885h11v11h-11z"/>
<path fill="#9bfa4b" d="M1953 395h11v11h-11z"/>
<path fill="#9afa4b" d="M1953 405h11v11h-11z"/>
<path fill="#9afa4b" d="M1953 415h11v11h-11z"/>
<path fill="#99fa4b" d="M1953 425h11v11h-11z"/>
<path fill="#99fa4b" d="M1953 435h11v11h-11z"/>
<path fill="#98fa4b" d="M1953 445h11v11h-11z"/>
<path fill="#98fa51" d="M1953 455h11v11h-11z"/>
<path fill="#97fa5c" d="M1953 465h11v11h-11z"/>
<path fill="#97fa6c" d="M1953 475h11v11h-11z"/>
<path fill="#96fa81" d="M1953 485h11v11h-11z"/>
<path fill="#96fa99" d="M1953 495h11v11h-11z"/>
<path fill="#96fab3" d="M1953 505h11v11h-11z"/>
<path fill="#96fad1" d="M1953 515h11v11h-11z"/>
<path fill="#96faf1" d="M1953 525h11v11h-11z"/>
<path fill="#8ae5fc" d="M1953 535h11v11h-11z"/>
<path fill="#79c8fb" d="M1953 545h11v11h-11z"/>
<path fill="#6bb1f9" d="M1953 555h11v11h-11z"/>
<path fill="#609cf9" d="M1953 565h11v11h-11z"/>
<path fill="#568bf8" d="M1953 575h11v11h-11z"/>
<path fill="#4e7df7" d="M1953 585h11v11h-11z"/>
<path fill="#4870f7" d="M1953 595h11v11h-11z"/>
<path fill="#4264f7" d="M1953 605h11v11h-11z"/>
<path fill="#3d5af6" d="M1953 615h11v11h-11z"/>
<path fill="#3951f6" d="M1953 625h11v11h-11z"/>
<path fill="#3549f6" d="M1953 635h11v11h-11z"/>
<path fill="#3242f6" d="M1953 645h11v11h-11z"/>
<path fill="#303cf6" d="M1953 655h11v11h-11z"/>
<path fill="#2e36f6" d="M1953 665h11v11h-11z"/>
<path fill="#2c30f6" d="M1953 675h11v11h-11z"/>
<path fill="#2b2bf6" d="M1953 685h11v11h-11z"/>
<path fill="#2a26f6" d="M1953 695h11v11h-11z"/>
<path fill="#2922f6" d="M1953 705h11v11h-11z"/>
<path fill="#281ef6" d="M1953 715h11v11h-11z"/>
<path fill="#281af6" d="M1953 725h11v11h-11z"/>
<path fill="#2717f6" d="M1953 735h11v11h-11z"/>
<path fill="#2714f6" d="M1953 745h11v11h-11z"/>
<path fill="#2711f6" d="M1953 755h11v11h-11z"/>
<path fill="#270ef6" d="M1953 765h11v11h-11z"/>
<path fill="#260bf6" d="M1953 775h11v11h-11z"/>
<path fill="#2609f6" d="M1953 785h11v11h-11z"/>
<path fill="#2607f6" d="M1953 795h11v11h-11z"/>
<path fill="#2604f6" d="M1953 805h11v11h-11z"/>
<path fill="#2603f6" d="M1953 815h11v11h-11z"/>
<path fill="#2602f6" d="M1953 825h11v11h-11z"/>
<path fill="#2602f6" d="M1953 835h11v11h-11z"/>
<path fill="#2602f6" d="M1953 845h11v11h-11z"/>
<path fill="#2602f6" d="M1953 855h11v11h-11z"/>
<path fill="#2602f6" d="M1953 865h11v11h-11z"/>
<path fill="#2602f6" d="M1953 875h11v11h-11z"/>
<path fill="#2602f6" d="M1953 885h11v11h-11z"/>
<path fill="#2602f6" d="M1953 895h11v11h-11z"/>
<path fill="#aafb4c" d="M1963 395h11v11h-11z"/>
<path fill="#aafb4c" d="M1963 405h11v11h-11z"/>
<path fill="#aafb4c" d="M1963 415h11v11h-11z"/>
<path fill="#aafb4c" d="M1963 425h11v11h-11z"/>
<path fill="#aafb4c" d="M1963 435h11v11h-11z"/>
<path fill="#aafb4c" d="M1963 445h11v11h-11z"/>
<path fill="#aafb51" d="M1963 455h11v11h-11z"/>
<path fill="#aafb5c" d="M1963 465h11v11h-11z"/>
<path fill="#aafb6d" d="M1963 475h11v11h-11z"/>
<path fill="#aafb82" d="M1963 485h11v11h-11z"/>
<path fill="#aafb9b" d="M1963 495h11v11h-11z"/>
<path fill="#aafbb7" d="M1963 505h11v11h-11z"/>
<path fill="#aafbd6" d="M1963 515h11v11h-11z"/>
<path fill="#abfbf7" d="M1963 525h11v11h-11z"/>
<path fill="#99dffc" d="M1963 535h11v11h-11z"/>
<path fill="#86c3fa" d="M1963 545h11v11h-11z"/>
<path fill="#77abf9" d="M1963 555h11v11h-11z"/>
<path fill="#6a97f8" d="M1963 565h11v11h-11z"/>
<path fill="#5f86f8" d="M1963 575h11v11h-11z"/>
<path fill="#5678f7" d="M1963 585h11v11h-11z"/>
<path fill="#4f6bf7" d="M1963 595h11v11h-11z"/>
<path fill="#4860f7" d="M1963 605h11v11h-11z"/>
<path fill="#4356f6" d="M1963 615h11v11h-11z"/>
<path fill="#3e4df6" d="M1963 625h11v11h-11z"/>
<path fill="#3a46f6" d="M1963 635h11v11h-11z"/>
<path fill="#363ef6" d="M1963 645h11v11h-11z"/>
<path fill="#3338f6" d="M1963 655h11v11h-11z"/>
<path fill="#3132f6" d="M1963 665h11v11h-11z"/>
<path fill="#2e2df6" d="M1963 675h11v11h-11z"/>
<path fill="#2d28f6" d="M1963 685h11v11h-11z"/>
<path fill="#2b23f6" d="M1963 695h11v11h-11z"/>
<path fill="#2a1ff6" d="M1963 705h11v11h-11z"/>
<path fill="#291bf6" d="M1963 715h11v11h-11z"/>
<path fill="#2818f6" d="M1963 725h11v11h-11z"/>
<path fill="#2814f6" d="M1963 735h11v11h-11z"/>
<path fill="#2711f6" d="M1963 745h11v11h-11z"/>
<path fill="#270ef6" d="M1963 755h11v11h-11z"/>
<path fill="#260bf6" d="M1963 765h11v11h-11z"/>
<path fill="#2609f6" d="M1963 775h11v11h-11z"/>
<path fill="#2606f6" d="M1963 785h11v11h-11z"/>
<path fill="#2604f6" d="M1963 795h11v11h-11z"/>
<path fill="#2603f6" d="M1963 805h11v11h-11z"/>
<path fill="#2602f6" d="M1963 815h11v11h-11z"/>
<path fill="#2602f6" d="M1963 825h11v11h-11z"/>
<path fill="#2602f6" d="M1963 835h11v11h-11z"/>
<path fill="#2602f6" d="M1963 845h11v11h-11z"/>
<path fill="#2602f6" d="M1963 855h11v11h-11z"/>
<path fill="#2602f6" d="M1963 865h11v11h-11z"/>
<path fill="#2602f6" d="M1963 875h11v11h-11z"/>
<path fill="#2602f6" d="M1963 885h11v11h-11z"/>
<path fill="#2602f6" d="M1963 895h11v11h-11z"/>
<path fill="#2602f6" d="M1963 905h11v11h-11z"/>
<path fill="#bdfc4c" d="M1973 395h11v11h-11z"/>
<path fill="#bdfc4c" d="M1973 405h11v11h-11z"/>
<path fill="#befc4d" d="M1973 415h11v11h-11z"/>
<path fill="#befc4d" d="M1973 425h11v11h-11z"/>
<path fill="#bffc4d" d="M1973 435h11v11h-11z"/>
<path fill="#bffc4d" d="M1973 445h11v11h-11z"/>
<path fill="#c0fc52" d="M1973 455h11v11h-11z"/>
<path fill="#c0fc5d" d="M1973 465h11v11h-11z"/>
<path fill="#c1fc6e" d="M1973 475h11v11h-11z"/>
<path fill="#c2fc84" d="M1973 485h11v11h-11z"/>
<path fill="#c3fc9e" d="M1973 495h11v11h-11z"/>
<path fill="#c4fcbb" d="M1973 505h11v11h-11z"/>
<path fill="#c5fcdb" d="M1973 515h11v11h-11z"/>
<path fill="#c7fcfe" d="M1973 525h11v11h-11z"/>
<path fill="#add9fc" d="M1973 535h11v11h-11z"/>
<path fill="#98bdfa" d="M1973 545h11v11h-11z"/>
<path fill="#87a6f9" d="M1973 555h11v11h-11z"/>
<path fill="#7892f8" d="M1973 565h11v11h-11z"/>
<path fill="#6c82f8" d="M1973 575h11v11h-11z"/>
<path fill="#6273f7" d="M1973 585h11v11h-11z"/>
<path fill="#5a67f7" d="M1973 595h11v11h-11z"/>
<path fill="#525cf7" d="M1973 605h11v11h-11z"/>
<path fill="#4c52f6" d="M1973 615h11v11h-11z"/>
<path fill="#464af6" d="M1973 625h11v11h-11z"/>
<path fill="#4142f6" d="M1973 635h11v11h-11z"/>
<path fill="#3d3bf6" d="M1973 645h11v11h-11z"/>
<path fill="#3935f6" d="M1973 655h11v11h-11z"/>
<path fill="#362ff6" d="M1973 665h11v11h-11z"/>
<path fill="#332af6" d="M1973 675h11v11h-11z"/>
<path fill="#3125f6" d="M1973 685h11v11h-11z"/>
<path fill="#2f20f6" d="M1973 695h11v11h-11z"/>
<path fill="#2d1cf6" d="M1973 705h11v11h-11z"/>
<path fill="#2c18f6" d="M1973 715h11v11h-11z"/>
<path fill="#2b15f6" d="M1973 725h11v11h-11z"/>
<path fill="#2a12f6" d="M1973 735h11v11h-11z"/>
<path fill="#290ff6" d="M1973 745h11v11h-11z"/>
<path fill="#280cf6" d="M1973 755h11v11h-11z"/>
<path fill="#2809f6" d="M1973 765h11v11h-11z"/>
<path fill="#2707f6" d="M1973 775h11v11h-11z"/>
<path fill="#2705f6" d="M1973 785h11v11h-11z"/>
<path fill="#2703f6" d="M1973 795h11v11h-11z"/>
<path fill="#2603f6" d="M1973 805h11v11h-11z"/>
<path fill="#2602f6" d="M1973 815h11v11h-11z"/>
<path fill="#2602f6" d="M1973 825h11v11h-11z"/>
<path fill="#2602f6" d="M1973 835h11v11h-11z"/>
<path fill="#2602f6" d="M1973 845h11v11h-11z"/>
<path fill="#2602f6" d="M1973 855h11v11h-11z"/>
<path fill="#2602f6" d="M1973 865h11v11h-11z"/>
<path fill="#2602f6" d="M1973 875h11v11h-11z"/>
<path fill="#2602f6" d="M1973 885h11v11h-11z"/>
<path fill="#2602f6" d="M1973 895h11v11h-11z"/>
<path fill="#2602f6" d="M1973 905h11v11h-11z"/>
<path fill="#2602f6" d="M1973 915h11v11h-11z"/>
<path fill="#d4fd4e" d="M1983 405h11v11h-11z"/>
<path fill="#d5fd4e" d="M1983 415h11v11h-11z"/>
<path fill="#d6fd4e" d="M1983 425h11v11h-11z"/>
<path fill="#d7fd4e" d="M1983 435h11v11h-11z"/>
<path fill="#d8fd4e" d="M1983 445h11v11h-11z"/>
<path fill="#dafd53" d="M1983 455h11v11h-11z"/>
<path fill="#dbfd5e" d="M1983 465h11v11h-11z"/>
<path fill="#ddfd6f" d="M1983 475h11v11h-11z"/>
<path fill="#defd86" d="M1983 485h11v11h-11z"/>
<path fill="#e0fda1" d="M1983 495h11v11h-11z"/>
<path fill="#e3fdbf" d="M1983 505h11v11h-11z"/>
<path fill="#e5fee1" d="M1983 515h11v11h-11z"/>
<path fill="#e1f6fe" d="M1983 525h11v11h-11z"/>
<path fill="#c4d4fc" d="M1983 535h11v11h-11z"/>
<path fill="#adb8fa" d="M1983 545h11v11h-11z"/>
<path fill="#9aa1f9" d="M1983 555h11v11h-11z"/>
<path fill="#8a8df8" d="M1983 565h11v11h-11z"/>
<path fill="#7c7df8" d="M1983 575h11v11h-11z"/>
<path fill="#716ff7" d="M1983 585h11v11h-11z"/>
<path fill="#6763f7" d="M1983 595h11v11h-11z"/>
<path fill="#5e58f7" d="M1983 605h11v11h-11z"/>
<path fill="#574ff6" d="M1983 615h11v11h-11z"/>
<path fill="#5146f6" d="M1983 625h11v11h-11z"/>
<path fill="#4b3ff6" d="M1983 635h11v11h-11z"/>
<path fill="#4638f6" d="M1983 645h11v11h-11z"/>
<path fill="#4232f6" d="M1983 655h11v11h-11z"/>
<path fill="#3e2cf6" d="M1983 665h11v11h-11z"/>
<path fill="#3a27f6" d="M1983 675h11v11h-11z"/>
<path fill="#3822f6" d="M1983 685h11v11h-11z"/>
<path fill="#351ef6" d="M1983 695h11v11h-11z"/>
<path fill="#331af6" d="M1983 705h11v11h-11z"/>
<path fill="#3116f6" d="M1983 715h11v11h-11z"/>
<path fill="#2f13f6" d="M1983 725h11v11h-11z"/>
<path fill="#2e10f6" d="M1983 735h11v11h-11z"/>
<path fill="#2c0df6" d="M1983 745h11v11h-11z"/>
<path fill="#2b0af6" d="M1983 755h11v11h-11z"/>
<path fill="#2a08f6" d="M1983 765h11v11h-11z"/>
<path fill="#2a06f6" d="M1983 775h11v11h-11z"/>
<path fill="#2905f6" d="M1983 785h11v11h-11z"/>
<path fill="#2805f6" d="M1983 795h11v11h-11z"/>
<path fill="#2804f6" d="M1983 805h11v11h-11z"/>
<path fill="#2804f6" d="M1983 815h11v11h-11z"/>
<path fill="#2704f6" d="M1983 825h11v11h-11z"/>
<path fill="#2703f6" d="M1983 835h11v11h-11z"/>
<path fill="#2703f6" d="M1983 845h11v11h-11z"/>
<path fill="#2703f6" d="M1983 855h11v11h-11z"/>
<path fill="#2603f6" d="M1983 865h11v11h-11z"/>
<path fill="#2602f6" d="M1983 875h11v11h-11z"/>
<path fill="#2602f6" d="M1983 885h11v11h-11z"/>
<path fill="#2602f6" d="M1983 895h11v11h-11z"/>
<path fill="#2602f6" d="M1983 905h11v11h-11z"/>
<path fill="#2602f6" d="M1983 915h11v11h-11z"/>
<path fill="#2602f6" d="M1983 925h11v11h-11z"/>
<path fill="#edfe4f" d="M1993 405h11v11h-11z"/>
<path fill="#effe4f" d="M1993 415h11v11h-11z"/>
<path fill="#f0fe50" d="M1993 425h11v11h-11z"/>
<path fill="#f3fe50" d="M1993 435h11v11h-11z"/>
<path fill="#f5ff50" d="M1993 445h11v11h-11z"/>
<path fill="#f7ff54" d="M1993 455h11v11h-11z"/>
<path fill="#faff5f" d="M1993 465h11v11h-11z"/>
<path fill="#fdff71" d="M1993 475h11v11h-11z"/>
<path fill="#fdfd87" d="M1993 485h11v11h-11z"/>
<path fill="#fcf9a0" d="M1993 495h11v11h-11z"/>
<path fill="#fcf5bc" d="M1993 505h11v11h-11z"/>
<path fill="#fcf1da" d="M1993 515h11v11h-11z"/>
<path fill="#fbedfa" d="M1993 525h11v11h-11z"/>
<path fill="#decefc" d="M1993 535h11v11h-11z"/>
<path fill="#c4b3fa" d="M1993 545h11v11h-11z"/>
<path fill="#af9cf9" d="M1993 555h11v11h-11z"/>
<path fill="#9d89f8" d="M1993 565h11v11h-11z"/>
<path fill="#8e79f8" d="M1993 575h11v11h-11z"/>
<path fill="#816bf7" d="M1993 585h11v11h-11z"/>
<path fill="#765ff7" d="M1993 595h11v11h-11z"/>
<path fill="#6d54f7" d="M1993 605h11v11h-11z"/>
<path fill="#644bf6" d="M1993 615h11v11h-11z"/>
<path fill="#5d43f6" d="M1993 625h11v11h-11z"/>
<path fill="#563cf6" d="M1993 635h11v11h-11z"/>
<path fill="#5135f6" d="M1993 645h11v11h-11z"/>
<path fill="#4c2ff6" d="M1993 655h11v11h-11z"/>
<path fill="#4729f6" d="M1993 665h11v11h-11z"/>
<path fill="#4324f6" d="M1993 675h11v11h-11z"/>
<path fill="#4020f6" d="M1993 685h11v11h-11z"/>
<path fill="#3d1cf6" d="M1993 695h11v11h-11z"/>
<path fill="#3a18f6" d="M1993 705h11v11h-11z"/>
<path fill="#3715f6" d="M1993 715h11v11h-11z"/>
<path fill="#3512f6" d="M1993 725h11v11h-11z"/>
<path fill="#330ff6" d="M1993 735h11v11h-11z"/>
<path fill="#310cf6" d="M1993 745h11v11h-11z"/>
<path fill="#300af6" d="M1993 755h11v11h-11z"/>
<path fill="#2f09f6" d="M1993 765h11v11h-11z"/>
<path fill="#2d08f6" d="M1993 775h11v11h-11z"/>
<path fill="#2c07f6" d="M1993 785h11v11h-11z"/>
<path fill="#2c07f6" d="M1993 795h11v11h-11z"/>
<path fill="#2b06f6" d="M1993 805h11v11h-11z"/>
<path fill="#2a06f6" d="M1993 815h11v11h-11z"/>
<path fill="#2905f6" d="M1993 825h11v11h-11z"/>
<path fill="#2905f6" d="M1993 835h11v11h-11z"/>
<path fill="#2805f6" d="M1993 845h11v11h-11z"/>
<path fill="#2804f6" d="M1993 855h11v11h-11z"/>
<path fill="#2804f6" d="M1993 865h11v11h-11z"/>
<path fill="#2704f6" d="M1993 875h11v11h-11z"/>
<path fill="#2703f6" d="M1993 885h11v11h-11z"/>
<path fill="#2703f6" d="M1993 895h11v11h-11z"/>
<path fill="#2703f6" d="M1993 905h11v11h-11z"/>
<path fill="#2703f6" d="M1993 915h11v11h-11z"/>
<path fill="#2603f6" d="M1993 925h11v11h-11z"/>
<path fill="#2602f6" d="M1993 935h11v11h-11z"/>
<path fill="#faf24d" d="M2003 405h11v11h-11z"/>
<path fill="#faef4c" d="M2003 415h11v11h-11z"/>
<path fill="#f9ec4b" d="M2003 425h11v11h-11z"/>
<path fill="#f9e94a" d="M2003 435h11v11h-11z"/>
<path fill="#f8e64a" d="M2003 445h11v11h-11z"/>
<path fill="#f7e24c" d="M2003 455h11v11h-11z"/>
<path fill="#f7df54" d="M2003 465h11v11h-11z"/>
<path fill="#f6dc62" d="M2003 475h11v11h-11z"/>
<path fill="#f6d875" d="M2003 485h11v11h-11z"/>
<path fill="#f5d48b" d="M2003 495h11v11h-11z"/>
<path fill="#f5d0a2" d="M2003 505h11v11h-11z"/>
<path fill="#f4ccbc" d="M2003 515h11v11h-11z"/>
<path fill="#f4c8d8" d="M2003 525h11v11h-11z"/>
<path fill="#f4c4f4" d="M2003 535h11v11h-11z"/>
<path fill="#deaefa" d="M2003 545h11v11h-11z"/>
<path fill="#c698f9" d="M2003 555h11v11h-11z"/>
<path fill="#b285f8" d="M2003 565h11v11h-11z"/>
<path fill="#a175f8" d="M2003 575h11v11h-11z"/>
<path fill="#9367f7" d="M2003 585h11v11h-11z"/>
<path fill="#875cf7" d="M2003 595h11v11h-11z"/>
<path fill="#7c51f7" d="M2003 605h11v11h-11z"/>
<path fill="#7348f6" d="M2003 615h11v11h-11z"/>
<path fill="#6a40f6" d="M2003 625h11v11h-11z"/>
<path fill="#6339f6" d="M2003 635h11v11h-11z"/>
<path fill="#5d32f6" d="M2003 645h11v11h-11z"/>
<path fill="#572df6" d="M2003 655h11v11h-11z"/>
<path fill="#5227f6" d="M2003 665h11v11h-11z"/>
<path fill="#4d23f6" d="M2003 675h11v11h-11z"/>
<path fill="#491ef6" d="M2003 685h11v11h-11z"/>
<path fill="#451bf6" d="M2003 695h11v11h-11z"/>
<path fill="#4217f6" d="M2003 705h11v11h-11z"/>
<path fill="#3f14f6" d="M2003 715h11v11h-11z"/>
<path fill="#3c11f6" d="M2003 725h11v11h-11z"/>
<path fill="#3a0ff6" d="M2003 735h11v11h-11z"/>
<path fill="#380df6" d="M2003 745h11v11h-11z"/>
<path fill="#360cf6" d="M2003 755h11v11h-11z"/>
<path fill="#340bf6" d="M2003 765h11v11h-11z"/>
<path fill="#330af6" d="M2003 775h11v11h-11z"/>
<path fill="#3109f6" d="M2003 785h11v11h-11z"/>
<path fill="#3009f6" d="M2003 795h11v11h-11z"/>
<path fill="#2f08f6" d="M2003 805h11v11h-11z"/>
<path fill="#2e08f6" d="M2003 815h11v11h-11z"/>
<path fill="#2d07f6" d="M2003 825h11v11h-11z"/>
<path fill="#2c07f6" d="M2003 835h11v11h-11z"/>
<path fill="#2b06f6" d="M2003 845h11v11h-11z"/>
<path fill="#2a06f6" d="M2003 855h11v11h-11z"/>
<path fill="#2a06f6" d="M2003 865h11v11h-11z"/>
<path fill="#2905f6" d="M2003 875h11v11h-11z"/>
<path fill="#2905f6" d="M2003 885h11v11h-11z"/>
<path fill="#2805f6" d="M2003 895h11v11h-11z"/>
<path fill="#2804f6" d="M2003 905h11v11h-11z"/>
<path fill="#2804f6" d="M2003 915h11v11h-11z"/>
<path fill="#2704f6" d="M2003 925h11v11h-11z"/>
<path fill="#2704f6" d="M2003 935h11v11h-11z"/>
<path fill="#2703f6" d="M2003 945h11v11h-11z"/>
<path fill="#f5d645" d="M2013 405h11v11h-11z"/>
<path fill="#f4d345" d="M2013 415h11v11h-11z"/>
<path fill="#f4d044" d="M2013 425h11v11h-11z"/>
<path fill="#f3cd43" d="M2013 435h11v11h-11z"/>
<path fill="#f3c942" d="M2013 445h11v11h-11z"/>
<path fill="#f2c643" d="M2013 455h11v11h-11z"/>
<path fill="#f2c24a" d="M2013 465h11v11h-11z"/>
<path fill="#f1bf56" d="M2013 475h11v11h-11z"/>
<path fill="#f1bb67" d="M2013 485h11v11h-11z"/>
<path fill="#f0b87a" d="M2013 495h11v11h-11z"/>
<path fill="#f0b48f" d="M2013 505h11v11h-11z"/>
<path fill="#efb0a5" d="M2013 515h11v11h-11z"/>
<path fill="#efacbd" d="M2013 525h11v11h-11z"/>
<path fill="#efa7d6" d="M2013 535h11v11h-11z"/>
<path fill="#efa3f0" d="M2013 545h11v11h-11z"/>
<path fill="#de94f9" d="M2013 555h11v11h-11z"/>
<path fill="#c881f8" d="M2013 565h11v11h-11z"/>
<path fill="#b572f8" d="M2013 575h11v11h-11z"/>
<path fill="#a664f7" d="M2013 585h11v11h-11z"/>
<path fill="#9859f7" d="M2013 595h11v11h-11z"/>
<path fill="#8c4ff7" d="M2013 605h11v11h-11z"/>
<path fill="#8246f6" d="M2013 615h11v11h-11z"/>
<path fill="#793ef6" d="M2013 625h11v11h-11z"/>
<path fill="#7137f6" d="M2013 635h11v11h-11z"/>
<path fill="#6931f6" d="M2013 645h11v11h-11z"/>
<path fill="#632bf6" d="M2013 655h11v11h-11z"/>
<path fill="#5d26f6" d="M2013 665h11v11h-11z"/>
<path fill="#5822f6" d="M2013 675h11v11h-11z"/>
<path fill="#531ef6" d="M2013 685h11v11h-11z"/>
<path fill="#4f1af6" d="M2013 695h11v11h-11z"/>
<path fill="#4b17f6" d="M2013 705h11v11h-11z"/>
<path fill="#4814f6" d="M2013 715h11v11h-11z"/>
<path fill="#4412f6" d="M2013 725h11v11h-11z"/>
<path fill="#4210f6" d="M2013 735h11v11h-11z"/>
<path fill="#3f0ff6" d="M2013 745h11v11h-11z"/>
<path fill="#3d0ef6" d="M2013 755h11v11h-11z"/>
<path fill="#3a0df6" d="M2013 765h11v11h-11z"/>
<path fill="#380cf6" d="M2013 775h11v11h-11z"/>
<path fill="#370cf6" d="M2013 785h11v11h-11z"/>
<path fill="#350bf6" d="M2013 795h11v11h-11z"/>
<path fill="#340af6" d="M2013 805h11v11h-11z"/>
<path fill="#320af6" d="M2013 815h11v11h-11z"/>
<path fill="#3109f6" d="M2013 825h11v11h-11z"/>
<path fill="#3009f6" d="M2013 835h11v11h-11z"/>
<path fill="#2f08f6" d="M2013 845h11v11h-11z"/>
<path fill="#2e08f6" d="M2013 855h11v11h-11z"/>
<path fill="#2d07f6" d="M2013 865h11v11h-11z"/>
<path fill="#2c07f6" d="M2013 875h11v11h-11z"/>
<path fill="#2b07f6" d="M2013 885h11v11h-11z"/>
<path fill="#2b06f6" d="M2013 895h11v11h-11z"/>
<path fill="#2a06f6" d="M2013 905h11v11h-11z"/>
<path fill="#2a06f6" d="M2013 915h11v11h-11z"/>
<path fill="#2905f6" d="M2013 925h11v11h-11z"/>
<path fill="#2905f6" d="M2013 935h11v11h-11z"/>
<path fill="#2805f6" d="M2013 945h11v11h-11z"/>
<path fill="#2804f6" d="M2013 955h11v11h-11z"/>
<path fill="#f1bf3f" d="M2023 405h11v11h-11z"/>
<path fill="#f0bc3f" d="M2023 415h11v11h-11z"/>
<path fill="#f0b93e" d="M2023 425h11v11h-11z"/>
<path fill="#efb63d" d="M2023 435h11v11h-11z"/>
<path fill="#efb23c" d="M2023 445h11v11h-11z"/>
<path fill="#efaf3d" d="M2023 455h11v11h-11z"/>
<path fill="#eeac43" d="M2023 465h11v11h-11z"/>
<path fill="#eea84d" d="M2023 475h11v11h-11z"/>
<path fill="#eda55b" d="M2023 485h11v11h-11z"/>
<path fill="#eda16c" d="M2023 495h11v11h-11z"/>
<path fill="#ec9d7f" d="M2023 505h11v11h-11z"/>
<path fill="#ec9993" d="M2023 515h11v11h-11z"/>
<path fill="#ec95a8" d="M2023 525h11v11h-11z"/>
<path fill="#ec91be" d="M2023 535h11v11h-11z"/>
<path fill="#eb8dd5" d="M2023 545h11v11h-11z"/>
<path fill="#eb89ed" d="M2023 555h11v11h-11z"/>
<path fill="#df7ef9" d="M2023 565h11v11h-11z"/>
<path fill="#cb6ff8" d="M2023 575h11v11h-11z"/>
<path fill="#b962f7" d="M2023 585h11v11h-11z"/>
<path fill="#aa56f7" d="M2023 595h11v11h-11z"/>
<path fill="#9d4cf7" d="M2023 605h11v11h-11z"/>
<path fill="#9244f7" d="M2023 615h11v11h-11z"/>
<path fill="#883cf6" d="M2023 625h11v11h-11z"/>
<path fill="#7f36f6" d="M2023 635h11v11h-11z"/>
<path fill="#7730f6" d="M2023 645h11v11h-11z"/>
<path fill="#6f2af6" d="M2023 655h11v11h-11z"/>
<path fill="#6926f6" d="M2023 665h11v11h-11z"/>
<path fill="#6321f6" d="M2023 675h11v11h-11z"/>
<path fill="#5e1ef6" d="M2023 685h11v11h-11z"/>
<path fill="#591bf6" d="M2023 695h11v11h-11z"/>
<path fill="#5518f6" d="M2023 705h11v11h-11z"/>
<path fill="#5116f6" d="M2023 715h11v11h-11z"/>
<path fill="#4d14f6" d="M2023 725h11v11h-11z"/>
<path fill="#4a12f6" d="M2023 735h11v11h-11z"/>
<path fill="#4711f6" d="M2023 745h11v11h-11z"/>
<path fill="#4410f6" d="M2023 755h11v11h-11z"/>
<path fill="#410ff6" d="M2023 765h11v11h-11z"/>
<path fill="#3f0ff6" d="M2023 775h11v11h-11z"/>
<path fill="#3d0ef6" d="M2023 785h11v11h-11z"/>
<path fill="#3b0df6" d="M2023 795h11v11h-11z"/>
<path fill="#390df6" d="M2023 805h11v11h-11z"/>
<path fill="#370cf6" d="M2023 815h11v11h-11z"/>
<path fill="#360bf6" d="M2023 825h11v11h-11z"/>
<path fill="#340bf6" d="M2023 835h11v11h-11z"/>
<path fill="#330af6" d="M2023 845h11v11h-11z"/>
<path fill="#320af6" d="M2023 855h11v11h-11z"/>
<path fill="#3109f6" d="M2023 865h11v11h-11z"/>
<path fill="#3009f6" d="M2023 875h11v11h-11z"/>
<path fill="#2f08f6" d="M2023 885h11v11h-11z"/>
<path fill="#2e08f6" d="M2023 895h11v11h-11z"/>
<path fill="#2d08f6" d="M2023 905h11v11h-11z"/>
<path fill="#2c07f6" d="M2023 915h11v11h-11z"/>
<path fill="#2c07f6" d="M2023 925h11v11h-11z"/>
<path fill="#2b06f6" d="M2023 935h11v11h-11z"/>
<path fill="#2b06f6" d="M2023 945h11v11h-11z"/>
<path fill="#2a06f6" d="M2023 955h11v11h-11z"/>
<path fill="#2a06f6" d="M2023 965h11v11h-11z"/>
<path fill="#eeac3a" d="M2033 405h11v11h-11z"/>
<path fill="#eea93a" d="M2033 415h11v11h-11z"/>
<path fill="#eda639" d="M2033 425h11v11h-11z"/>
<path fill="#eda338" d="M2033 435h11v11h-11z"/>
<path fill="#ec9f38" d="M2033 445h11v11h-11z"/>
<path fill="#ec9c38" d="M2033 455h11v11h-11z"/>
<path fill="#eb993c" d="M2033 465h11v11h-11z"/>
<path fill="#eb9646" d="M2033 475h11v11h-11z"/>
<path fill="#eb9252" d="M2033 485h11v11h-11z"/>
<path fill="#ea8f61" d="M2033 495h11v11h-11z"/>
<path fill="#ea8b72" d="M2033 505h11v11h-11z"/>
<path fill="#ea8884" d="M2033 515h11v11h-11z"/>
<path fill="#ea8497" d="M2033 525h11v11h-11z"/>
<path fill="#e980aa" d="M2033 535h11v11h-11z"/>
<path fill="#e97cbf" d="M2033 545h11v11h-11z"/>
<path fill="#e979d4" d="M2033 555h11v11h-11z"/>
<path fill="#e975eb" d="M2033 565h11v11h-11z"/>
<path fill="#e16df8" d="M2033 575h11v11h-11z"/>
<path fill="#ce60f8" d="M2033 585h11v11h-11z"/>
<path fill="#bd55f7" d="M2033 595h11v11h-11z"/>
<path fill="#af4bf7" d="M2033 605h11v11h-11z"/>
<path fill="#a243f7" d="M2033 615h11v11h-11z"/>
<path fill="#973bf6" d="M2033 625h11v11h-11z"/>
<path fill="#8d35f6" d="M2033 635h11v11h-11z"/>
<path fill="#842ff6" d="M2033 645h11v11h-11z"/>
<path fill="#7c2af6" d="M2033 655h11v11h-11z"/>
<path fill="#7526f6" d="M2033 665h11v11h-11z"/>
<path fill="#6f22f6" d="M2033 675h11v11h-11z"/>
<path fill="#691ff6" d="M2033 685h11v11h-11z"/>
<path fill="#641cf6" d="M2033 695h11v11h-11z"/>
<path fill="#5f1af6" d="M2033 705h11v11h-11z"/>
<path fill="#5a18f6" d="M2033 715h11v11h-11z"/>
<path fill="#5616f6" d="M2033 725h11v11h-11z"/>
<path fill="#5215f6" d="M2033 735h11v11h-11z"/>
<path fill="#4f14f6" d="M2033 745h11v11h-11z"/>
<path fill="#4c13f6" d="M2033 755h11v11h-11z"/>
<path fill="#4912f6" d="M2033 765h11v11h-11z"/>
<path fill="#4611f6" d="M2033 775h11v11h-11z"/>
<path fill="#4410f6" d="M2033 785h11v11h-11z"/>
<path fill="#410ff6" d="M2033 795h11v11h-11z"/>
<path fill="#3f0ff6" d="M2033 805h11v11h-11z"/>
<path fill="#3d0ef6" d="M2033 815h11v11h-11z"/>
<path fill="#3b0df6" d="M2033 825h11v11h-11z"/>
<path fill="#3a0df6" d="M2033 835h11v11h-11z"/>
<path fill="#380cf6" d="M2033 845h11v11h-11z"/>
<path fill="#370cf6" d="M2033 855h11v11h-11z"/>
<path fill="#350bf6" d="M2033 865h11v11h-11z"/>
<path fill="#340bf6" d="M2033 875h11v11h-11z"/>
<path fill="#330af6" d="M2033 885h11v11h-11z"/>
<path fill="#320af6" d="M2033 895h11v11h-11z"/>
<path fill="#3109f6" d="M2033 905h11v11h-11z"/>
<path fill="#3009f6" d="M2033 915h11v11h-11z"/>
<path fill="#2f08f6" d="M2033 925h11v11h-11z"/>
<path fill="#2e08f6" d="M2033 935h11v11h-11z"/>
<path fill="#2d08f6" d="M2033 945h11v11h-11z"/>
<path fill="#2d07f6" d="M2033 955h11v11h-11z"/>
<path fill="#2c07f6" d="M2033 965h11v11h-11z"/>
<path fill="#ec9c37" d="M2043 405h11v11h-11z"/>
<path fill="#eb9936" d="M2043 415h11v11h-11z"/>
<path fill="#eb9635" d="M2043 425h11v11h-11z"/>
<path fill="#eb9334" d="M2043 435h11v11h-11z"/>
<path fill="#ea9034" d="M2043 445h11v11h-11z"/>
<path fill="#ea8d34" d="M2043 455h11v11h-11z"/>
<path fill="#ea8a38" d="M2043 465h11v11h-11z"/>
<path fill="#e9863f" d="M2043 475h11v11h-11z"/>
<path fill="#e9834b" d="M2043 485h11v11h-11z"/>
<path fill="#e98058" d="M2043 495h11v11h-11z"/>
<path fill="#e87d67" d="M2043 505h11v11h-11z"/>
<path fill="#e87977" d="M2043 515h11v11h-11z"/>
<path fill="#e87689" d="M2043 525h11v11h-11z"/>
<path fill="#e8729a" d="M2043 535h11v11h-11z"/>
<path fill="#e86fad" d="M2043 545h11v11h-11z"/>
<path fill="#e86bc0" d="M2043 555h11v11h-11z"/>
<path fill="#e868d4" d="M2043 565h11v11h-11z"/>
<path fill="#e864e9" d="M2043 575h11v11h-11z"/>
<path fill="#e25ef8" d="M2043 585h11v11h-11z"/>
<path fill="#d054f7" d="M2043 595h11v11h-11z"/>
<path fill="#c14af7" d="M2043 605h11v11h-11z"/>
<path fill="#b342f7" d="M2043 615h11v11h-11z"/>
<path fill="#a73bf7" d="M2043 625h11v11h-11z"/>
<path fill="#9c35f6" d="M2043 635h11v11h-11z"/>
<path fill="#9230f6" d="M2043 645h11v11h-11z"/>
<path fill="#8a2bf6" d="M2043 655h11v11h-11z"/>
<path fill="#8227f6" d="M2043 665h11v11h-11z"/>
<path fill="#7b23f6" d="M2043 675h11v11h-11z"/>
<path fill="#7421f6" d="M2043 685h11v11h-11z"/>
<path fill="#6e1ef6" d="M2043 695h11v11h-11z"/>
<path fill="#691cf6" d="M2043 705h11v11h-11z"/>
<path fill="#641af6" d="M2043 715h11v11h-11z"/>
<path fill="#6019f6" d="M2043 725h11v11h-11z"/>
<path fill="#5b18f6" d="M2043 735h11v11h-11z"/>
<path fill="#5817f6" d="M2043 745h11v11h-11z"/>
<path fill="#5415f6" d="M2043 755h11v11h-11z"/>
<path fill="#5114f6" d="M2043 765h11v11h-11z"/>
<path fill="#4e13f6" d="M2043 775h11v11h-11z"/>
<path fill="#4b13f6" d="M2043 785h11v11h-11z"/>
<path fill="#4812f6" d="M2043 795h11v11h-11z"/>
<path fill="#4611f6" d="M2043 805h11v11h-11z"/>
<path fill="#4310f6" d="M2043 815h11v11h-11z"/>
<path fill="#410ff6" d="M2043 825h11v11h-11z"/>
<path fill="#3f0ff6" d="M2043 835h11v11h-11z"/>
<path fill="#3d0ef6" d="M2043 845h11v11h-11z"/>
<path fill="#3c0ef6" d="M2043 855h11v11h-11z"/>
<path fill="#3a0df6" d="M2043 865h11v11h-11z"/>
<path fill="#390cf6" d="M2043 875h11v11h-11z"/>
<path fill="#370cf6" d="M2043 885h11v11h-11z"/>
<path fill="#360bf6" d="M2043 895h11v11h-11z"/>
<path fill="#350bf6" d="M2043 905h11v11h-11z"/>
<path fill="#330af6" d="M2043 915h11v11h-11z"/>
<path fill="#320af6" d="M2043 925h11v11h-11z"/>
<path fill="#310af6" d="M2043 935h11v11h-11z"/>
<path fill="#3009f6" d="M2043 945h11v11h-11z"/>
<path fill="#3009f6" d="M2043 955h11v11h-11z"/>
<path fill="#3009f6" d="M2043 965h11v11h-11z"/>
<path fill="#ea8b33" d="M2053 415h11v11h-11z"/>
<path fill="#e98832" d="M2053 425h11v11h-11z"/>
<path fill="#e98631" d="M2053 435h11v11h-11z"/>
<path fill="#e98331" d="M2053 445h11v11h-11z"/>
<path fill="#e88031" d="M2053 455h11v11h-11z"/>
<path fill="#e87d34" d="M2053 465h11v11h-11z"/>
<path fill="#e87a3b" d="M2053 475h11v11h-11z"/>
<path fill="#e87745" d="M2053 485h11v11h-11z"/>
<path fill="#e77451" d="M2053 495h11v11h-11z"/>
<path fill="#e7715e" d="M2053 505h11v11h-11z"/>
<path fill="#e76e6d" d="M2053 515h11v11h-11z"/>
<path fill="#e76b7d" d="M2053 525h11v11h-11z"/>
<path fill="#e7678d" d="M2053 535h11v11h-11z"/>
<path fill="#e7649e" d="M2053 545h11v11h-11z"/>
<path fill="#e761af" d="M2053 555h11v11h-11z"/>
<path fill="#e75ec1" d="M2053 565h11v11h-11z"/>
<path fill="#e75bd4" d="M2053 575h11v11h-11z"/>
<path fill="#e758e7" d="M2053 585h11v11h-11z"/>
<path fill="#e454f8" d="M2053 595h11v11h-11z"/>
<path fill="#d34bf7" d="M2053 605h11v11h-11z"/>
<path fill="#c443f7" d="M2053 615h11v11h-11z"/>
<path fill="#b73cf7" d="M2053 625h11v11h-11z"/>
<path fill="#ab36f7" d="M2053 635h11v11h-11z"/>
<path fill="#a131f6" d="M2053 645h11v11h-11z"/>
<path fill="#972df6" d="M2053 655h11v11h-11z"/>
<path fill="#8f29f6" d="M2053 665h11v11h-11z"/>
<path fill="#8726f6" d="M2053 675h11v11h-11z"/>
<path fill="#8023f6" d="M2053 685h11v11h-11z"/>
<path fill="#7a21f6" d="M2053 695h11v11h-11z"/>
<path fill="#741ff6" d="M2053 705h11v11h-11z"/>
<path fill="#6e1df6" d="M2053 715h11v11h-11z"/>
<path fill="#691cf6" d="M2053 725h11v11h-11z"/>
<path fill="#651af6" d="M2053 735h11v11h-11z"/>
<path fill="#6119f6" d="M2053 745h11v11h-11z"/>
<path fill="#5d18f6" d="M2053 755h11v11h-11z"/>
<path fill="#5917f6" d="M2053 765h11v11h-11z"/>
<path fill="#5616f6" d="M2053 775h11v11h-11z"/>
<path fill="#5215f6" d="M2053 785h11v11h-11z"/>
<path fill="#4f14f6" d="M2053 795h11v11h-11z"/>
<path fill="#4d13f6" d="M2053 805h11v11h-11z"/>
<path fill="#4a12f6" d="M2053 815h11v11h-11z"/>
<path fill="#4812f6" d="M2053 825h11v11h-11z"/>
<path fill="#4511f6" d="M2053 835h11v11h-11z"/>
<path fill="#4310f6" d="M2053 845h11v11h-11z"/>
<path fill="#410ff6" d="M2053 855h11v11h-11z"/>
<path fill="#3f0ff6" d="M2053 865h11v11h-11z"/>
<path fill="#3e0ef6" d="M2053 875h11v11h-11z"/>
<path fill="#3c0ef6" d="M2053 885h11v11h-11z"/>
<path fill="#3b0df6" d="M2053 895h11v11h-11z"/>
<path fill="#390df6" d="M2053 905h11v11h-11z"/>
<path fill="#380cf6" d="M2053 915h11v11h-11z"/>
<path fill="#360cf6" d="M2053 925h11v11h-11z"/>
<path fill="#350bf6" d="M2053 935h11v11h-11z"/>
<path fill="#340bf6" d="M2053 945h11v11h-11z"/>
<path fill="#330af6" d="M2053 955h11v11h-11z"/>
<path fill="#330af6" d="M2053 965h11v11h-11z"/>
<path fill="#e88030" d="M2063 415h11v11h-11z"/>
<path fill="#e87d30" d="M2063 425h11v11h-11z"/>
<path fill="#e87a2f" d="M2063 435h11v11h-11z"/>
<path fill="#e8782e" d="M2063 445h11v11h-11z"/>
<path fill="#e7752e" d="M2063 455h11v11h-11z"/>
<path fill="#e77230" d="M2063 465h11v11h-11z"/>
<path fill="#e76f36" d="M2063 475h11v11h-11z"/>
<path fill="#e76d3f" d="M2063 485h11v11h-11z"/>
<path fill="#e66a4a" d="M2063 495h11v11h-11z"/>
<path fill="#e66757" d="M2063 505h11v11h-11z"/>
<path fill="#e66464" d="M2063 515h11v11h-11z"/>
<path fill="#e66173" d="M2063 525h11v11h-11z"/>
<path fill="#e65e82" d="M2063 535h11v11h-11z"/>
<path fill="#e65c91" d="M2063 545h11v11h-11z"/>
<path fill="#e659a1" d="M2063 555h11v11h-11z"/>
<path fill="#e656b1" d="M2063 565h11v11h-11z"/>
<path fill="#e653c2" d="M2063 575h11v11h-11z"/>
<path fill="#e651d4" d="M2063 585h11v11h-11z"/>
<path fill="#e64ee6" d="M2063 595h11v11h-11z"/>
<path fill="#e64cf7" d="M2063 605h11v11h-11z"/>
<path fill="#d644f7" d="M2063 615h11v11h-11z"/>
<path fill="#c73df7" d="M2063 625h11v11h-11z"/>
<path fill="#bb38f7" d="M2063 635h11v11h-11z"/>
<path fill="#af33f7" d="M2063 645h11v11h-11z"/>
<path fill="#a52ff6" d="M2063 655h11v11h-11z"/>
<path fill="#9c2bf6" d="M2063 665h11v11h-11z"/>
<path fill="#9328f6" d="M2063 675h11v11h-11z"/>
<path fill="#8c26f6" d="M2063 685h11v11h-11z"/>
<path fill="#8524f6" d="M2063 695h11v11h-11z"/>
<path fill="#7f22f6" d="M2063 705h11v11h-11z"/>
<path fill="#7920f6" d="M2063 715h11v11h-11z"/>
<path fill="#731ff6" d="M2063 725h11v11h-11z"/>
<path fill="#6e1df6" d="M2063 735h11v11h-11z"/>
<path fill="#6a1cf6" d="M2063 745h11v11h-11z"/>
<path fill="#651bf6" d="M2063 755h11v11h-11z"/>
<path fill="#6119f6" d="M2063 765h11v11h-11z"/>
<path fill="#5e18f6" d="M2063 775h11v11h-11z"/>
<path fill="#5a17f6" d="M2063 785h11v11h-11z"/>
<path fill="#5716f6" d="M2063 795h11v11h-11z"/>
<path fill="#5415f6" d="M2063 805h11v11h-11z"/>
<path fill="#5114f6" d="M2063 815h11v11h-11z"/>
<path fill="#4e14f6" d="M2063 825h11v11h-11z"/>
<path fill="#4c13f6" d="M2063 835h11v11h-11z"/>
<path fill="#4912f6" d="M2063 845h11v11h-11z"/>
<path fill="#4711f6" d="M2063 855h11v11h-11z"/>
<path fill="#4511f6" d="M2063 865h11v11h-11z"/>
<path fill="#4310f6" d="M2063 875h11v11h-11z"/>
<path fill="#410ff6" d="M2063 885h11v11h-11z"/>
<path fill="#3f0ff6" d="M2063 895h11v11h-11z"/>
<path fill="#3e0ef6" d="M2063 905h11v11h-11z"/>
<path fill="#3c0ef6" d="M2063 915h11v11h-11z"/>
<path fill="#3b0df6" d="M2063 925h11v11h-11z"/>
<path fill="#390df6" d="M2063 935h11v11h-11z"/>
<path fill="#380cf6" d="M2063 945h11v11h-11z"/>
<path fill="#370cf6" d="M2063 955h11v11h-11z"/>
<path fill="#370cf6" d="M2063 965h11v11h-11z"/>
<path fill="#e7762e" d="M2073 415h11v11h-11z"/>
<path fill="#e7732d" d="M2073 425h11v11h-11z"/>
<path fill="#e7712d" d="M2073 435h11v11h-11z"/>
<path fill="#e76e2c" d="M2073 445h11v11h-11z"/>
<path fill="#e76c2c" d="M2073 455h11v11h-11z"/>
<path fill="#e6692e" d="M2073 465h11v11h-11z"/>
<path fill="#e66733" d="M2073 475h11v11h-11z"/>
<path fill="#e6643b" d="M2073 485h11v11h-11z"/>
<path fill="#e66145" d="M2073 495h11v11h-11z"/>
<path fill="#e65f50" d="M2073 505h11v11h-11z"/>
<path fill="#e65c5d" d="M2073 515h11v11h-11z"/>
<path fill="#e55a6a" d="M2073 525h11v11h-11z"/>
<path fill="#e55778" d="M2073 535h11v11h-11z"/>
<path fill="#e55586" d="M2073 545h11v11h-11z"/>
<path fill="#e55295" d="M2073 555h11v11h-11z"/>
<path fill="#e550a4" d="M2073 565h11v11h-11z"/>
<path fill="#e54eb3" d="M2073 575h11v11h-11z"/>
<path fill="#e54bc3" d="M2073 585h11v11h-11z"/>
<path fill="#e649d4" d="M2073 595h11v11h-11z"/>
<path fill="#e647e4" d="M2073 605h11v11h-11z"/>
<path fill="#e646f6" d="M2073 615h11v11h-11z"/>
<path fill="#d840f7" d="M2073 625h11v11h-11z"/>
<path fill="#ca3af7" d="M2073 635h11v11h-11z"/>
<path fill="#be36f7" d="M2073 645h11v11h-11z"/>
<path fill="#b332f7" d="M2073 655h11v11h-11z"/>
<path fill="#a92ff6" d="M2073 665h11v11h-11z"/>
<path fill="#a02cf6" d="M2073 675h11v11h-11z"/>
<path fill="#9829f6" d="M2073 685h11v11h-11z"/>
<path fill="#9027f6" d="M2073 695h11v11h-11z"/>
<path fill="#8a25f6" d="M2073 705h11v11h-11z"/>
<path fill="#8323f6" d="M2073 715h11v11h-11z"/>
<path fill="#7d22f6" d="M2073 725h11v11h-11z"/>
<path fill="#7820f6" d="M2073 735h11v11h-11z"/>
<path fill="#731ff6" d="M2073 745h11v11h-11z"/>
<path fill="#6e1df6" d="M2073 755h11v11h-11z"/>
<path fill="#6a1cf6" d="M2073 765h11v11h-11z"/>
<path fill="#661bf6" d="M2073 775h11v11h-11z"/>
<path fill="#621af6" d="M2073 785h11v11h-11z"/>
<path fill="#5e19f6" d="M2073 795h11v11h-11z"/>
<path fill="#5b18f6" d="M2073 805h11v11h-11z"/>
<path fill="#5817f6" d="M2073 815h11v11h-11z"/>
<path fill="#5516f6" d="M2073 825h11v11h-11z"/>
<path fill="#5215f6" d="M2073 835h11v11h-11z"/>
<path fill="#5014f6" d="M2073 845h11v11h-11z"/>
<path fill="#4d13f6" d="M2073 855h11v11h-11z"/>
<path fill="#4b13f6" d="M2073 865h11v11h-11z"/>
<path fill="#4912f6" d="M2073 875h11v11h-11z"/>
<path fill="#4711f6" d="M2073 885h11v11h-11z"/>
<path fill="#4511f6" d="M2073 895h11v11h-11z"/>
<path fill="#4310f6" d="M2073 905h11v11h-11z"/>
<path fill="#410ff6" d="M2073 915h11v11h-11z"/>
<path fill="#400ff6" d="M2073 925h11v11h-11z"/>
<path fill="#3e0ef6" d="M2073 935h11v11h-11z"/>
<path fill="#3d0ef6" d="M2073 945h11v11h-11z"/>
<path fill="#3b0df6" d="M2073 955h11v11h-11z"/>
<path fill="#3b0df6" d="M2073 965h11v11h-11z"/>
<path fill="#e76d2c" d="M2083 415h11v11h-11z"/>
<path fill="#e76b2c" d="M2083 425h11v11h-11z"/>
<path fill="#e6692b" d="M2083 435h11v11h-11z"/>
<path fill="#e6662b" d="M2083 445h11v11h-11z"/>
<path fill="#e6642a" d="M2083 455h11v11h-11z"/>
<path fill="#e6622c" d="M2083 465h11v11h-11z"/>
<path fill="#e65f30" d="M2083 475h11v11h-11z"/>
<path fill="#e55d37" d="M2083 485h11v11h-11z"/>
<path fill="#e55b40" d="M2083 495h11v11h-11z"/>
<path fill="#e5584b" d="M2083 505h11v11h-11z"/>
<path fill="#e55656" d="M2083 515h11v11h-11z"/>
<path fill="#e55463" d="M2083 525h11v11h-11z"/>
<path fill="#e5526f" d="M2083 535h11v11h-11z"/>
<path fill="#e54f7c" d="M2083 545h11v11h-11z"/>
<path fill="#e54d8a" d="M2083 555h11v11h-11z"/>
<path fill="#e54b98" d="M2083 565h11v11h-11z"/>
<path fill="#e549a6" d="M2083 575h11v11h-11z"/>
<path fill="#e548b5" d="M2083 585h11v11h-11z"/>
<path fill="#e546c4" d="M2083 595h11v11h-11z"/>
<path fill="#e544d4" d="M2083 605h11v11h-11z"/>
<path fill="#e543e4" d="M2083 615h11v11h-11z"/>
<path fill="#e642f4" d="M2083 625h11v11h-11z"/>
<path fill="#da3ef7" d="M2083 635h11v11h-11z"/>
<path fill="#cd39f7" d="M2083 645h11v11h-11z"/>
<path fill="#c135f7" d="M2083 655h11v11h-11z"/>
<path fill="#b732f7" d="M2083 665h11v11h-11z"/>
<path fill="#ad2ff7" d="M2083 675h11v11h-11z"/>
<path fill="#a42df6" d="M2083 685h11v11h-11z"/>
<path fill="#9c2af6" d="M2083 695h11v11h-11z"/>
<path fill="#9528f6" d="M2083 705h11v11h-11z"/>
<path fill="#8e26f6" d="M2083 715h11v11h-11z"/>
<path fill="#8825f6" d="M2083 725h11v11h-11z"/>
<path fill="#8223f6" d="M2083 735h11v11h-11z"/>
<path fill="#7c21f6" d="M2083 745h11v11h-11z"/>
<path fill="#7720f6" d="M2083 755h11v11h-11z"/>
<path fill="#721ef6" d="M2083 765h11v11h-11z"/>
<path fill="#6e1df6" d="M2083 775h11v11h-11z"/>
<path fill="#6a1cf6" d="M2083 785h11v11h-11z"/>
<path fill="#661bf6" d="M2083 795h11v11h-11z"/>
<path fill="#631af6" d="M2083 805h11v11h-11z"/>
<path fill="#5f19f6" d="M2083 815h11v11h-11z"/>
<path fill="#5c18f6" d="M2083 825h11v11h-11z"/>
<path fill="#5917f6" d="M2083 835h11v11h-11z"/>
<path fill="#5616f6" d="M2083 845h11v11h-11z"/>
<path fill="#5315f6" d="M2083 855h11v11h-11z"/>
<path fill="#5114f6" d="M2083 865h11v11h-11z"/>
<path fill="#4f14f6" d="M2083 875h11v11h-11z"/>
<path fill="#4c13f6" d="M2083 885h11v11h-11z"/>
<path fill="#4a12f6" d="M2083 895h11v11h-11z"/>
<path fill="#4812f6" d="M2083 905h11v11h-11z"/>
<path fill="#4611f6" d="M2083 915h11v11h-11z"/>
<path fill="#4410f6" d="M2083 925h11v11h-11z"/>
<path fill="#4310f6" d="M2083 935h11v11h-11z"/>
<path fill="#410ff6" d="M2083 945h11v11h-11z"/>
<path fill="#400ff6" d="M2083 955h11v11h-11z"/>
<path fill="#e6662b" d="M2093 415h11v11h-11z"/>
<path fill="#e6642a" d="M2093 425h11v11h-11z"/>
<path fill="#e6622a" d="M2093 435h11v11h-11z"/>
<path fill="#e6602a" d="M2093 445h11v11h-11z"/>
<path fill="#e55d29" d="M2093 455h11v11h-11z"/>
<path fill="#e55b2a" d="M2093 465h11v11h-11z"/>
<path fill="#e5592e" d="M2093 475h11v11h-11z"/>
<path fill="#e55734" d="M2093 485h11v11h-11z"/>
<path fill="#e5553d" d="M2093 495h11v11h-11z"/>
<path fill="#e55346" d="M2093 505h11v11h-11z"/>
<path fill="#e55151" d="M2093 515h11v11h-11z"/>
<path fill="#e54f5c" d="M2093 525h11v11h-11z"/>
<path fill="#e54d68" d="M2093 535h11v11h-11z"/>
<path fill="#e54b74" d="M2093 545h11v11h-11z"/>
<path fill="#e54981" d="M2093 555h11v11h-11z"/>
<path fill="#e5488e" d="M2093 565h11v11h-11z"/>
<path fill="#e5469b" d="M2093 575h11v11h-11z"/>
<path fill="#e545a9" d="M2093 585h11v11h-11z"/>
<path fill="#e543b7" d="M2093 595h11v11h-11z"/>
<path fill="#e542c5" d="M2093 605h11v11h-11z"/>
<path fill="#e541d4" d="M2093 615h11v11h-11z"/>
<path fill="#e540e3" d="M2093 625h11v11h-11z"/>
<path fill="#e640f2" d="M2093 635h11v11h-11z"/>
<path fill="#dd3df7" d="M2093 645h11v11h-11z"/>
<path fill="#d039f7" d="M2093 655h11v11h-11z"/>
<path fill="#c536f7" d="M2093 665h11v11h-11z"/>
<path fill="#ba33f7" d="M2093 675h11v11h-11z"/>
<path fill="#b130f7" d="M2093 685h11v11h-11z"/>
<path fill="#a82ef6" d="M2093 695h11v11h-11z"/>
<path fill="#a02cf6" d="M2093 705h11v11h-11z"/>
<path fill="#9929f6" d="M2093 715h11v11h-11z"/>
<path fill="#9228f6" d="M2093 725h11v11h-11z"/>
<path fill="#8c26f6" d="M2093 735h11v11h-11z"/>
<path fill="#8624f6" d="M2093 745h11v11h-11z"/>
<path fill="#8023f6" d="M2093 755h11v11h-11z"/>
<path fill="#7b21f6" d="M2093 765h11v11h-11z"/>
<path fill="#7720f6" d="M2093 775h11v11h-11z"/>
<path fill="#721ef6" d="M2093 785h11v11h-11z"/>
<path fill="#6e1df6" d="M2093 795h11v11h-11z"/>
<path fill="#6a1cf6" d="M2093 805h11v11h-11z"/>
<path fill="#661bf6" d="M2093 815h11v11h-11z"/>
<path fill="#631af6" d="M2093 825h11v11h-11z"/>
<path fill="#6019f6" d="M2093 835h11v11h-11z"/>
<path fill="#5d18f6" d="M2093 845h11v11h-11z"/>
<path fill="#5a17f6" d="M2093 855h11v11h-11z"/>
<path fill="#5716f6" d="M2093 865h11v11h-11z"/>
<path fill="#5516f6" d="M2093 875h11v11h-11z"/>
<path fill="#5215f6" d="M2093 885h11v11h-11z"/>
<path fill="#5014f6" d="M2093 895h11v11h-11z"/>
<path fill="#4e13f6" d="M2093 905h11v11h-11z"/>
<path fill="#4c13f6" d="M2093 915h11v11h-11z"/>
<path fill="#4a12f6" d="M2093 925h11v11h-11z"/>
<path fill="#4812f6" d="M2093 935h11v11h-11z"/>
<path fill="#4611f6" d="M2093 945h11v11h-11z"/>
<path fill="#e6602a" d="M2103 415h11v11h-11z"/>
<path fill="#e55e29" d="M2103 425h11v11h-11z"/>
<path fill="#e55c29" d="M2103 435h11v11h-11z"/>
<path fill="#e55a29" d="M2103 445h11v11h-11z"/>
<path fill="#e55828" d="M2103 455h11v11h-11z"/>
<path fill="#e55629" d="M2103 465h11v11h-11z"/>
<path fill="#e5542c" d="M2103 475h11v11h-11z"/>
<path fill="#e55232" d="M2103 485h11v11h-11z"/>
<path fill="#e55039" d="M2103 495h11v11h-11z"/>
<path fill="#e54e42" d="M2103 505h11v11h-11z"/>
<path fill="#e44d4c" d="M2103 515h11v11h-11z"/>
<path fill="#e44b56" d="M2103 525h11v11h-11z"/>
<path fill="#e44961" d="M2103 535h11v11h-11z"/>
<path fill="#e4486d" d="M2103 545h11v11h-11z"/>
<path fill="#e44679" d="M2103 555h11v11h-11z"/>
<path fill="#e44585" d="M2103 565h11v11h-11z"/>
<path fill="#e44491" d="M2103 575h11v11h-11z"/>
<path fill="#e5439e" d="M2103 585h11v11h-11z"/>
<path fill="#e542ab" d="M2103 595h11v11h-11z"/>
<path fill="#e541b8" d="M2103 605h11v11h-11z"/>
<path fill="#e540c6" d="M2103 615h11v11h-11z"/>
<path fill="#e540d4" d="M2103 625h11v11h-11z"/>
<path fill="#e53fe2" d="M2103 635h11v11h-11z"/>
<path fill="#e63ff0" d="M2103 645h11v11h-11z"/>
<path fill="#df3df7" d="M2103 655h11v11h-11z"/>
<path fill="#d23af7" d="M2103 665h11v11h-11z"/>
<path fill="#c737f7" d="M2103 675h11v11h-11z"/>
<path fill="#bd34f7" d="M2103 685h11v11h-11z"/>
<path fill="#b431f7" d="M2103 695h11v11h-11z"/>
<path fill="#ab2ff7" d="M2103 705h11v11h-11z"/>
<path fill="#a42df6" d="M2103 715h11v11h-11z"/>
<path fill="#9c2bf6" d="M2103 725h11v11h-11z"/>
<path fill="#9629f6" d="M2103 735h11v11h-11z"/>
<path fill="#8f27f6" d="M2103 745h11v11h-11z"/>
<path fill="#8a25f6" d="M2103 755h11v11h-11z"/>
<path fill="#8424f6" d="M2103 765h11v11h-11z"/>
<path fill="#7f22f6" d="M2103 775h11v11h-11z"/>
<path fill="#7a21f6" d="M2103 785h11v11h-11z"/>
<path fill="#7620f6" d="M2103 795h11v11h-11z"/>
<path fill="#721ef6" d="M2103 805h11v11h-11z"/>
<path fill="#6e1df6" d="M2103 815h11v11h-11z"/>
<path fill="#6a1cf6" d="M2103 825h11v11h-11z"/>
<path fill="#671bf6" d="M2103 835h11v11h-11z"/>
<path fill="#641af6" d="M2103 845h11v11h-11z"/>
<path fill="#6019f6" d="M2103 855h11v11h-11z"/>
<path fill="#5e18f6" d="M2103 865h11v11h-11z"/>
<path fill="#5b17f6" d="M2103 875h11v11h-11z"/>
<path fill="#5817f6" d="M2103 885h11v11h-11z"/>
<path fill="#5616f6" d="M2103 895h11v11h-11z"/>
<path fill="#5315f6" d="M2103 905h11v11h-11z"/>
<path fill="#5114f6" d="M2103 915h11v11h-11z"/>
<path fill="#4f14f6" d="M2103 925h11v11h-11z"/>
<path fill="#4d13f6" d="M2103 935h11v11h-11z"/>
<path fill="#e55b29" d="M2113 415h11v11h-11z"/>
<path fill="#e55928" d="M2113 425h11v11h-11z"/>
<path fill="#e55728" d="M2113 435h11v11h-11z"/>
<path fill="#e55528" d="M2113 445h11v11h-11z"/>
<path fill="#e55327" d="M2113 455h11v11h-11z"/>
<path fill="#e55128" d="M2113 465h11v11h-11z"/>
<path fill="#e5502b" d="M2113 475h11v11h-11z"/>
<path fill="#e44e30" d="M2113 485h11v11h-11z"/>
<path fill="#e44c36" d="M2113 495h11v11h-11z"/>
<path fill="#e44b3f" d="M2113 505h11v11h-11z"/>
<path fill="#e44948" d="M2113 515h11v11h-11z"/>
<path fill="#e44851" d="M2113 525h11v11h-11z"/>
<path fill="#e4475c" d="M2113 535h11v11h-11z"/>
<path fill="#e44566" d="M2113 545h11v11h-11z"/>
<path fill="#e44471" d="M2113 555h11v11h-11z"/>
<path fill="#e4437d" d="M2113 565h11v11h-11z"/>
<path fill="#e44288" d="M2113 575h11v11h-11z"/>
<path fill="#e44194" d="M2113 585h11v11h-11z"/>
<path fill="#e440a1" d="M2113 595h11v11h-11z"/>
<path fill="#e540ad" d="M2113 605h11v11h-11z"/>
<path fill="#e540ba" d="M2113 615h11v11h-11z"/>
<path fill="#e53fc7" d="M2113 625h11v11h-11z"/>
<path fill="#e53fd4" d="M2113 635h11v11h-11z"/>
<path fill="#e53fe1" d="M2113 645h11v11h-11z"/>
<path fill="#e53fef" d="M2113 655h11v11h-11z"/>
<path fill="#e13ef7" d="M2113 665h11v11h-11z"/>
<path fill="#d53af7" d="M2113 675h11v11h-11z"/>
<path fill="#ca37f7" d="M2113 685h11v11h-11z"/>
<path fill="#c035f7" d="M2113 695h11v11h-11z"/>
<path fill="#b732f7" d="M2113 705h11v11h-11z"/>
<path fill="#af30f7" d="M2113 715h11v11h-11z"/>
<path fill="#a72ef6" d="M2113 725h11v11h-11z"/>
<path fill="#a02cf6" d="M2113 735h11v11h-11z"/>
<path fill="#992af6" d="M2113 745h11v11h-11z"/>
<path fill="#9328f6" d="M2113 755h11v11h-11z"/>
<path fill="#8d26f6" d="M2113 765h11v11h-11z"/>
<path fill="#8825f6" d="M2113 775h11v11h-11z"/>
<path fill="#8323f6" d="M2113 785h11v11h-11z"/>
<path fill="#7e22f6" d="M2113 795h11v11h-11z"/>
<path fill="#7a21f6" d="M2113 805h11v11h-11z"/>
<path fill="#761ff6" d="M2113 815h11v11h-11z"/>
<path fill="#721ef6" d="M2113 825h11v11h-11z"/>
<path fill="#6e1df6" d="M2113 835h11v11h-11z"/>
<path fill="#6a1cf6" d="M2113 845h11v11h-11z"/>
<path fill="#671bf6" d="M2113 855h11v11h-11z"/>
<path fill="#641af6" d="M2113 865h11v11h-11z"/>
<path fill="#6119f6" d="M2113 875h11v11h-11z"/>
<path fill="#5e18f6" d="M2113 885h11v11h-11z"/>
<path fill="#5c18f6" d="M2113 895h11v11h-11z"/>
<path fill="#5917f6" d="M2113 905h11v11h-11z"/>
<path fill="#5716f6" d="M2113 915h11v11h-11z"/>
<path fill="#5415f6" d="M2113 925h11v11h-11z"/>
<path fill="#e55628" d="M2123 415h11v11h-11z"/>
<path fill="#e55428" d="M2123 425h11v11h-11z"/>
<path fill="#e55327" d="M2123 435h11v11h-11z"/>
<path fill="#e55127" d="M2123 445h11v11h-11z"/>
<path fill="#e44f27" d="M2123 455h11v11h-11z"/>
<path fill="#e44e27" d="M2123 465h11v11h-11z"/>
<path fill="#e44c29" d="M2123 475h11v11h-11z"/>
<path fill="#e44b2e" d="M2123 485h11v11h-11z"/>
<path fill="#e44934" d="M2123 495h11v11h-11z"/>
<path fill="#e4483b" d="M2123 505h11v11h-11z"/>
<path fill="#e44744" d="M2123 515h11v11h-11z"/>
<path fill="#e4454d" d="M2123 525h11v11h-11z"/>
<path fill="#e44457" d="M2123 535h11v11h-11z"/>
<path fill="#e44361" d="M2123 545h11v11h-11z"/>
<path fill="#e4426b" d="M2123 555h11v11h-11z"/>
<path fill="#e44276" d="M2123 565h11v11h-11z"/>
<path fill="#e44181" d="M2123 575h11v11h-11z"/>
<path fill="#e4408c" d="M2123 585h11v11h-11z"/>
<path fill="#e44097" d="M2123 595h11v11h-11z"/>
<path fill="#e43fa3" d="M2123 605h11v11h-11z"/>
<path fill="#e53faf" d="M2123 615h11v11h-11z"/>
<path fill="#e53fbb" d="M2123 625h11v11h-11z"/>
<path fill="#e53fc7" d="M2123 635h11v11h-11z"/>
<path fill="#e53fd4" d="M2123 645h11v11h-11z"/>
<path fill="#e53fe1" d="M2123 655h11v11h-11z"/>
<path fill="#e53fee" d="M2123 665h11v11h-11z"/>
<path fill="#e23ef7" d="M2123 675h11v11h-11z"/>
<path fill="#d73bf7" d="M2123 685h11v11h-11z"/>
<path fill="#cc38f7" d="M2123 695h11v11h-11z"/>
<path fill="#c335f7" d="M2123 705h11v11h-11z"/>
<path fill="#ba33f7" d="M2123 715h11v11h-11z"/>
<path fill="#b231f7" d="M2123 725h11v11h-11z"/>
<path fill="#aa2ef6" d="M2123 735h11v11h-11z"/>
<path fill="#a32cf6" d="M2123 745h11v11h-11z"/>
<path fill="#9d2bf6" d="M2123 755h11v11h-11z"/>
<path fill="#9729f6" d="M2123 765h11v11h-11z"/>
<path fill="#9127f6" d="M2123 775h11v11h-11z"/>
<path fill="#8b26f6" d="M2123 785h11v11h-11z"/>
<path fill="#8624f6" d="M2123 795h11v11h-11z"/>
<path fill="#8223f6" d="M2123 805h11v11h-11z"/>
<path fill="#7d22f6" d="M2123 815h11v11h-11z"/>
<path fill="#7920f6" d="M2123 825h11v11h-11z"/>
<path fill="#751ff6" d="M2123 835h11v11h-11z"/>
<path fill="#711ef6" d="M2123 845h11v11h-11z"/>
<path fill="#6e1df6" d="M2123 855h11v11h-11z"/>
<path fill="#6b1cf6" d="M2123 865h11v11h-11z"/>
<path fill="#671bf6" d="M2123 875h11v11h-11z"/>
<path fill="#641af6" d="M2123 885h11v11h-11z"/>
<path fill="#6219f6" d="M2123 895h11v11h-11z"/>
<path fill="#5f19f6" d="M2123 905h11v11h-11z"/>
<path fill="#e55027" d="M2133 425h11v11h-11z"/>
<path fill="#e44f27" d="M2133 435h11v11h-11z"/>
<path fill="#e44d26" d="M2133 445h11v11h-11z"/>
<path fill="#e44c26" d="M2133 455h11v11h-11z"/>
<path fill="#e44b26" d="M2133 465h11v11h-11z"/>
<path fill="#e44928" d="M2133 475h11v11h-11z"/>
<path fill="#e4482c" d="M2133 485h11v11h-11z"/>
<path fill="#e44732" d="M2133 495h11v11h-11z"/>
<path fill="#e44639" d="M2133 505h11v11h-11z"/>
<path fill="#e44540" d="M2133 515h11v11h-11z"/>
<path fill="#e44449" d="M2133 525h11v11h-11z"/>
<path fill="#e44352" d="M2133 535h11v11h-11z"/>
<path fill="#e4425b" d="M2133 545h11v11h-11z"/>
<path fill="#e44165" d="M2133 555h11v11h-11z"/>
<path fill="#e4416f" d="M2133 565h11v11h-11z"/>
<path fill="#e4407a" d="M2133 575h11v11h-11z"/>
<path fill="#e44084" d="M2133 585h11v11h-11z"/>
<path fill="#e43f8f" d="M2133 595h11v11h-11z"/>
<path fill="#e43f9a" d="M2133 605h11v11h-11z"/>
<path fill="#e43fa5" d="M2133 615h11v11h-11z"/>
<path fill="#e53fb1" d="M2133 625h11v11h-11z"/>
<path fill="#e53fbc" d="M2133 635h11v11h-11z"/>
<path fill="#e53fc8" d="M2133 645h11v11h-11z"/>
<path fill="#e53fd4" d="M2133 655h11v11h-11z"/>
<path fill="#e53fe0" d="M2133 665h11v11h-11z"/>
<path fill="#e53fed" d="M2133 675h11v11h-11z"/>
<path fill="#e43ff7" d="M2133 685h11v11h-11z"/>
<path fill="#d93cf7" d="M2133 695h11v11h-11z"/>
<path fill="#cf39f7" d="M2133 705h11v11h-11z"/>
<path fill="#c536f7" d="M2133 715h11v11h-11z"/>
<path fill="#bd34f7" d="M2133 725h11v11h-11z"/>
<path fill="#b531f7" d="M2133 735h11v11h-11z"/>
<path fill="#ad2ff7" d="M2133 745h11v11h-11z"/>
<path fill="#a62df6" d="M2133 755h11v11h-11z"/>
<path fill="#a02bf6" d="M2133 765h11v11h-11z"/>
<path fill="#9a2af6" d="M2133 775h11v11h-11z"/>
<path fill="#9428f6" d="M2133 785h11v11h-11z"/>
<path fill="#8f27f6" d="M2133 795h11v11h-11z"/>
<path fill="#8a25f6" d="M2133 805h11v11h-11z"/>
<path fill="#8524f6" d="M2133 815h11v11h-11z"/>
<path fill="#8123f6" d="M2133 825h11v11h-11z"/>
<path fill="#7c21f6" d="M2133 835h11v11h-11z"/>
<path fill="#7920f6" d="M2133 845h11v11h-11z"/>
<path fill="#751ff6" d="M2133 855h11v11h-11z"/>
<path fill="#711ef6" d="M2133 865h11v11h-11z"/>
<path fill="#6e1df6" d="M2133 875h11v11h-11z"/>
<path fill="#6b1cf6" d="M2133 885h11v11h-11z"/>
<path fill="#681bf6" d="M2133 895h11v11h-11z"/>
<path fill="#e44d26" d="M2143 425h11v11h-11z"/>
<path fill="#e44c26" d="M2143 435h11v11h-11z"/>
<path fill="#e44b26" d="M2143 445h11v11h-11z"/>
<path fill="#e44926" d="M2143 455h11v11h-11z"/>
<path fill="#e44826" d="M2143 465h11v11h-11z"/>
<path fill="#e44727" d="M2143 475h11v11h-11z"/>
<path fill="#e4462b" d="M2143 485h11v11h-11z"/>
<path fill="#e44530" d="M2143 495h11v11h-11z"/>
<path fill="#e44436" d="M2143 505h11v11h-11z"/>
<path fill="#e4433e" d="M2143 515h11v11h-11z"/>
<path fill="#e44245" d="M2143 525h11v11h-11z"/>
<path fill="#e4414e" d="M2143 535h11v11h-11z"/>
<path fill="#e44157" d="M2143 545h11v11h-11z"/>
<path fill="#e44060" d="M2143 555h11v11h-11z"/>
<path fill="#e4406a" d="M2143 565h11v11h-11z"/>
<path fill="#e44073" d="M2143 575h11v11h-11z"/>
<path fill="#e43f7d" d="M2143 585h11v11h-11z"/>
<path fill="#e43f87" d="M2143 595h11v11h-11z"/>
<path fill="#e43f92" d="M2143 605h11v11h-11z"/>
<path fill="#e43f9c" d="M2143 615h11v11h-11z"/>
<path fill="#e43fa7" d="M2143 625h11v11h-11z"/>
<path fill="#e53fb2" d="M2143 635h11v11h-11z"/>
<path fill="#e53fbd" d="M2143 645h11v11h-11z"/>
<path fill="#e53fc9" d="M2143 655h11v11h-11z"/>
<path fill="#e53fd4" d="M2143 665h11v11h-11z"/>
<path fill="#e53fe0" d="M2143 675h11v11h-11z"/>
<path fill="#e53fec" d="M2143 685h11v11h-11z"/>
<path fill="#e53ff7" d="M2143 695h11v11h-11z"/>
<path fill="#db3cf7" d="M2143 705h11v11h-11z"/>
<path fill="#d139f7" d="M2143 715h11v11h-11z"/>
<path fill="#c837f7" d="M2143 725h11v11h-11z"/>
<path fill="#bf34f7" d="M2143 735h11v11h-11z"/>
<path fill="#b732f7" d="M2143 745h11v11h-11z"/>
<path fill="#b030f7" d="M2143 755h11v11h-11z"/>
<path fill="#a92ef6" d="M2143 765h11v11h-11z"/>
<path fill="#a32cf6" d="M2143 775h11v11h-11z"/>
<path fill="#9d2bf6" d="M2143 785h11v11h-11z"/>
<path fill="#9729f6" d="M2143 795h11v11h-11z"/>
<path fill="#9228f6" d="M2143 805h11v11h-11z"/>
<path fill="#8d26f6" d="M2143 815h11v11h-11z"/>
<path fill="#8825f6" d="M2143 825h11v11h-11z"/>
<path fill="#8424f6" d="M2143 835h11v11h-11z"/>
<path fill="#8022f6" d="M2143 845h11v11h-11z"/>
<path fill="#7c21f6" d="M2143 855h11v11h-11z"/>
<path fill="#7820f6" d="M2143 865h11v11h-11z"/>
<path fill="#741ff6" d="M2143 875h11v11h-11z"/>
<path fill="#711ef6" d="M2143 885h11v11h-11z"/>
<path fill="#e44b26" d="M2153 425h11v11h-11z"/>
<path fill="#e44926" d="M2153 435h11v11h-11z"/>
<path fill="#e44826" d="M2153 445h11v11h-11z"/>
<path fill="#e44725" d="M2153 455h11v11h-11z"/>
<path fill="#e44625" d="M2153 465h11v11h-11z"/>
<path fill="#e44527" d="M2153 475h11v11h-11z"/>
<path fill="#e4442a" d="M2153 485h11v11h-11z"/>
<path fill="#e4432e" d="M2153 495h11v11h-11z"/>
<path fill="#e44234" d="M2153 505h11v11h-11z"/>
<path fill="#e4423b" d="M2153 515h11v11h-11z"/>
<path fill="#e44142" d="M2153 525h11v11h-11z"/>
<path fill="#e4414a" d="M2153 535h11v11h-11z"/>
<path fill="#e44053" d="M2153 545h11v11h-11z"/>
<path fill="#e4405b" d="M2153 555h11v11h-11z"/>
<path fill="#e43f64" d="M2153 565h11v11h-11z"/>
<path fill="#e43f6e" d="M2153 575h11v11h-11z"/>
<path fill="#e43f77" d="M2153 585h11v11h-11z"/>
<path fill="#e43f81" d="M2153 595h11v11h-11z"/>
<path fill="#e43f8a" d="M2153 605h11v11h-11z"/>
<path fill="#e43f94" d="M2153 615h11v11h-11z"/>
<path fill="#e43f9f" d="M2153 625h11v11h-11z"/>
<path fill="#e43fa9" d="M2153 635h11v11h-11z"/>
<path fill="#e53fb4" d="M2153 645h11v11h-11z"/>
<path fill="#e53fbe" d="M2153 655h11v11h-11z"/>
<path fill="#e53fc9" d="M2153 665h11v11h-11z"/>
<path fill="#e53fd4" d="M2153 675h11v11h-11z"/>
<path fill="#e53fdf" d="M2153 685h11v11h-11z"/>
<path fill="#e53feb" d="M2153 695h11v11h-11z"/>
<path fill="#e63ff6" d="M2153 705h11v11h-11z"/>
<path fill="#dc3df7" d="M2153 715h11v11h-11z"/>
<path fill="#d33af7" d="M2153 725h11v11h-11z"/>
<path fill="#ca37f7" d="M2153 735h11v11h-11z"/>
<path fill="#c135f7" d="M2153 745h11v11h-11z"/>
<path fill="#ba33f7" d="M2153 755h11v11h-11z"/>
<path fill="#b331f7" d="M2153 765h11v11h-11z"/>
<path fill="#ac2ff7" d="M2153 775h11v11h-11z"/>
<path fill="#a62df6" d="M2153 785h11v11h-11z"/>
<path fill="#a02bf6" d="M2153 795h11v11h-11z"/>
<path fill="#9a2af6" d="M2153 805h11v11h-11z"/>
<path fill="#9528f6" d="M2153 815h11v11h-11z"/>
<path fill="#9027f6" d="M2153 825h11v11h-11z"/>
<path fill="#8b26f6" d="M2153 835h11v11h-11z"/>
<path fill="#8724f6" d="M2153 845h11v11h-11z"/>
<path fill="#8323f6" d="M2153 855h11v11h-11z"/>
<path fill="#7f22f6" d="M2153 865h11v11h-11z"/>
<path fill="#7b21f6" d="M2153 875h11v11h-11z"/>
<path fill="#e44826" d="M2163 425h11v11h-11z"/>
<path fill="#e44725" d="M2163 435h11v11h-11z"/>
<path fill="#e44625" d="M2163 445h11v11h-11z"/>
<path fill="#e44525" d="M2163 455h11v11h-11z"/>
<path fill="#e44425" d="M2163 465h11v11h-11z"/>
<path fill="#e44426" d="M2163 475h11v11h-11z"/>
<path fill="#e44329" d="M2163 485h11v11h-11z"/>
<path fill="#e4422d" d="M2163 495h11v11h-11z"/>
<path fill="#e44132" d="M2163 505h11v11h-11z"/>
<path fill="#e44139" d="M2163 515h11v11h-11z"/>
<path fill="#e44040" d="M2163 525h11v11h-11z"/>
<path fill="#e44047" d="M2163 535h11v11h-11z"/>
<path fill="#e4404f" d="M2163 545h11v11h-11z"/>
<path fill="#e43f57" d="M2163 555h11v11h-11z"/>
<path fill="#e43f60" d="M2163 565h11v11h-11z"/>
<path fill="#e43f68" d="M2163 575h11v11h-11z"/>
<path fill="#e43f71" d="M2163 585h11v11h-11z"/>
<path fill="#e43f7a" d="M2163 595h11v11h-11z"/>
<path fill="#e43f84" d="M2163 605h11v11h-11z"/>
<path fill="#e43f8d" d="M2163 615h11v11h-11z"/>
<path fill="#e43f97" d="M2163 625h11v11h-11z"/>
<path fill="#e43fa1" d="M2163 635h11v11h-11z"/>
<path fill="#e43fab" d="M2163 645h11v11h-11z"/>
<path fill="#e53fb5" d="M2163 655h11v11h-11z"/>
<path fill="#e53fbf" d="M2163 665h11v11h-11z"/>
<path fill="#e53fca" d="M2163 675h11v11h-11z"/>
<path fill="#e53fd4" d="M2163 685h11v11h-11z"/>
<path fill="#e53fdf" d="M2163 695h11v11h-11z"/>
<path fill="#e53fea" d="M2163 705h11v11h-11z"/>
<path fill="#e63ff5" d="M2163 715h11v11h-11z"/>
<path fill="#de3df7" d="M2163 725h11v11h-11z"/>
<path fill="#d43af7" d="M2163 735h11v11h-11z"/>
<path fill="#cc38f7" d="M2163 745h11v11h-11z"/>
<path fill="#c436f7" d="M2163 755h11v11h-11z"/>
<path fill="#bc34f7" d="M2163 765h11v11h-11z"/>
<path fill="#b532f7" d="M2163 775h11v11h-11z"/>
<path fill="#ae30f7" d="M2163 785h11v11h-11z"/>
<path fill="#a82ef6" d="M2163 795h11v11h-11z"/>
<path fill="#a22cf6" d="M2163 805h11v11h-11z"/>
<path fill="#9d2bf6" d="M2163 815h11v11h-11z"/>
<path fill="#9829f6" d="M2163 825h11v11h-11z"/>
<path fill="#9328f6" d="M2163 835h11v11h-11z"/>
<path fill="#8e26f6" d="M2163 845h11v11h-11z"/>
<path fill="#8a25f6" d="M2163 855h11v11h-11z"/>
<path fill="#8624f6" d="M2163 865h11v11h-11z"/>
<path fill="#e44625" d="M2173 425h11v11h-11z"/>
<path fill="#e44525" d="M2173 435h11v11h-11z"/>
<path fill="#e44525" d="M2173 445h11v11h-11z"/>
<path fill="#e44425" d="M2173 455h11v11h-11z"/>
<path fill="#e44325" d="M2173 465h11v11h-11z"/>
<path fill="#e44226" d="M2173 475h11v11h-11z"/>
<path fill="#e44228" d="M2173 485h11v11h-11z"/>
<path fill="#e4412c" d="M2173 495h11v11h-11z"/>
<path fill="#e44131" d="M2173 505h11v11h-11z"/>
<path fill="#e44036" d="M2173 515h11v11h-11z"/>
<path fill="#e4403d" d="M2173 525h11v11h-11z"/>
<path fill="#e44044" d="M2173 535h11v11h-11z"/>
<path fill="#e43f4b" d="M2173 545h11v11h-11z"/>
<path fill="#e43f53" d="M2173 555h11v11h-11z"/>
<path fill="#e43f5b" d="M2173 565h11v11h-11z"/>
<path fill="#e43f64" d="M2173 575h11v11h-11z"/>
<path fill="#e43f6c" d="M2173 585h11v11h-11z"/>
<path fill="#e43f75" d="M2173 595h11v11h-11z"/>
<path fill="#e43f7e" d="M2173 605h11v11h-11z"/>
<path fill="#e43f87" d="M2173 615h11v11h-11z"/>
<path fill="#e43f90" d="M2173 625h11v11h-11z"/>
<path fill="#e43f99" d="M2173 635h11v11h-11z"/>
<path fill="#e43fa3" d="M2173 645h11v11h-11z"/>
<path fill="#e53fac" d="M2173 655h11v11h-11z"/>
<path fill="#e53fb6" d="M2173 665h11v11h-11z"/>
<path fill="#e53fc0" d="M2173 675h11v11h-11z"/>
<path fill="#e53fca" d="M2173 685h11v11h-11z"/>
<path fill="#e53fd4" d="M2173 695h11v11h-11z"/>
<path fill="#e53fdf" d="M2173 705h11v11h-11z"/>
<path fill="#e53fe9" d="M2173 715h11v11h-11z"/>
<path fill="#e63ff4" d="M2173 725h11v11h-11z"/>
<path fill="#df3df7" d="M2173 735h11v11h-11z"/>
<path fill="#d63bf7" d="M2173 745h11v11h-11z"/>
<path fill="#ce38f7" d="M2173 755h11v11h-11z"/>
<path fill="#c636f7" d="M2173 765h11v11h-11z"/>
<path fill="#be34f7" d="M2173 775h11v11h-11z"/>
<path fill="#b732f7" d="M2173 785h11v11h-11z"/>
<path fill="#b130f7" d="M2173 795h11v11h-11z"/>
<path fill="#ab2ff6" d="M2173 805h11v11h-11z"/>
<path fill="#a52df6" d="M2173 815h11v11h-11z"/>
<path fill="#a02bf6" d="M2173 825h11v11h-11z"/>
<path fill="#9a2af6" d="M2173 835h11v11h-11z"/>
<path fill="#9629f6" d="M2173 845h11v11h-11z"/>
<path fill="#9127f6" d="M2173 855h11v11h-11z"/>
<path fill="#e44525" d="M2183 425h11v11h-11z"/>
<path fill="#e44425" d="M2183 435h11v11h-11z"/>
<path fill="#e44325" d="M2183 445h11v11h-11z"/>
<path fill="#e44325" d="M2183 455h11v11h-11z"/>
<path fill="#e44225" d="M2183 465h11v11h-11z"/>
<path fill="#e44125" d="M2183 475h11v11h-11z"/>
<path fill="#e44127" d="M2183 485h11v11h-11z"/>
<path fill="#e4402b" d="M2183 495h11v11h-11z"/>
<path fill="#e4402f" d="M2183 505h11v11h-11z"/>
<path fill="#e44035" d="M2183 515h11v11h-11z"/>
<path fill="#e43f3b" d="M2183 525h11v11h-11z"/>
<path fill="#e43f41" d="M2183 535h11v11h-11z"/>
<path fill="#e43f48" d="M2183 545h11v11h-11z"/>
<path fill="#e43f50" d="M2183 555h11v11h-11z"/>
<path fill="#e43f57" d="M2183 565h11v11h-11z"/>
<path fill="#e43f5f" d="M2183 575h11v11h-11z"/>
<path fill="#e43f67" d="M2183 585h11v11h-11z"/>
<path fill="#e43f70" d="M2183 595h11v11h-11z"/>
<path fill="#e43f78" d="M2183 605h11v11h-11z"/>
<path fill="#e43f81" d="M2183 615h11v11h-11z"/>
<path fill="#e43f89" d="M2183 625h11v11h-11z"/>
<path fill="#e43f92" d="M2183 635h11v11h-11z"/>
<path fill="#e43f9b" d="M2183 645h11v11h-11z"/>
<path fill="#e43fa4" d="M2183 655h11v11h-11z"/>
<path fill="#e53fae" d="M2183 665h11v11h-11z"/>
<path fill="#e53fb7" d="M2183 675h11v11h-11z"/>
<path fill="#e53fc1" d="M2183 685h11v11h-11z"/>
<path fill="#e53fca" d="M2183 695h11v11h-11z"/>
<path fill="#e53fd4" d="M2183 705h11v11h-11z"/>
<path fill="#e53fde" d="M2183 715h11v11h-11z"/>
<path fill="#e53fe8" d="M2183 725h11v11h-11z"/>
<path fill="#e63ff2" d="M2183 735h11v11h-11z"/>
<path fill="#e13ef7" d="M2183 745h11v11h-11z"/>
<path fill="#d83bf7" d="M2183 755h11v11h-11z"/>
<path fill="#cf39f7" d="M2183 765h11v11h-11z"/>
<path fill="#c837f7" d="M2183 775h11v11h-11z"/>
<path fill="#c035f7" d="M2183 785h11v11h-11z"/>
<path fill="#ba33f7" d="M2183 795h11v11h-11z"/>
<path fill="#b331f7" d="M2183 805h11v11h-11z"/>
<path fill="#ad2ff7" d="M2183 815h11v11h-11z"/>
<path fill="#a82ef6" d="M2183 825h11v11h-11z"/>
<path fill="#a22cf6" d="M2183 835h11v11h-11z"/>
<path fill="#9d2bf6" d="M2183 845h11v11h-11z"/>
<path fill="#e44325" d="M2193 425h11v11h-11z"/>
<path fill="#e44325" d="M2193 435h11v11h-11z"/>
<path fill="#e44225" d="M2193 445h11v11h-11z"/>
<path fill="#e44225" d="M2193 455h11v11h-11z"/>
<path fill="#e44125" d="M2193 465h11v11h-11z"/>
<path fill="#e44125" d="M2193 475h11v11h-11z"/>
<path fill="#e44027" d="M2193 485h11v11h-11z"/>
<path fill="#e4402a" d="M2193 495h11v11h-11z"/>
<path fill="#e4402e" d="M2193 505h11v11h-11z"/>
<path fill="#e43f33" d="M2193 515h11v11h-11z"/>
<path fill="#e43f39" d="M2193 525h11v11h-11z"/>
<path fill="#e43f3f" d="M2193 535h11v11h-11z"/>
<path fill="#e43f46" d="M2193 545h11v11h-11z"/>
<path fill="#e43f4d" d="M2193 555h11v11h-11z"/>
<path fill="#e43f54" d="M2193 565h11v11h-11z"/>
<path fill="#e43f5b" d="M2193 575h11v11h-11z"/>
<path fill="#e43f63" d="M2193 585h11v11h-11z"/>
<path fill="#e43f6b" d="M2193 595h11v11h-11z"/>
<path fill="#e43f73" d="M2193 605h11v11h-11z"/>
<path fill="#e43f7b" d="M2193 615h11v11h-11z"/>
<path fill="#e43f84" d="M2193 625h11v11h-11z"/>
<path fill="#e43f8c" d="M2193 635h11v11h-11z"/>
<path fill="#e43f95" d="M2193 645h11v11h-11z"/>
<path fill="#e43f9d" d="M2193 655h11v11h-11z"/>
<path fill="#e43fa6" d="M2193 665h11v11h-11z"/>
<path fill="#e53faf" d="M2193 675h11v11h-11z"/>
<path fill="#e53fb8" d="M2193 685h11v11h-11z"/>
<path fill="#e53fc1" d="M2193 695h11v11h-11z"/>
<path fill="#e53fcb" d="M2193 705h11v11h-11z"/>
<path fill="#e53fd4" d="M2193 715h11v11h-11z"/>
<path fill="#e53fde" d="M2193 725h11v11h-11z"/>
<path fill="#e53fe8" d="M2193 735h11v11h-11z"/>
<path fill="#e63ff1" d="M2193 745h11v11h-11z"/>
<path fill="#e23ef7" d="M2193 755h11v11h-11z"/>
<path fill="#d93cf7" d="M2193 765h11v11h-11z"/>
<path fill="#d139f7" d="M2193 775h11v11h-11z"/>
<path fill="#ca37f7" d="M2193 785h11v11h-11z"/>
<path fill="#c235f7" d="M2193 795h11v11h-11z"/>
<path fill="#bc33f7" d="M2193 805h11v11h-11z"/>
<path fill="#b532f7" d="M2193 815h11v11h-11z"/>
<path fill="#b030f7" d="M2193 825h11v11h-11z"/>
<path fill="#e44225" d="M2203 425h11v11h-11z"/>
<path fill="#e44225" d="M2203 435h11v11h-11z"/>
<path fill="#e44125" d="M2203 445h11v11h-11z"/>
<path fill="#e44125" d="M2203 455h11v11h-11z"/>
<path fill="#e44025" d="M2203 465h11v11h-11z"/>
<path fill="#e44025" d="M2203 475h11v11h-11z"/>
<path fill="#e44026" d="M2203 485h11v11h-11z"/>
<path fill="#e44029" d="M2203 495h11v11h-11z"/>
<path fill="#e43f2d" d="M2203 505h11v11h-11z"/>
<path fill="#e43f31" d="M2203 515h11v11h-11z"/>
<path fill="#e43f37" d="M2203 525h11v11h-11z"/>
<path fill="#e43f3d" d="M2203 535h11v11h-11z"/>
<path fill="#e43f43" d="M2203 545h11v11h-11z"/>
<path fill="#e43f4a" d="M2203 555h11v11h-11z"/>
<path fill="#e43f51" d="M2203 565h11v11h-11z"/>
<path fill="#e43f58" d="M2203 575h11v11h-11z"/>
<path fill="#e43f5f" d="M2203 585h11v11h-11z"/>
<path fill="#e43f67" d="M2203 595h11v11h-11z"/>
<path fill="#e43f6e" d="M2203 605h11v11h-11z"/>
<path fill="#e43f76" d="M2203 615h11v11h-11z"/>
<path fill="#e43f7e" d="M2203 625h11v11h-11z"/>
<path fill="#e43f86" d="M2203 635h11v11h-11z"/>
<path fill="#e43f8e" d="M2203 645h11v11h-11z"/>
<path fill="#e43f97" d="M2203 655h11v11h-11z"/>
<path fill="#e43f9f" d="M2203 665h11v11h-11z"/>
<path fill="#e43fa8" d="M2203 675h11v11h-11z"/>
<path fill="#e53fb0" d="M2203 685h11v11h-11z"/>
<path fill="#e53fb9" d="M2203 695h11v11h-11z"/>
<path fill="#e53fc2" d="M2203 705h11v11h-11z"/>
<path fill="#e53fcb" d="M2203 715h11v11h-11z"/>
<path fill="#e53fd4" d="M2203 725h11v11h-11z"/>
<path fill="#e53fde" d="M2203 735h11v11h-11z"/>
<path fill="#e53fe7" d="M2203 745h11v11h-11z"/>
<path fill="#e63ff0" d="M2203 755h11v11h-11z"/>
<path fill="#e33ef7" d="M2203 765h11v11h-11z"/>
<path fill="#db3cf7" d="M2203 775h11v11h-11z"/>
<path fill="#d33af7" d="M2203 785h11v11h-11z"/>
<path fill="#cb38f7" d="M2203 795h11v11h-11z"/>
<path fill="#c436f7" d="M2203 805h11v11h-11z"/>
<path fill="#be34f7" d="M2203 815h11v11h-11z"/>
<path fill="#e44125" d="M2213 435h11v11h-11z"/>
<path fill="#e44125" d="M2213 445h11v11h-11z"/>
<path fill="#e44025" d="M2213 455h11v11h-11z"/>
<path fill="#e44024" d="M2213 465h11v11h-11z"/>
<path fill="#e44025" d="M2213 475h11v11h-11z"/>
<path fill="#e43f26" d="M2213 485h11v11h-11z"/>
<path fill="#e43f28" d="M2213 495h11v11h-11z"/>
<path fill="#e43f2c" d="M2213 505h11v11h-11z"/>
<path fill="#e43f30" d="M2213 515h11v11h-11z"/>
<path fill="#e43f35" d="M2213 525h11v11h-11z"/>
<path fill="#e43f3b" d="M2213 535h11v11h-11z"/>
<path fill="#e43f41" d="M2213 545h11v11h-11z"/>
<path fill="#e43f47" d="M2213 555h11v11h-11z"/>
<path fill="#e43f4e" d="M2213 565h11v11h-11z"/>
<path fill="#e43f54" d="M2213 575h11v11h-11z"/>
<path fill="#e43f5b" d="M2213 585h11v11h-11z"/>
<path fill="#e43f63" d="M2213 595h11v11h-11z"/>
<path fill="#e43f6a" d="M2213 605h11v11h-11z"/>
<path fill="#e43f71" d="M2213 615h11v11h-11z"/>
<path fill="#e43f79" d="M2213 625h11v11h-11z"/>
<path fill="#e43f81" d="M2213 635h11v11h-11z"/>
<path fill="#e43f89" d="M2213 645h11v11h-11z"/>
<path fill="#e43f91" d="M2213 655h11v11h-11z"/>
<path fill="#e43f99" d="M2213 665h11v11h-11z"/>
<path fill="#e43fa1" d="M2213 675h11v11h-11z"/>
<path fill="#e43fa9" d="M2213 685h11v11h-11z"/>
<path fill="#e53fb2" d="M2213 695h11v11h-11z"/>
<path fill="#e53fba" d="M2213 705h11v11h-11z"/>
<path fill="#e53fc3" d="M2213 715h11v11h-11z"/>
<path fill="#e53fcb" d="M2213 725h11v11h-11z"/>
<path fill="#e53fd4" d="M2213 735h11v11h-11z"/>
<path fill="#e53fdd" d="M2213 745h11v11h-11z"/>
<path fill="#e53fe6" d="M2213 755h11v11h-11z"/>
<path fill="#e53ff0" d="M2213 765h11v11h-11z"/>
<path fill="#e43ff7" d="M2213 775h11v11h-11z"/>
<path fill="#dc3cf7" d="M2213 785h11v11h-11z"/>
<path fill="#d43af7" d="M2213 795h11v11h-11z"/>
<path fill="#cd38f7" d="M2213 805h11v11h-11z"/>
<path fill="#e44025" d="M2223 435h11v11h-11z"/>
<path fill="#e44024" d="M2223 445h11v11h-11z"/>
<path fill="#e44024" d="M2223 455h11v11h-11z"/>
<path fill="#e44024" d="M2223 465h11v11h-11z"/>
<path fill="#e43f25" d="M2223 475h11v11h-11z"/>
<path fill="#e43f26" d="M2223 485h11v11h-11z"/>
<path fill="#e43f28" d="M2223 495h11v11h-11z"/>
<path fill="#e43f2b" d="M2223 505h11v11h-11z"/>
<path fill="#e43f2f" d="M2223 515h11v11h-11z"/>
<path fill="#e43f34" d="M2223 525h11v11h-11z"/>
<path fill="#e43f39" d="M2223 535h11v11h-11z"/>
<path fill="#e43f3f" d="M2223 545h11v11h-11z"/>
<path fill="#e43f45" d="M2223 555h11v11h-11z"/>
<path fill="#e43f4b" d="M2223 565h11v11h-11z"/>
<path fill="#e43f51" d="M2223 575h11v11h-11z"/>
<path fill="#e43f58" d="M2223 585h11v11h-11z"/>
<path fill="#e43f5f" d="M2223 595h11v11h-11z"/>
<path fill="#e43f66" d="M2223 605h11v11h-11z"/>
<path fill="#e43f6d" d="M2223 615h11v11h-11z"/>
<path fill="#e43f74" d="M2223 625h11v11h-11z"/>
<path fill="#e43f7c" d="M2223 635h11v11h-11z"/>
<path fill="#e43f83" d="M2223 645h11v11h-11z"/>
<path fill="#e43f8b" d="M2223 655h11v11h-11z"/>
<path fill="#e43f93" d="M2223 665h11v11h-11z"/>
<path fill="#e43f9b" d="M2223 675h11v11h-11z"/>
<path fill="#e43fa2" d="M2223 685h11v11h-11z"/>
<path fill="#e43fab" d="M2223 695h11v11h-11z"/>
<path fill="#e53fb3" d="M2223 705h11v11h-11z"/>
<path fill="#e53fbb" d="M2223 715h11v11h-11z"/>
<path fill="#e53fc3" d="M2223 725h11v11h-11z"/>
<path fill="#e53fcc" d="M2223 735h11v11h-11z"/>
<path fill="#e53fd4" d="M2223 745h11v11h-11z"/>
<path fill="#e53fdd" d="M2223 755h11v11h-11z"/>
<path fill="#e53fe6" d="M2223 765h11v11h-11z"/>
<path fill="#e53fef" d="M2223 775h11v11h-11z"/>
<path fill="#e53ff7" d="M2223 785h11v11h-11z"/>
<path fill="#dd3df7" d="M2223 795h11v11h-11z"/>
<path fill="#e44024" d="M2233 435h11v11h-11z"/>
<path fill="#e44024" d="M2233 445h11v11h-11z"/>
<path fill="#e44024" d="M2233 455h11v11h-11z"/>
<path fill="#e43f24" d="M2233 465h11v11h-11z"/>
<path fill="#e43f25" d="M2233 475h11v11h-11z"/>
<path fill="#e43f25" d="M2233 485h11v11h-11z"/>
<path fill="#e43f27" d="M2233 495h11v11h-11z"/>
<path fill="#e43f2a" d="M2233 505h11v11h-11z"/>
<path fill="#e43f2e" d="M2233 515h11v11h-11z"/>
<path fill="#e43f32" d="M2233 525h11v11h-11z"/>
<path fill="#e43f37" d="M2233 535h11v11h-11z"/>
<path fill="#e43f3d" d="M2233 545h11v11h-11z"/>
<path fill="#e43f42" d="M2233 555h11v11h-11z"/>
<path fill="#e43f48" d="M2233 565h11v11h-11z"/>
<path fill="#e43f4e" d="M2233 575h11v11h-11z"/>
<path fill="#e43f55" d="M2233 585h11v11h-11z"/>
<path fill="#e43f5b" d="M2233 595h11v11h-11z"/>
<path fill="#e43f62" d="M2233 605h11v11h-11z"/>
<path fill="#e43f69" d="M2233 615h11v11h-11z"/>
<path fill="#e43f70" d="M2233 625h11v11h-11z"/>
<path fill="#e43f77" d="M2233 635h11v11h-11z"/>
<path fill="#e43f7e" d="M2233 645h11v11h-11z"/>
<path fill="#e43f86" d="M2233 655h11v11h-11z"/>
<path fill="#e43f8d" d="M2233 665h11v11h-11z"/>
<path fill="#e43f95" d="M2233 675h11v11h-11z"/>
<path fill="#e43f9c" d="M2233 685h11v11h-11z"/>
<path fill="#e43fa4" d="M2233 695h11v11h-11z"/>
<path fill="#e53fac" d="M2233 705h11v11h-11z"/>
<path fill="#e53fb4" d="M2233 715h11v11h-11z"/>
<path fill="#e53fbc" d="M2233 725h11v11h-11z"/>
<path fill="#e53fc4" d="M2233 735h11v11h-11z"/>
<path fill="#e53fcc" d="M2233 745h11v11h-11z"/>
<path fill="#e53fd4" d="M2233 755h11v11h-11z"/>
<path fill="#e53fdd" d="M2233 765h11v11h-11z"/>
<path fill="#e53fe5" d="M2233 775h11v11h-11z"/>
<path fill="#e53fee" d="M2233 785h11v11h-11z"/>
<path fill="#e44024" d="M2243 435h11v11h-11z"/>
<path fill="#e44024" d="M2243 445h11v11h-11z"/>
<path fill="#e43f24" d="M2243 455h11v11h-11z"/>
<path fill="#e43f24" d="M2243 465h11v11h-11z"/>
<path fill="#e43f24" d="M2243 475h11v11h-11z"/>
<path fill="#e43f25" d="M2243 485h11v11h-11z"/>
<path fill="#e43f27" d="M2243 495h11v11h-11z"/>
<path fill="#e43f2a" d="M2243 505h11v11h-11z"/>
<path fill="#e43f2d" d="M2243 515h11v11h-11z"/>
<path fill="#e43f31" d="M2243 525h11v11h-11z"/>
<path fill="#e43f36" d="M2243 535h11v11h-11z"/>
<path fill="#e43f3b" d="M2243 545h11v11h-11z"/>
<path fill="#e43f40" d="M2243 555h11v11h-11z"/>
<path fill="#e43f46" d="M2243 565h11v11h-11z"/>
<path fill="#e43f4c" d="M2243 575h11v11h-11z"/>
<path fill="#e43f52" d="M2243 585h11v11h-11z"/>
<path fill="#e43f58" d="M2243 595h11v11h-11z"/>
<path fill="#e43f5f" d="M2243 605h11v11h-11z"/>
<path fill="#e43f65" d="M2243 615h11v11h-11z"/>
<path fill="#e43f6c" d="M2243 625h11v11h-11z"/>
<path fill="#e43f73" d="M2243 635h11v11h-11z"/>
<path fill="#e43f7a" d="M2243 645h11v11h-11z"/>
<path fill="#e43f81" d="M2243 655h11v11h-11z"/>
<path fill="#e43f88" d="M2243 665h11v11h-11z"/>
<path fill="#e43f8f" d="M2243 675h11v11h-11z"/>
<path fill="#e43f96" d="M2243 685h11v11h-11z"/>
<path fill="#e43f9e" d="M2243 695h11v11h-11z"/>
<path fill="#e43fa5" d="M2243 705h11v11h-11z"/>
<path fill="#e53fad" d="M2243 715h11v11h-11z"/>
<path fill="#e53fb5" d="M2243 725h11v11h-11z"/>
<path fill="#e53fbd" d="M2243 735h11v11h-11z"/>
<path fill="#e53fc4" d="M2243 745h11v11h-11z"/>
<path fill="#e53fcc" d="M2243 755h11v11h-11z"/>
<path fill="#e53fd4" d="M2243 765h11v11h-11z"/>
<path fill="#e53fdd" d="M2243 775h11v11h-11z"/>
<path fill="#e43f24" d="M2253 435h11v11h-11z"/>
<path fill="#e43f24" d="M2253 445h11v11h-11z"/>
<path fill="#e43f24" d="M2253 455h11v11h-11z"/>
<path fill="#e43f24" d="M2253 465h11v11h-11z"/>
<path fill="#e43f24" d="M2253 475h11v11h-11z"/>
<path fill="#e43f25" d="M2253 485h11v11h-11z"/>
<path fill="#e43f27" d="M2253 495h11v11h-11z"/>
<path fill="#e43f29" d="M2253 505h11v11h-11z"/>
<path fill="#e43f2c" d="M2253 515h11v11h-11z"/>
<path fill="#e43f30" d="M2253 525h11v11h-11z"/>
<path fill="#e43f34" d="M2253 535h11v11h-11z"/>
<path fill="#e43f39" d="M2253 545h11v11h-11z"/>
<path fill="#e43f3e" d="M2253 555h11v11h-11z"/>
<path fill="#e43f44" d="M2253 565h11v11h-11z"/>
<path fill="#e43f49" d="M2253 575h11v11h-11z"/>
<path fill="#e43f4f" d="M2253 585h11v11h-11z"/>
<path fill="#e43f55" d="M2253 595h11v11h-11z"/>
<path fill="#e43f5b" d="M2253 605h11v11h-11z"/>
<path fill="#e43f62" d="M2253 615h11v11h-11z"/>
<path fill="#e43f68" d="M2253 625h11v11h-11z"/>
<path fill="#e43f6f" d="M2253 635h11v11h-11z"/>
<path fill="#e43f75" d="M2253 645h11v11h-11z"/>
<path fill="#e43f7c" d="M2253 655h11v11h-11z"/>
<path fill="#e43f83" d="M2253 665h11v11h-11z"/>
<path fill="#e43f8a" d="M2253 675h11v11h-11z"/>
<path fill="#e43f91" d="M2253 685h11v11h-11z"/>
<path fill="#e43f98" d="M2253 695h11v11h-11z"/>
<path fill="#e43f9f" d="M2253 705h11v11h-11z"/>
<path fill="#e43fa7" d="M2253 715h11v11h-11z"/>
<path fill="#e53fae" d="M2253 725h11v11h-11z"/>
<path fill="#e53fb6" d="M2253 735h11v11h-11z"/>
<path fill="#e53fbd" d="M2253 745h11v11h-11z"/>
<path fill="#e53fc5" d="M2253 755h11v11h-11z"/>
<path fill="#e43f24" d="M2263 435h11v11h-11z"/>
<path fill="#e43f24" d="M2263 445h11v11h-11z"/>
<path fill="#e43f24" d="M2263 455h11v11h-11z"/>
<path fill="#e43f24" d="M2263 465h11v11h-11z"/>
<path fill="#e43f24" d="M2263 475h11v11h-11z"/>
<path fill="#e43f25" d="M2263 485h11v11h-11z"/>
<path fill="#e43f26" d="M2263 495h11v11h-11z"/>
<path fill="#e43f28" d="M2263 505h11v11h-11z"/>
<path fill="#e43f2b" d="M2263 515h11v11h-11z"/>
<path fill="#e43f2f" d="M2263 525h11v11h-11z"/>
<path fill="#e43f33" d="M2263 535h11v11h-11z"/>
<path fill="#e43f37" d="M2263 545h11v11h-11z"/>
<path fill="#e43f3c" d="M2263 555h11v11h-11z"/>
<path fill="#e43f42" d="M2263 565h11v11h-11z"/>
<path fill="#e43f47" d="M2263 575h11v11h-11z"/>
<path fill="#e43f4d" d="M2263 585h11v11h-11z"/>
<path fill="#e43f52" d="M2263 595h11v11h-11z"/>
<path fill="#e43f58" d="M2263 605h11v11h-11z"/>
<path fill="#e43f5e" d="M2263 615h11v11h-11z"/>
<path fill="#e43f65" d="M2263 625h11v11h-11z"/>
<path fill="#e43f6b" d="M2263 635h11v11h-11z"/>
<path fill="#e43f71" d="M2263 645h11v11h-11z"/>
<path fill="#e43f78" d="M2263 655h11v11h-11z"/>
<path fill="#e43f7f" d="M2263 665h11v11h-11z"/>
<path fill="#e43f85" d="M2263 675h11v11h-11z"/>
<path fill="#e43f8c" d="M2263 685h11v11h-11z"/>
<path fill="#e43f93" d="M2263 695h11v11h-11z"/>
<path fill="#e43f9a" d="M2263 705h11v11h-11z"/>
<path fill="#e43fa1" d="M2263 715h11v11h-11z"/>
<path fill="#e43fa8" d="M2263 725h11v11h-11z"/>
<path fill="#e53faf" d="M2263 735h11v11h-11z"/>
<path fill="#e53fb7" d="M2263 745h11v11h-11z"/>
<path fill="#e43f24" d="M2273 435h11v11h-11z"/>
<path fill="#e43f24" d="M2273 445h11v11h-11z"/>
<path fill="#e43f24" d="M2273 455h11v11h-11z"/>
<path fill="#e43f24" d="M2273 465h11v11h-11z"/>
<path fill="#e43f24" d="M2273 475h11v11h-11z"/>
<path fill="#e43f25" d="M2273 485h11v11h-11z"/>
<path fill="#e43f26" d="M2273 495h11v11h-11z"/>
<path fill="#e43f28" d="M2273 505h11v11h-11z"/>
<path fill="#e43f2b" d="M2273 515h11v11h-11z"/>
<path fill="#e43f2e" d="M2273 525h11v11h-11z"/>
<path fill="#e43f32" d="M2273 535h11v11h-11z"/>
<path fill="#e43f36" d="M2273 545h11v11h-11z"/>
<path fill="#e43f3b" d="M2273 555h11v11h-11z"/>
<path fill="#e43f40" d="M2273 565h11v11h-11z"/>
<path fill="#e43f45" d="M2273 575h11v11h-11z"/>
<path fill="#e43f4a" d="M2273 585h11v11h-11z"/>
<path fill="#e43f50" d="M2273 595h11v11h-11z"/>
<path fill="#e43f56" d="M2273 605h11v11h-11z"/>
<path fill="#e43f5b" d="M2273 615h11v11h-11z"/>
<path fill="#e43f61" d="M2273 625h11v11h-11z"/>
<path fill="#e43f67" d="M2273 635h11v11h-11z"/>
<path fill="#e43f6e" d="M2273 645h11v11h-11z"/>
<path fill="#e43f74" d="M2273 655h11v11h-11z"/>
<path fill="#e43f7a" d="M2273 665h11v11h-11z"/>
<path fill="#e43f81" d="M2273 675h11v11h-11z"/>
<path fill="#e43f87" d="M2273 685h11v11h-11z"/>
<path fill="#e43f8e" d="M2273 695h11v11h-11z"/>
<path fill="#e43f95" d="M2273 705h11v11h-11z"/>
<path fill="#e43f9b" d="M2273 715h11v11h-11z"/>
<path fill="#e43fa2" d="M2273 725h11v11h-11z"/>
<path fill="#e43fa9" d="M2273 735h11v11h-11z"/>
<path fill="#e43f24" d="M2283 435h11v11h-11z"/>
<path fill="#e43f24" d="M2283 445h11v11h-11z"/>
<path fill="#e43f24" d="M2283 455h11v11h-11z"/>
<path fill="#e43f24" d="M2283 465h11v11h-11z"/>
<path fill="#e43f24" d="M2283 475h11v11h-11z"/>
<path fill="#e43f25" d="M2283 485h11v11h-11z"/>
<path fill="#e43f26" d="M2283 495h11v11h-11z"/>
<path fill="#e43f27" d="M2283 505h11v11h-11z"/>
<path fill="#e43f2a" d="M2283 515h11v11h-11z"/>
<path fill="#e43f2d" d="M2283 525h11v11h-11z"/>
<path fill="#e43f31" d="M2283 535h11v11h-11z"/>
<path fill="#e43f35" d="M2283 545h11v11h-11z"/>
<path fill="#e43f39" d="M2283 555h11v11h-11z"/>
<path fill="#e43f3e" d="M2283 565h11v11h-11z"/>
<path fill="#e43f43" d="M2283 575h11v11h-11z"/>
<path fill="#e43f48" d="M2283 585h11v11h-11z"/>
<path fill="#e43f4d" d="M2283 595h11v11h-11z"/>
<path fill="#e43f53" d="M2283 605h11v11h-11z"/>
<path fill="#e43f59" d="M2283 615h11v11h-11z"/>
<path fill="#e43f5e" d="M2283 625h11v11h-11z"/>
<path fill="#e43f64" d="M2283 635h11v11h-11z"/>
<path fill="#e43f6a" d="M2283 645h11v11h-11z"/>
<path fill="#e43f70" d="M2283 655h11v11h-11z"/>
<path fill="#e43f76" d="M2283 665h11v11h-11z"/>
<path fill="#e43f7d" d="M2283 675h11v11h-11z"/>
<path fill="#e43f83" d="M2283 685h11v11h-11z"/>
<path fill="#e43f89" d="M2283 695h11v11h-11z"/>
<path fill="#e43f90" d="M2283 705h11v11h-11z"/>
<path fill="#e43f96" d="M2283 715h11v11h-11z"/>
<path fill="#e43f9d" d="M2283 725h11v11h-11z"/>
<path fill="#e43f24" d="M2293 445h11v11h-11z"/>
<path fill="#e43f24" d="M2293 455h11v11h-11z"/>
<path fill="#e43f24" d="M2293 465h11v11h-11z"/>
<path fill="#e43f24" d="M2293 475h11v11h-11z"/>
<path fill="#e43f25" d="M2293 485h11v11h-11z"/>
<path fill="#e43f26" d="M2293 495h11v11h-11z"/>
<path fill="#e43f27" d="M2293 505h11v11h-11z"/>
<path fill="#e43f29" d="M2293 515h11v11h-11z"/>
<path fill="#e43f2c" d="M2293 525h11v11h-11z"/>
<path fill="#e43f30" d="M2293 535h11v11h-11z"/>
<path fill="#e43f34" d="M2293 545h11v11h-11z"/>
<path fill="#e43f38" d="M2293 555h11v11h-11z"/>
<path fill="#e43f3c" d="M2293 565h11v11h-11z"/>
<path fill="#e43f41" d="M2293 575h11v11h-11z"/>
<path fill="#e43f46" d="M2293 585h11v11h-11z"/>
<path fill="#e43f4b" d="M2293 595h11v11h-11z"/>
<path fill="#e43f50" d="M2293 605h11v11h-11z"/>
<path fill="#e43f56" d="M2293 615h11v11h-11z"/>
<path fill="#e43f5b" d="M2293 625h11v11h-11z"/>
<path fill="#e43f61" d="M2293 635h11v11h-11z"/>
<path fill="#e43f67" d="M2293 645h11v11h-11z"/>
<path fill="#e43f6d" d="M2293 655h11v11h-11z"/>
<path fill="#e43f73" d="M2293 665h11v11h-11z"/>
<path fill="#e43f79" d="M2293 675h11v11h-11z"/>
<path fill="#e43f7f" d="M2293 685h11v11h-11z"/>
<path fill="#e43f85" d="M2293 695h11v11h-11z"/>
<path fill="#e43f8b" d="M2293 705h11v11h-11z"/>
<path fill="#e43f92" d="M2293 715h11v11h-11z"/>
<path fill="#e43f24" d="M2303 445h11v11h-11z"/>
<path fill="#e43f24" d="M2303 455h11v11h-11z"/>
<path fill="#e43f24" d="M2303 465h11v11h-11z"/>
<path fill="#e43f24" d="M2303 475h11v11h-11z"/>
<path fill="#e43f25" d="M2303 485h11v11h-11z"/>
<path fill="#e43f25" d="M2303 495h11v11h-11z"/>
<path fill="#e43f27" d="M2303 505h11v11h-11z"/>
<path fill="#e43f29" d="M2303 515h11v11h-11z"/>
<path fill="#e43f2c" d="M2303 525h11v11h-11z"/>
<path fill="#e43f2f" d="M2303 535h11v11h-11z"/>
<path fill="#e43f32" d="M2303 545h11v11h-11z"/>
<path fill="#e43f36" d="M2303 555h11v11h-11z"/>
<path fill="#e43f3b" d="M2303 565h11v11h-11z"/>
<path fill="#e43f3f" d="M2303 575h11v11h-11z"/>
<path fill="#e43f44" d="M2303 585h11v11h-11z"/>
<path fill="#e43f49" d="M2303 595h11v11h-11z"/>
<path fill="#e43f4e" d="M2303 605h11v11h-11z"/>
<path fill="#e43f53" d="M2303 615h11v11h-11z"/>
<path fill="#e43f59" d="M2303 625h11v11h-11z"/>
<path fill="#e43f5e" d="M2303 635h11v11h-11z"/>
<path fill="#e43f64" d="M2303 645h11v11h-11z"/>
<path fill="#e43f69" d="M2303 655h11v11h-11z"/>
<path fill="#e43f6f" d="M2303 665h11v11h-11z"/>
<path fill="#e43f75" d="M2303 675h11v11h-11z"/>
<path fill="#e43f7b" d="M2303 685h11v11h-11z"/>
<path fill="#e43f81" d="M2303 695h11v11h-11z"/>
<path fill="#e43f87" d="M2303 705h11v11h-11z"/>
<path fill="#e43f24" d="M2313 445h11v11h-11z"/>
<path fill="#e43f24" d="M2313 455h11v11h-11z"/>
<path fill="#e43f24" d="M2313 465h11v11h-11z"/>
<path fill="#e43f24" d="M2313 475h11v11h-11z"/>
<path fill="#e43f24" d="M2313 485h11v11h-11z"/>
<path fill="#e43f25" d="M2313 495h11v11h-11z"/>
<path fill="#e43f26" d="M2313 505h11v11h-11z"/>
<path fill="#e43f28" d="M2313 515h11v11h-11z"/>
<path fill="#e43f2b" d="M2313 525h11v11h-11z"/>
<path fill="#e43f2e" d="M2313 535h11v11h-11z"/>
<path fill="#e43f31" d="M2313 545h11v11h-11z"/>
<path fill="#e43f35" d="M2313 555h11v11h-11z"/>
<path fill="#e43f39" d="M2313 565h11v11h-11z"/>
<path fill="#e43f3e" d="M2313 575h11v11h-11z"/>
<path fill="#e43f42" d="M2313 585h11v11h-11z"/>
<path fill="#e43f47" d="M2313 595h11v11h-11z"/>
<path fill="#e43f4c" d="M2313 605h11v11h-11z"/>
<path fill="#e43f51" d="M2313 615h11v11h-11z"/>
<path fill="#e43f56" d="M2313 625h11v11h-11z"/>
<path fill="#e43f5b" d="M2313 635h11v11h-11z"/>
<path fill="#e43f61" d="M2313 645h11v11h-11z"/>
<path fill="#e43f66" d="M2313 655h11v11h-11z"/>
<path fill="#e43f6c" d="M2313 665h11v11h-11z"/>
<path fill="#e43f71" d="M2313 675h11v11h-11z"/>
<path fill="#e43f77" d="M2313 685h11v11h-11z"/>
<path fill="#e43f24" d="M2323 445h11v11h-11z"/>
<path fill="#e43f24" d="M2323 455h11v11h-11z"/>
<path fill="#e43f24" d="M2323 465h11v11h-11z"/>
<path fill="#e43f24" d="M2323 475h11v11h-11z"/>
<path fill="#e43f24" d="M2323 485h11v11h-11z"/>
<path fill="#e43f25" d="M2323 495h11v11h-11z"/>
<path fill="#e43f26" d="M2323 505h11v11h-11z"/>
<path fill="#e43f28" d="M2323 515h11v11h-11z"/>
<path fill="#e43f2a" d="M2323 525h11v11h-11z"/>
<path fill="#e43f2d" d="M2323 535h11v11h-11z"/>
<path fill="#e43f30" d="M2323 545h11v11h-11z"/>
<path fill="#e43f34" d="M2323 555h11v11h-11z"/>
<path fill="#e43f38" d="M2323 565h11v11h-11z"/>
<path fill="#e43f3c" d="M2323 575h11v11h-11z"/>
<path fill="#e43f41" d="M2323 585h11v11h-11z"/>
<path fill="#e43f45" d="M2323 595h11v11h-11z"/>
<path fill="#e43f4a" d="M2323 605h11v11h-11z"/>
<path fill="#e43f4f" d="M2323 615h11v11h-11z"/>
<path fill="#e43f54" d="M2323 625h11v11h-11z"/>
<path fill="#e43f59" d="M2323 635h11v11h-11z"/>
<path fill="#e43f5e" d="M2323 645h11v11h-11z"/>
<path fill="#e43f63" d="M2323 655h11v11h-11z"/>
<path fill="#e43f69" d="M2323 665h11v11h-11z"/>
<path fill="#e43f6e" d="M2323 675h11v11h-11z"/>
<path fill="#e43f24" d="M2333 445h11v11h-11z"/>
<path fill="#e43f24" d="M2333 455h11v11h-11z"/>
<path fill="#e43f24" d="M2333 465h11v11h-11z"/>
<path fill="#e43f24" d="M2333 475h11v11h-11z"/>
<path fill="#e43f24" d="M2333 485h11v11h-11z"/>
<path fill="#e43f25" d="M2333 495h11v11h-11z"/>
<path fill="#e43f26" d="M2333 505h11v11h-11z"/>
<path fill="#e43f28" d="M2333 515h11v11h-11z"/>
<path fill="#e43f2a" d="M2333 525h11v11h-11z"/>
<path fill="#e43f2c" d="M2333 535h11v11h-11z"/>
<path fill="#e43f2f" d="M2333 545h11v11h-11z"/>
<path fill="#e43f33" d="M2333 555h11v11h-11z"/>
<path fill="#e43f37" d="M2333 565h11v11h-11z"/>
<path fill="#e43f3b" d="M2333 575h11v11h-11z"/>
<path fill="#e43f3f" d="M2333 585h11v11h-11z"/>
<path fill="#e43f43" d="M2333 595h11v11h-11z"/>
<path fill="#e43f48" d="M2333 605h11v11h-11z"/>
<path fill="#e43f4d" d="M2333 615h11v11h-11z"/>
<path fill="#e43f51" d="M2333 625h11v11h-11z"/>
<path fill="#e43f56" d="M2333 635h11v11h-11z"/>
<path fill="#e43f5b" d="M2333 645h11v11h-11z"/>
<path fill="#e43f61" d="M2333 655h11v11h-11z"/>
<path fill="#e43f66" d="M2333 665h11v11h-11z"/>
<path fill="#e43f24" d="M2343 445h11v11h-11z"/>
<path fill="#e43f24" d="M2343 455h11v11h-11z"/>
<path fill="#e43f24" d="M2343 465h11v11h-11z"/>
<path fill="#e43f24" d="M2343 475h11v11h-11z"/>
<path fill="#e43f24" d="M2343 485h11v11h-11z"/>
<path fill="#e43f25" d="M2343 495h11v11h-11z"/>
<path fill="#e43f26" d="M2343 505h11v11h-11z"/>
<path fill="#e43f27" d="M2343 515h11v11h-11z"/>
<path fill="#e43f29" d="M2343 525h11v11h-11z"/>
<path fill="#e43f2c" d="M2343 535h11v11h-11z"/>
<path fill="#e43f2f" d="M2343 545h11v11h-11z"/>
<path fill="#e43f32" d="M2343 555h11v11h-11z"/>
<path fill="#e43f36" d="M2343 565h11v11h-11z"/>
<path fill="#e43f39" d="M2343 575h11v11h-11z"/>
<path fill="#e43f3d" d="M2343 585h11v11h-11z"/>
<path fill="#e43f42" d="M2343 595h11v11h-11z"/>
<path fill="#e43f46" d="M2343 605h11v11h-11z"/>
<path fill="#e43f4b" d="M2343 615h11v11h-11z"/>
<path fill="#e43f4f" d="M2343 625h11v11h-11z"/>
<path fill="#e43f54" d="M2343 635h11v11h-11z"/>
<path fill="#e43f59" d="M2343 645h11v11h-11z"/>
<path fill="#e43f5e" d="M2343 655h11v11h-11z"/>
<path fill="#e43f24" d="M2353 445h11v11h-11z"/>
<path fill="#e43f24" d="M2353 455h11v11h-11z"/>
<path fill="#e43f24" d="M2353 465h11v11h-11z"/>
<path fill="#e43f24" d="M2353 475h11v11h-11z"/>
<path fill="#e43f24" d="M2353 485h11v11h-11z"/>
<path fill="#e43f25" d="M2353 495h11v11h-11z"/>
<path fill="#e43f26" d="M2353 505h11v11h-11z"/>
<path fill="#e43f27" d="M2353 515h11v11h-11z"/>
<path fill="#e43f29" d="M2353 525h11v11h-11z"/>
<path fill="#e43f2b" d="M2353 535h11v11h-11z"/>
<path fill="#e43f2e" d="M2353 545h11v11h-11z"/>
<path fill="#e43f31" d="M2353 555h11v11h-11z"/>
<path fill="#e43f34" d="M2353 565h11v11h-11z"/>
<path fill="#e43f38" d="M2353 575h11v11h-11z"/>
<path fill="#e43f3c" d="M2353 585h11v11h-11z"/>
<path fill="#e43f40" d="M2353 595h11v11h-11z"/>
<path fill="#e43f44" d="M2353 605h11v11h-11z"/>
<path fill="#e43f49" d="M2353 615h11v11h-11z"/>
<path fill="#e43f4d" d="M2353 625h11v11h-11z"/>
<path fill="#e43f52" d="M2353 635h11v11h-11z"/>
<path fill="#e43f57" d="M2353 645h11v11h-11z"/>
<path fill="#e43f24" d="M2363 455h11v11h-11z"/>
<path fill="#e43f24" d="M2363 465h11v11h-11z"/>
<path fill="#e43f24" d="M2363 475h11v11h-11z"/>
<path fill="#e43f24" d="M2363 485h11v11h-11z"/>
<path fill="#e43f25" d="M2363 495h11v11h-11z"/>
<path fill="#e43f25" d="M2363 505h11v11h-11z"/>
<path fill="#e43f27" d="M2363 515h11v11h-11z"/>
<path fill="#e43f28" d="M2363 525h11v11h-11z"/>
<path fill="#e43f2b" d="M2363 535h11v11h-11z"/>
<path fill="#e43f2d" d="M2363 545h11v11h-11z"/>
<path fill="#e43f30" d="M2363 555h11v11h-11z"/>
<path fill="#e43f33" d="M2363 565h11v11h-11z"/>
<path fill="#e43f37" d="M2363 575h11v11h-11z"/>
<path fill="#e43f3b" d="M2363 585h11v11h-11z"/>
<path fill="#e43f3f" d="M2363 595h11v11h-11z"/>
<path fill="#e43f43" d="M2363 605h11v11h-11z"/>
<path fill="#e43f47" d="M2363 615h11v11h-11z"/>
<path fill="#e43f4b" d="M2363 625h11v11h-11z"/>
<path fill="#e43f50" d="M2363 635h11v11h-11z"/>
<path fill="#e43f24" d="M2373 455h11v11h-11z"/>
<path fill="#e43f24" d="M2373 465h11v11h-11z"/>
<path fill="#e43f24" d="M2373 475h11v11h-11z"/>
<path fill="#e43f24" d="M2373 485h11v11h-11z"/>
<path fill="#e43f25" d="M2373 495h11v11h-11z"/>
<path fill="#e43f25" d="M2373 505h11v11h-11z"/>
<path fill="#e43f26" d="M2373 515h11v11h-11z"/>
<path fill="#e43f28" d="M2373 525h11v11h-11z"/>
<path fill="#e43f2a" d="M2373 535h11v11h-11z"/>
<path fill="#e43f2d" d="M2373 545h11v11h-11z"/>
<path fill="#e43f2f" d="M2373 555h11v11h-11z"/>
<path fill="#e43f32" d="M2373 565h11v11h-11z"/>
<path fill="#e43f36" d="M2373 575h11v11h-11z"/>
<path fill="#e43f39" d="M2373 585h11v11h-11z"/>
<path fill="#e43f3d" d="M2373 595h11v11h-11z"/>
<path fill="#e43f41" d="M2373 605h11v11h-11z"/>
<path fill="#e43f45" d="M2373 615h11v11h-11z"/>
<path fill="#e43f4a" d="M2373 625h11v11h-11z"/>
<path fill="#e43f24" d="M2383 455h11v11h-11z"/>
<path fill="#e43f24" d="M2383 465h11v11h-11z"/>
<path fill="#e43f24" d="M2383 475h11v11h-11z"/>
<path fill="#e43f24" d="M2383 485h11v11h-11z"/>
<path fill="#e43f25" d="M2383 495h11v11h-11z"/>
<path fill="#e43f25" d="M2383 505h11v11h-11z"/>
<path fill="#e43f26" d="M2383 515h11v11h-11z"/>
<path fill="#e43f28" d="M2383 525h11v11h-11z"/>
<path fill="#e43f2a" d="M2383 535h11v11h-11z"/>
<path fill="#e43f2c" d="M2383 545h11v11h-11z"/>
<path fill="#e43f2f" d="M2383 555h11v11h-11z"/>
<path fill="#e43f32" d="M2383 565h11v11h-11z"/>
<path fill="#e43f35" d="M2383 575h11v11h-11z"/>
<path fill="#e43f38" d="M2383 585h11v11h-11z"/>
<path fill="#e43f3c" d="M2383 595h11v11h-11z"/>
<path fill="#e43f40" d="M2383 605h11v11h-11z"/>
<path fill="#e43f24" d="M2393 455h11v11h-11z"/>
<path fill="#e43f24" d="M2393 465h11v11h-11z"/>
<path fill="#e43f24" d="M2393 475h11v11h-11z"/>
<path fill="#e43f24" d="M2393 485h11v11h-11z"/>
<path fill="#e43f24" d="M2393 495h11v11h-11z"/>
<path fill="#e43f25" d="M2393 505h11v11h-11z"/>
<path fill="#e43f26" d="M2393 515h11v11h-11z"/>
<path fill="#e43f27" d="M2393 525h11v11h-11z"/>
<path fill="#e43f29" d="M2393 535h11v11h-11z"/>
<path fill="#e43f2b" d="M2393 545h11v11h-11z"/>
<path fill="#e43f2e" d="M2393 555h11v11h-11z"/>
<path fill="#e43f31" d="M2393 565h11v11h-11z"/>
<path fill="#e43f34" d="M2393 575h11v11h-11z"/>
<path fill="#e43f37" d="M2393 585h11v11h-11z"/>
<path fill="#e43f3b" d="M2393 595h11v11h-11z"/>
<path fill="#e43f24" d="M2403 455h11v11h-11z"/>
<path fill="#e43f24" d="M2403 465h11v11h-11z"/>
<path fill="#e43f24" d="M2403 475h11v11h-11z"/>
<path fill="#e43f24" d="M2403 485h11v11h-11z"/>
<path fill="#e43f24" d="M2403 495h11v11h-11z"/>
<path fill="#e43f25" d="M2403 505h11v11h-11z"/>
<path fill="#e43f26" d="M2403 515h11v11h-11z"/>
<path fill="#e43f27" d="M2403 525h11v11h-11z"/>
<path fill="#e43f29" d="M2403 535h11v11h-11z"/>
<path fill="#e43f2b" d="M2403 545h11v11h-11z"/>
<path fill="#e43f2d" d="M2403 555h11v11h-11z"/>
<path fill="#e43f30" d="M2403 565h11v11h-11z"/>
<path fill="#e43f33" d="M2403 575h11v11h-11z"/>
<path fill="#e43f36" d="M2403 585h11v11h-11z"/>
<path fill="#e43f24" d="M2413 455h11v11h-11z"/>
<path fill="#e43f24" d="M2413 465h11v11h-11z"/>
<path fill="#e43f24" d="M2413 475h11v11h-11z"/>
<path fill="#e43f24" d="M2413 485h11v11h-11z"/>
<path fill="#e43f24" d="M2413 495h11v11h-11z"/>
<path fill="#e43f25" d="M2413 505h11v11h-11z"/>
<path fill="#e43f26" d="M2413 515h11v11h-11z"/>
<path fill="#e43f27" d="M2413 525h11v11h-11z"/>
<path fill="#e43f28" d="M2413 535h11v11h-11z"/>
<path fill="#e43f2a" d="M2413 545h11v11h-11z"/>
<path fill="#e43f2d" d="M2413 555h11v11h-11z"/>
<path fill="#e43f2f" d="M2413 565h11v11h-11z"/>
<path fill="#e43f32" d="M2413 575h11v11h-11z"/>
<path fill="#e43f24" d="M2423 455h11v11h-11z"/>
<path fill="#e43f24" d="M2423 465h11v11h-11z"/>
<path fill="#e43f24" d="M2423 475h11v11h-11z"/>
<path fill="#e43f24" d="M2423 485h11v11h-11z"/>
<path fill="#e43f24" d="M2423 495h11v11h-11z"/>
<path fill="#e43f25" d="M2423 505h11v11h-11z"/>
<path fill="#e43f25" d="M2423 515h11v11h-11z"/>
<path fill="#e43f27" d="M2423 525h11v11h-11z"/>
<path fill="#e43f28" d="M2423 535h11v11h-11z"/>
<path fill="#e43f2a" d="M2423 545h11v11h-11z"/>
<path fill="#e43f2c" d="M2423 555h11v11h-11z"/>
<path fill="#e43f2f" d="M2423 565h11v11h-11z"/>
<path fill="#e43f24" d="M2433 455h11v11h-11z"/>
<path fill="#e43f24" d="M2433 465h11v11h-11z"/>
<path fill="#e43f24" d="M2433 475h11v11h-11z"/>
<path fill="#e43f24" d="M2433 485h11v11h-11z"/>
<path fill="#e43f24" d="M2433 495h11v11h-11z"/>
<path fill="#e43f25" d="M2433 505h11v11h-11z"/>
<path fill="#e43f25" d="M2433 515h11v11h-11z"/>
<path fill="#e43f26" d="M2433 525h11v11h-11z"/>
<path fill="#e43f28" d="M2433 535h11v11h-11z"/>
<path fill="#e43f29" d="M2433 545h11v11h-11z"/>
<path fill="#e43f2c" d="M2433 555h11v11h-11z"/>
<path fill="#e43f24" d="M2443 465h11v11h-11z"/>
<path fill="#e43f24" d="M2443 475h11v11h-11z"/>
<path fill="#e43f24" d="M2443 485h11v11h-11z"/>
<path fill="#e43f24" d="M2443 495h11v11h-11z"/>
<path fill="#e43f25" d="M2443 505h11v11h-11z"/>
<path fill="#e43f25" d="M2443 515h11v11h-11z"/>
<path fill="#e43f26" d="M2443 525h11v11h-11z"/>
<path fill="#e43f27" d="M2443 535h11v11h-11z"/>
</g>
<g mask="url(#wm)"><g filter="url(#cb2)">
<path fill="#7cfa4b" d="M1914 447h6v6h-6z"/>
<path fill="#7cfa4e" d="M1914 452h6v6h-6z"/>
<path fill="#7cfa51" d="M1914 457h6v6h-6z"/>
<path fill="#7cfa56" d="M1914 462h6v6h-6z"/>
<path fill="#7dfa5c" d="M1914 467h6v6h-6z"/>
<path fill="#7dfa63" d="M1914 472h6v6h-6z"/>
<path fill="#7dfa6a" d="M1914 477h6v6h-6z"/>
<path fill="#7dfa73" d="M1914 482h6v6h-6z"/>
<path fill="#7dfa7c" d="M1914 487h6v6h-6z"/>
<path fill="#7dfa86" d="M1914 492h6v6h-6z"/>
<path fill="#7dfa90" d="M1914 497h6v6h-6z"/>
<path fill="#7efa9b" d="M1914 502h6v6h-6z"/>
<path fill="#7efaa7" d="M1914 507h6v6h-6z"/>
<path fill="#7efab3" d="M1914 512h6v6h-6z"/>
<path fill="#7efac0" d="M1914 517h6v6h-6z"/>
<path fill="#7ffacd" d="M1914 522h6v6h-6z"/>
<path fill="#7ffada" d="M1914 527h6v6h-6z"/>
<path fill="#80fae8" d="M1914 532h6v6h-6z"/>
<path fill="#80faf7" d="M1914 537h6v6h-6z"/>
<path fill="#7cf1fd" d="M1914 542h6v6h-6z"/>
<path fill="#75e2fc" d="M1914 547h6v6h-6z"/>
<path fill="#6fd5fb" d="M1914 552h6v6h-6z"/>
<path fill="#69c9fa" d="M1914 557h6v6h-6z"/>
<path fill="#64befa" d="M1914 562h6v6h-6z"/>
<path fill="#5fb4f9" d="M1914 567h6v6h-6z"/>
<path fill="#5baaf9" d="M1914 572h6v6h-6z"/>
<path fill="#57a1f9" d="M1914 577h6v6h-6z"/>
<path fill="#5399f8" d="M1914 582h6v6h-6z"/>
<path fill="#5092f8" d="M1914 587h6v6h-6z"/>
<path fill="#4d8af8" d="M1914 592h6v6h-6z"/>
<path fill="#4a84f8" d="M1914 597h6v6h-6z"/>
<path fill="#477df7" d="M1914 602h6v6h-6z"/>
<path fill="#4578f7" d="M1914 607h6v6h-6z"/>
<path fill="#7cfa4b" d="M1919 447h6v6h-6z"/>
<path fill="#7cfa4e" d="M1919 452h6v6h-6z"/>
<path fill="#7cfa51" d="M1919 457h6v6h-6z"/>
<path fill="#7cfa56" d="M1919 462h6v6h-6z"/>
<path fill="#7dfa5c" d="M1919 467h6v6h-6z"/>
<path fill="#7dfa62" d="M1919 472h6v6h-6z"/>
<path fill="#7dfa6a" d="M1919 477h6v6h-6z"/>
<path fill="#7dfa73" d="M1919 482h6v6h-6z"/>
<path fill="#7dfa7c" d="M1919 487h6v6h-6z"/>
<path fill="#7dfa86" d="M1919 492h6v6h-6z"/>
<path fill="#7dfa91" d="M1919 497h6v6h-6z"/>
<path fill="#7efa9c" d="M1919 502h6v6h-6z"/>
<path fill="#7efaa8" d="M1919 507h6v6h-6z"/>
<path fill="#7efab4" d="M1919 512h6v6h-6z"/>
<path fill="#7efac1" d="M1919 517h6v6h-6z"/>
<path fill="#7ffacf" d="M1919 522h6v6h-6z"/>
<path fill="#7ffadc" d="M1919 527h6v6h-6z"/>
<path fill="#80faeb" d="M1919 532h6v6h-6z"/>
<path fill="#80fafa" d="M1919 537h6v6h-6z"/>
<path fill="#7beefd" d="M1919 542h6v6h-6z"/>
<path fill="#74dffc" d="M1919 547h6v6h-6z"/>
<path fill="#6ed2fb" d="M1919 552h6v6h-6z"/>
<path fill="#68c6fa" d="M1919 557h6v6h-6z"/>
<path fill="#63bbfa" d="M1919 562h6v6h-6z"/>
<path fill="#5eb1f9" d="M1919 567h6v6h-6z"/>
<path fill="#5aa8f9" d="M1919 572h6v6h-6z"/>
<path fill="#569ff9" d="M1919 577h6v6h-6z"/>
<path fill="#5297f8" d="M1919 582h6v6h-6z"/>
<path fill="#4f8ff8" d="M1919 587h6v6h-6z"/>
<path fill="#4c88f8" d="M1919 592h6v6h-6z"/>
<path fill="#4981f8" d="M1919 597h6v6h-6z"/>
<path fill="#467bf7" d="M1919 602h6v6h-6z"/>
<path fill="#4475f7" d="M1919 607h6v6h-6z"/>
<path fill="#7dfa4b" d="M1924 447h6v6h-6z"/>
<path fill="#7dfa4d" d="M1924 452h6v6h-6z"/>
<path fill="#7dfa51" d="M1924 457h6v6h-6z"/>
<path fill="#7dfa56" d="M1924 462h6v6h-6z"/>
<path fill="#7dfa5c" d="M1924 467h6v6h-6z"/>
<path fill="#7dfa62" d="M1924 472h6v6h-6z"/>
<path fill="#7dfa6a" d="M1924 477h6v6h-6z"/>
<path fill="#7dfa73" d="M1924 482h6v6h-6z"/>
<path fill="#7dfa7d" d="M1924 487h6v6h-6z"/>
<path fill="#7dfa87" d="M1924 492h6v6h-6z"/>
<path fill="#7dfa92" d="M1924 497h6v6h-6z"/>
<path fill="#7efa9d" d="M1924 502h6v6h-6z"/>
<path fill="#7efaa9" d="M1924 507h6v6h-6z"/>
<path fill="#7efab6" d="M1924 512h6v6h-6z"/>
<path fill="#7ffac3" d="M1924 517h6v6h-6z"/>
<path fill="#7ffad1" d="M1924 522h6v6h-6z"/>
<path fill="#7ffadf" d="M1924 527h6v6h-6z"/>
<path fill="#80faed" d="M1924 532h6v6h-6z"/>
<path fill="#80fafd" d="M1924 537h6v6h-6z"/>
<path fill="#79ebfc" d="M1924 542h6v6h-6z"/>
<path fill="#73dcfc" d="M1924 547h6v6h-6z"/>
<path fill="#6ccffb" d="M1924 552h6v6h-6z"/>
<path fill="#67c3fa" d="M1924 557h6v6h-6z"/>
<path fill="#62b8fa" d="M1924 562h6v6h-6z"/>
<path fill="#5daef9" d="M1924 567h6v6h-6z"/>
<path fill="#59a5f9" d="M1924 572h6v6h-6z"/>
<path fill="#559cf8" d="M1924 577h6v6h-6z"/>
<path fill="#5194f8" d="M1924 582h6v6h-6z"/>
<path fill="#4e8df8" d="M1924 587h6v6h-6z"/>
<path fill="#4b86f8" d="M1924 592h6v6h-6z"/>
<path fill="#487ff7" d="M1924 597h6v6h-6z"/>
<path fill="#4579f7" d="M1924 602h6v6h-6z"/>
<path fill="#4373f7" d="M1924 607h6v6h-6z"/>
<path fill="#7ffa4b" d="M1929 447h6v6h-6z"/>
<path fill="#7ffa4d" d="M1929 452h6v6h-6z"/>
<path fill="#7efa51" d="M1929 457h6v6h-6z"/>
<path fill="#7efa55" d="M1929 462h6v6h-6z"/>
<path fill="#7efa5b" d="M1929 467h6v6h-6z"/>
<path fill="#7efa62" d="M1929 472h6v6h-6z"/>
<path fill="#7efa6a" d="M1929 477h6v6h-6z"/>
<path fill="#7efa73" d="M1929 482h6v6h-6z"/>
<path fill="#7efa7d" d="M1929 487h6v6h-6z"/>
<path fill="#7efa87" d="M1929 492h6v6h-6z"/>
<path fill="#7efa92" d="M1929 497h6v6h-6z"/>
<path fill="#7efa9e" d="M1929 502h6v6h-6z"/>
<path fill="#7efaaa" d="M1929 507h6v6h-6z"/>
<path fill="#7efab7" d="M1929 512h6v6h-6z"/>
<path fill="#7ffac5" d="M1929 517h6v6h-6z"/>
<path fill="#7ffad3" d="M1929 522h6v6h-6z"/>
<path fill="#80fae1" d="M1929 527h6v6h-6z"/>
<path fill="#80faf0" d="M1929 532h6v6h-6z"/>
<path fill="#7ff7fd" d="M1929 537h6v6h-6z"/>
<path fill="#78e8fc" d="M1929 542h6v6h-6z"/>
<path fill="#71d9fb" d="M1929 547h6v6h-6z"/>
<path fill="#6bccfb" d="M1929 552h6v6h-6z"/>
<path fill="#65c1fa" d="M1929 557h6v6h-6z"/>
<path fill="#60b6fa" d="M1929 562h6v6h-6z"/>
<path fill="#5cacf9" d="M1929 567h6v6h-6z"/>
<path fill="#58a2f9" d="M1929 572h6v6h-6z"/>
<path fill="#549af8" d="M1929 577h6v6h-6z"/>
<path fill="#5092f8" d="M1929 582h6v6h-6z"/>
<path fill="#4d8af8" d="M1929 587h6v6h-6z"/>
<path fill="#4a83f8" d="M1929 592h6v6h-6z"/>
<path fill="#477df7" d="M1929 597h6v6h-6z"/>
<path fill="#4477f7" d="M1929 602h6v6h-6z"/>
<path fill="#4271f7" d="M1929 607h6v6h-6z"/>
<path fill="#81fa4b" d="M1934 447h6v6h-6z"/>
<path fill="#81fa4d" d="M1934 452h6v6h-6z"/>
<path fill="#81fa51" d="M1934 457h6v6h-6z"/>
<path fill="#81fa55" d="M1934 462h6v6h-6z"/>
<path fill="#80fa5b" d="M1934 467h6v6h-6z"/>
<path fill="#80fa62" d="M1934 472h6v6h-6z"/>
<path fill="#80fa6b" d="M1934 477h6v6h-6z"/>
<path fill="#80fa74" d="M1934 482h6v6h-6z"/>
<path fill="#80fa7d" d="M1934 487h6v6h-6z"/>
<path fill="#80fa88" d="M1934 492h6v6h-6z"/>
<path fill="#80fa93" d="M1934 497h6v6h-6z"/>
<path fill="#80fa9f" d="M1934 502h6v6h-6z"/>
<path fill="#80faac" d="M1934 507h6v6h-6z"/>
<path fill="#80fab9" d="M1934 512h6v6h-6z"/>
<path fill="#80fac6" d="M1934 517h6v6h-6z"/>
<path fill="#80fad5" d="M1934 522h6v6h-6z"/>
<path fill="#80fae3" d="M1934 527h6v6h-6z"/>
<path fill="#81faf3" d="M1934 532h6v6h-6z"/>
<path fill="#7ef4fd" d="M1934 537h6v6h-6z"/>
<path fill="#77e5fc" d="M1934 542h6v6h-6z"/>
<path fill="#70d6fb" d="M1934 547h6v6h-6z"/>
<path fill="#6acafb" d="M1934 552h6v6h-6z"/>
<path fill="#64befa" d="M1934 557h6v6h-6z"/>
<path fill="#5fb3f9" d="M1934 562h6v6h-6z"/>
<path fill="#5ba9f9" d="M1934 567h6v6h-6z"/>
<path fill="#56a0f9" d="M1934 572h6v6h-6z"/>
<path fill="#5397f8" d="M1934 577h6v6h-6z"/>
<path fill="#4f8ff8" d="M1934 582h6v6h-6z"/>
<path fill="#4c88f8" d="M1934 587h6v6h-6z"/>
<path fill="#4981f7" d="M1934 592h6v6h-6z"/>
<path fill="#467af7" d="M1934 597h6v6h-6z"/>
<path fill="#4374f7" d="M1934 602h6v6h-6z"/>
<path fill="#416ff7" d="M1934 607h6v6h-6z"/>
<path fill="#85fa4b" d="M1939 447h6v6h-6z"/>
<path fill="#85fa4d" d="M1939 452h6v6h-6z"/>
<path fill="#84fa50" d="M1939 457h6v6h-6z"/>
<path fill="#84fa55" d="M1939 462h6v6h-6z"/>
<path fill="#84fa5b" d="M1939 467h6v6h-6z"/>
<path fill="#83fa62" d="M1939 472h6v6h-6z"/>
<path fill="#83fa6b" d="M1939 477h6v6h-6z"/>
<path fill="#83fa74" d="M1939 482h6v6h-6z"/>
<path fill="#83fa7e" d="M1939 487h6v6h-6z"/>
<path fill="#83fa89" d="M1939 492h6v6h-6z"/>
<path fill="#83fa94" d="M1939 497h6v6h-6z"/>
<path fill="#82faa0" d="M1939 502h6v6h-6z"/>
<path fill="#82faad" d="M1939 507h6v6h-6z"/>
<path fill="#82faba" d="M1939 512h6v6h-6z"/>
<path fill="#82fac8" d="M1939 517h6v6h-6z"/>
<path fill="#83fad7" d="M1939 522h6v6h-6z"/>
<path fill="#83fae6" d="M1939 527h6v6h-6z"/>
<path fill="#83faf6" d="M1939 532h6v6h-6z"/>
<path fill="#7ff1fd" d="M1939 537h6v6h-6z"/>
<path fill="#77e1fc" d="M1939 542h6v6h-6z"/>
<path fill="#70d3fb" d="M1939 547h6v6h-6z"/>
<path fill="#6ac7fa" d="M1939 552h6v6h-6z"/>
<path fill="#64bbfa" d="M1939 557h6v6h-6z"/>
<path fill="#5fb0f9" d="M1939 562h6v6h-6z"/>
<path fill="#5aa6f9" d="M1939 567h6v6h-6z"/>
<path fill="#569df8" d="M1939 572h6v6h-6z"/>
<path fill="#5295f8" d="M1939 577h6v6h-6z"/>
<path fill="#4e8df8" d="M1939 582h6v6h-6z"/>
<path fill="#4b85f8" d="M1939 587h6v6h-6z"/>
<path fill="#487ef7" d="M1939 592h6v6h-6z"/>
<path fill="#4578f7" d="M1939 597h6v6h-6z"/>
<path fill="#4372f7" d="M1939 602h6v6h-6z"/>
<path fill="#406cf7" d="M1939 607h6v6h-6z"/>
<path fill="#89fa4b" d="M1944 447h6v6h-6z"/>
<path fill="#89fa4d" d="M1944 452h6v6h-6z"/>
<path fill="#89fa50" d="M1944 457h6v6h-6z"/>
<path fill="#89fa55" d="M1944 462h6v6h-6z"/>
<path fill="#88fa5b" d="M1944 467h6v6h-6z"/>
<path fill="#88fa63" d="M1944 472h6v6h-6z"/>
<path fill="#88fa6b" d="M1944 477h6v6h-6z"/>
<path fill="#87fa74" d="M1944 482h6v6h-6z"/>
<path fill="#87fa7e" d="M1944 487h6v6h-6z"/>
<path fill="#87fa89" d="M1944 492h6v6h-6z"/>
<path fill="#87fa95" d="M1944 497h6v6h-6z"/>
<path fill="#87faa1" d="M1944 502h6v6h-6z"/>
<path fill="#87faae" d="M1944 507h6v6h-6z"/>
<path fill="#87fabc" d="M1944 512h6v6h-6z"/>
<path fill="#87faca" d="M1944 517h6v6h-6z"/>
<path fill="#87fad9" d="M1944 522h6v6h-6z"/>
<path fill="#87fae9" d="M1944 527h6v6h-6z"/>
<path fill="#87faf9" d="M1944 532h6v6h-6z"/>
<path fill="#81eefd" d="M1944 537h6v6h-6z"/>
<path fill="#78defc" d="M1944 542h6v6h-6z"/>
<path fill="#71d0fb" d="M1944 547h6v6h-6z"/>
<path fill="#6bc4fa" d="M1944 552h6v6h-6z"/>
<path fill="#65b8fa" d="M1944 557h6v6h-6z"/>
<path fill="#5fadf9" d="M1944 562h6v6h-6z"/>
<path fill="#5aa4f9" d="M1944 567h6v6h-6z"/>
<path fill="#569af8" d="M1944 572h6v6h-6z"/>
<path fill="#5292f8" d="M1944 577h6v6h-6z"/>
<path fill="#4e8af8" d="M1944 582h6v6h-6z"/>
<path fill="#4b83f8" d="M1944 587h6v6h-6z"/>
<path fill="#487cf7" d="M1944 592h6v6h-6z"/>
<path fill="#4576f7" d="M1944 597h6v6h-6z"/>
<path fill="#4270f7" d="M1944 602h6v6h-6z"/>
<path fill="#406af7" d="M1944 607h6v6h-6z"/>
<path fill="#8ffa4b" d="M1949 447h6v6h-6z"/>
<path fill="#8ffa4d" d="M1949 452h6v6h-6z"/>
<path fill="#8ffa50" d="M1949 457h6v6h-6z"/>
<path fill="#8efa55" d="M1949 462h6v6h-6z"/>
<path fill="#8efa5b" d="M1949 467h6v6h-6z"/>
<path fill="#8efa63" d="M1949 472h6v6h-6z"/>
<path fill="#8dfa6b" d="M1949 477h6v6h-6z"/>
<path fill="#8dfa75" d="M1949 482h6v6h-6z"/>
<path fill="#8dfa7f" d="M1949 487h6v6h-6z"/>
<path fill="#8dfa8a" d="M1949 492h6v6h-6z"/>
<path fill="#8dfa96" d="M1949 497h6v6h-6z"/>
<path fill="#8cfaa3" d="M1949 502h6v6h-6z"/>
<path fill="#8cfab0" d="M1949 507h6v6h-6z"/>
<path fill="#8cfabe" d="M1949 512h6v6h-6z"/>
<path fill="#8cfacc" d="M1949 517h6v6h-6z"/>
<path fill="#8cfadc" d="M1949 522h6v6h-6z"/>
<path fill="#8cfaeb" d="M1949 527h6v6h-6z"/>
<path fill="#8cfafc" d="M1949 532h6v6h-6z"/>
<path fill="#84ebfd" d="M1949 537h6v6h-6z"/>
<path fill="#7cdbfc" d="M1949 542h6v6h-6z"/>
<path fill="#74cdfb" d="M1949 547h6v6h-6z"/>
<path fill="#6dc1fa" d="M1949 552h6v6h-6z"/>
<path fill="#67b5fa" d="M1949 557h6v6h-6z"/>
<path fill="#61abf9" d="M1949 562h6v6h-6z"/>
<path fill="#5ca1f9" d="M1949 567h6v6h-6z"/>
<path fill="#5798f8" d="M1949 572h6v6h-6z"/>
<path fill="#538ff8" d="M1949 577h6v6h-6z"/>
<path fill="#4f88f8" d="M1949 582h6v6h-6z"/>
<path fill="#4c80f7" d="M1949 587h6v6h-6z"/>
<path fill="#487af7" d="M1949 592h6v6h-6z"/>
<path fill="#4573f7" d="M1949 597h6v6h-6z"/>
<path fill="#436df7" d="M1949 602h6v6h-6z"/>
<path fill="#4068f7" d="M1949 607h6v6h-6z"/>
<path fill="#96fa4b" d="M1954 447h6v6h-6z"/>
<path fill="#96fa4d" d="M1954 452h6v6h-6z"/>
<path fill="#95fa50" d="M1954 457h6v6h-6z"/>
<path fill="#95fa55" d="M1954 462h6v6h-6z"/>
<path fill="#95fa5b" d="M1954 467h6v6h-6z"/>
<path fill="#95fa63" d="M1954 472h6v6h-6z"/>
<path fill="#95fa6b" d="M1954 477h6v6h-6z"/>
<path fill="#94fa75" d="M1954 482h6v6h-6z"/>
<path fill="#94fa80" d="M1954 487h6v6h-6z"/>
<path fill="#94fa8b" d="M1954 492h6v6h-6z"/>
<path fill="#94fa97" d="M1954 497h6v6h-6z"/>
<path fill="#94faa4" d="M1954 502h6v6h-6z"/>
<path fill="#94fab2" d="M1954 507h6v6h-6z"/>
<path fill="#93fac0" d="M1954 512h6v6h-6z"/>
<path fill="#93facf" d="M1954 517h6v6h-6z"/>
<path fill="#93fade" d="M1954 522h6v6h-6z"/>
<path fill="#94faee" d="M1954 527h6v6h-6z"/>
<path fill="#93f9fd" d="M1954 532h6v6h-6z"/>
<path fill="#89e8fc" d="M1954 537h6v6h-6z"/>
<path fill="#80d8fb" d="M1954 542h6v6h-6z"/>
<path fill="#78cbfb" d="M1954 547h6v6h-6z"/>
<path fill="#71befa" d="M1954 552h6v6h-6z"/>
<path fill="#6ab2f9" d="M1954 557h6v6h-6z"/>
<path fill="#65a8f9" d="M1954 562h6v6h-6z"/>
<path fill="#5f9ef9" d="M1954 567h6v6h-6z"/>
<path fill="#5a95f8" d="M1954 572h6v6h-6z"/>
<path fill="#568df8" d="M1954 577h6v6h-6z"/>
<path fill="#5285f8" d="M1954 582h6v6h-6z"/>
<path fill="#4e7ef7" d="M1954 587h6v6h-6z"/>
<path fill="#4a77f7" d="M1954 592h6v6h-6z"/>
<path fill="#4771f7" d="M1954 597h6v6h-6z"/>
<path fill="#446bf7" d="M1954 602h6v6h-6z"/>
<path fill="#4166f7" d="M1954 607h6v6h-6z"/>
<path fill="#9efb4b" d="M1959 447h6v6h-6z"/>
<path fill="#9efb4d" d="M1959 452h6v6h-6z"/>
<path fill="#9efb50" d="M1959 457h6v6h-6z"/>
<path fill="#9dfb55" d="M1959 462h6v6h-6z"/>
<path fill="#9dfb5b" d="M1959 467h6v6h-6z"/>
<path fill="#9dfb63" d="M1959 472h6v6h-6z"/>
<path fill="#9dfb6c" d="M1959 477h6v6h-6z"/>
<path fill="#9dfb76" d="M1959 482h6v6h-6z"/>
<path fill="#9dfa80" d="M1959 487h6v6h-6z"/>
<path fill="#9dfa8c" d="M1959 492h6v6h-6z"/>
<path fill="#9cfa98" d="M1959 497h6v6h-6z"/>
<path fill="#9cfaa5" d="M1959 502h6v6h-6z"/>
<path fill="#9cfab3" d="M1959 507h6v6h-6z"/>
<path fill="#9cfac2" d="M1959 512h6v6h-6z"/>
<path fill="#9cfad1" d="M1959 517h6v6h-6z"/>
<path fill="#9dfae1" d="M1959 522h6v6h-6z"/>
<path fill="#9dfaf1" d="M1959 527h6v6h-6z"/>
<path fill="#9af6fd" d="M1959 532h6v6h-6z"/>
<path fill="#8fe5fc" d="M1959 537h6v6h-6z"/>
<path fill="#86d5fb" d="M1959 542h6v6h-6z"/>
<path fill="#7ec8fb" d="M1959 547h6v6h-6z"/>
<path fill="#76bbfa" d="M1959 552h6v6h-6z"/>
<path fill="#6fb0f9" d="M1959 557h6v6h-6z"/>
<path fill="#69a5f9" d="M1959 562h6v6h-6z"/>
<path fill="#639cf8" d="M1959 567h6v6h-6z"/>
<path fill="#5e93f8" d="M1959 572h6v6h-6z"/>
<path fill="#598af8" d="M1959 577h6v6h-6z"/>
<path fill="#5583f8" d="M1959 582h6v6h-6z"/>
<path fill="#517cf7" d="M1959 587h6v6h-6z"/>
<path fill="#4d75f7" d="M1959 592h6v6h-6z"/>
<path fill="#4a6ff7" d="M1959 597h6v6h-6z"/>
<path fill="#4769f7" d="M1959 602h6v6h-6z"/>
<path fill="#4463f7" d="M1959 607h6v6h-6z"/>
<path fill="#a7fb4c" d="M1964 447h6v6h-6z"/>
<path fill="#a7fb4d" d="M1964 452h6v6h-6z"/>
<path fill="#a7fb51" d="M1964 457h6v6h-6z"/>
<path fill="#a7fb55" d="M1964 462h6v6h-6z"/>
<path fill="#a7fb5c" d="M1964 467h6v6h-6z"/>
<path fill="#a6fb63" d="M1964 472h6v6h-6z"/>
<path fill="#a6fb6c" d="M1964 477h6v6h-6z"/>
<path fill="#a6fb76" d="M1964 482h6v6h-6z"/>
<path fill="#a6fb81" d="M1964 487h6v6h-6z"/>
<path fill="#a6fb8d" d="M1964 492h6v6h-6z"/>
<path fill="#a6fb99" d="M1964 497h6v6h-6z"/>
<path fill="#a7fba7" d="M1964 502h6v6h-6z"/>
<path fill="#a7fbb5" d="M1964 507h6v6h-6z"/>
<path fill="#a7fbc4" d="M1964 512h6v6h-6z"/>
<path fill="#a7fbd3" d="M1964 517h6v6h-6z"/>
<path fill="#a7fbe3" d="M1964 522h6v6h-6z"/>
<path fill="#a7fbf4" d="M1964 527h6v6h-6z"/>
<path fill="#a2f2fd" d="M1964 532h6v6h-6z"/>
<path fill="#97e2fc" d="M1964 537h6v6h-6z"/>
<path fill="#8dd2fb" d="M1964 542h6v6h-6z"/>
<path fill="#85c5fa" d="M1964 547h6v6h-6z"/>
<path fill="#7db8fa" d="M1964 552h6v6h-6z"/>
<path fill="#75adf9" d="M1964 557h6v6h-6z"/>
<path fill="#6fa3f9" d="M1964 562h6v6h-6z"/>
<path fill="#6999f8" d="M1964 567h6v6h-6z"/>
<path fill="#6390f8" d="M1964 572h6v6h-6z"/>
<path fill="#5e88f8" d="M1964 577h6v6h-6z"/>
<path fill="#5a80f8" d="M1964 582h6v6h-6z"/>
<path fill="#5579f7" d="M1964 587h6v6h-6z"/>
<path fill="#5173f7" d="M1964 592h6v6h-6z"/>
<path fill="#4e6cf7" d="M1964 597h6v6h-6z"/>
<path fill="#4a67f7" d="M1964 602h6v6h-6z"/>
<path fill="#4761f7" d="M1964 607h6v6h-6z"/>
<path fill="#b1fb4c" d="M1969 447h6v6h-6z"/>
<path fill="#b1fb4e" d="M1969 452h6v6h-6z"/>
<path fill="#b1fb51" d="M1969 457h6v6h-6z"/>
<path fill="#b1fb56" d="M1969 462h6v6h-6z"/>
<path fill="#b1fb5c" d="M1969 467h6v6h-6z"/>
<path fill="#b1fb64" d="M1969 472h6v6h-6z"/>
<path fill="#b1fb6d" d="M1969 477h6v6h-6z"/>
<path fill="#b1fb77" d="M1969 482h6v6h-6z"/>
<path fill="#b1fb82" d="M1969 487h6v6h-6z"/>
<path fill="#b2fb8e" d="M1969 492h6v6h-6z"/>
<path fill="#b2fb9b" d="M1969 497h6v6h-6z"/>
<path fill="#b2fba8" d="M1969 502h6v6h-6z"/>
<path fill="#b2fbb7" d="M1969 507h6v6h-6z"/>
<path fill="#b3fbc6" d="M1969 512h6v6h-6z"/>
<path fill="#b3fbd6" d="M1969 517h6v6h-6z"/>
<path fill="#b3fbe6" d="M1969 522h6v6h-6z"/>
<path fill="#b4fbf8" d="M1969 527h6v6h-6z"/>
<path fill="#aceffd" d="M1969 532h6v6h-6z"/>
<path fill="#a0dffc" d="M1969 537h6v6h-6z"/>
<path fill="#96d0fb" d="M1969 542h6v6h-6z"/>
<path fill="#8dc2fa" d="M1969 547h6v6h-6z"/>
<path fill="#84b6fa" d="M1969 552h6v6h-6z"/>
<path fill="#7daaf9" d="M1969 557h6v6h-6z"/>
<path fill="#76a0f9" d="M1969 562h6v6h-6z"/>
<path fill="#6f96f8" d="M1969 567h6v6h-6z"/>
<path fill="#698ef8" d="M1969 572h6v6h-6z"/>
<path fill="#6485f8" d="M1969 577h6v6h-6z"/>
<path fill="#5f7ef7" d="M1969 582h6v6h-6z"/>
<path fill="#5b77f7" d="M1969 587h6v6h-6z"/>
<path fill="#5670f7" d="M1969 592h6v6h-6z"/>
<path fill="#536af7" d="M1969 597h6v6h-6z"/>
<path fill="#4f65f7" d="M1969 602h6v6h-6z"/>
<path fill="#4c5ff7" d="M1969 607h6v6h-6z"/>
<path fill="#bcfc4d" d="M1974 447h6v6h-6z"/>
<path fill="#bcfc4e" d="M1974 452h6v6h-6z"/>
<path fill="#bcfc51" d="M1974 457h6v6h-6z"/>
<path fill="#bcfc56" d="M1974 462h6v6h-6z"/>
<path fill="#bdfc5c" d="M1974 467h6v6h-6z"/>
<path fill="#bdfc64" d="M1974 472h6v6h-6z"/>
<path fill="#bdfc6d" d="M1974 477h6v6h-6z"/>
<path fill="#bdfc77" d="M1974 482h6v6h-6z"/>
<path fill="#befc83" d="M1974 487h6v6h-6z"/>
<path fill="#befc8f" d="M1974 492h6v6h-6z"/>
<path fill="#bffc9c" d="M1974 497h6v6h-6z"/>
<path fill="#bffcaa" d="M1974 502h6v6h-6z"/>
<path fill="#bffcb9" d="M1974 507h6v6h-6z"/>
<path fill="#c0fcc8" d="M1974 512h6v6h-6z"/>
<path fill="#c1fcd8" d="M1974 517h6v6h-6z"/>
<path fill="#c1fce9" d="M1974 522h6v6h-6z"/>
<path fill="#c2fcfb" d="M1974 527h6v6h-6z"/>
<path fill="#b7ecfd" d="M1974 532h6v6h-6z"/>
<path fill="#abdcfc" d="M1974 537h6v6h-6z"/>
<path fill="#a0cdfb" d="M1974 542h6v6h-6z"/>
<path fill="#96bffa" d="M1974 547h6v6h-6z"/>
<path fill="#8db3fa" d="M1974 552h6v6h-6z"/>
<path fill="#85a8f9" d="M1974 557h6v6h-6z"/>
<path fill="#7d9df9" d="M1974 562h6v6h-6z"/>
<path fill="#7794f8" d="M1974 567h6v6h-6z"/>
<path fill="#708bf8" d="M1974 572h6v6h-6z"/>
<path fill="#6b83f8" d="M1974 577h6v6h-6z"/>
<path fill="#667cf7" d="M1974 582h6v6h-6z"/>
<path fill="#6175f7" d="M1974 587h6v6h-6z"/>
<path fill="#5c6ef7" d="M1974 592h6v6h-6z"/>
<path fill="#5868f7" d="M1974 597h6v6h-6z"/>
<path fill="#5462f7" d="M1974 602h6v6h-6z"/>
<path fill="#515df7" d="M1974 607h6v6h-6z"/>
<path fill="#c7fc4d" d="M1979 447h6v6h-6z"/>
<path fill="#c8fc4f" d="M1979 452h6v6h-6z"/>
<path fill="#c8fc52" d="M1979 457h6v6h-6z"/>
<path fill="#c9fc56" d="M1979 462h6v6h-6z"/>
<path fill="#c9fc5d" d="M1979 467h6v6h-6z"/>
<path fill="#cafc64" d="M1979 472h6v6h-6z"/>
<path fill="#cafc6e" d="M1979 477h6v6h-6z"/>
<path fill="#cbfc78" d="M1979 482h6v6h-6z"/>
<path fill="#cbfc84" d="M1979 487h6v6h-6z"/>
<path fill="#ccfc90" d="M1979 492h6v6h-6z"/>
<path fill="#ccfc9d" d="M1979 497h6v6h-6z"/>
<path fill="#cdfcac" d="M1979 502h6v6h-6z"/>
<path fill="#cefcbb" d="M1979 507h6v6h-6z"/>
<path fill="#cffccb" d="M1979 512h6v6h-6z"/>
<path fill="#d0fddb" d="M1979 517h6v6h-6z"/>
<path fill="#d0fdec" d="M1979 522h6v6h-6z"/>
<path fill="#d1fcfe" d="M1979 527h6v6h-6z"/>
<path fill="#c3eafd" d="M1979 532h6v6h-6z"/>
<path fill="#b6d9fc" d="M1979 537h6v6h-6z"/>
<path fill="#aacafb" d="M1979 542h6v6h-6z"/>
<path fill="#a0bcfa" d="M1979 547h6v6h-6z"/>
<path fill="#96b0fa" d="M1979 552h6v6h-6z"/>
<path fill="#8ea5f9" d="M1979 557h6v6h-6z"/>
<path fill="#869bf9" d="M1979 562h6v6h-6z"/>
<path fill="#7f91f8" d="M1979 567h6v6h-6z"/>
<path fill="#7889f8" d="M1979 572h6v6h-6z"/>
<path fill="#7281f8" d="M1979 577h6v6h-6z"/>
<path fill="#6d79f7" d="M1979 582h6v6h-6z"/>
<path fill="#6872f7" d="M1979 587h6v6h-6z"/>
<path fill="#636cf7" d="M1979 592h6v6h-6z"/>
<path fill="#5e66f7" d="M1979 597h6v6h-6z"/>
<path fill="#5a60f7" d="M1979 602h6v6h-6z"/>
<path fill="#575bf7" d="M1979 607h6v6h-6z"/>
<path fill="#d4fd4e" d="M1984 447h6v6h-6z"/>
<path fill="#d5fd4f" d="M1984 452h6v6h-6z"/>
<path fill="#d5fd52" d="M1984 457h6v6h-6z"/>
<path fill="#d6fd57" d="M1984 462h6v6h-6z"/>
<path fill="#d7fd5d" d="M1984 467h6v6h-6z"/>
<path fill="#d7fd65" d="M1984 472h6v6h-6z"/>
<path fill="#d8fd6e" d="M1984 477h6v6h-6z"/>
<path fill="#d9fd79" d="M1984 482h6v6h-6z"/>
<path fill="#dafd85" d="M1984 487h6v6h-6z"/>
<path fill="#dbfd91" d="M1984 492h6v6h-6z"/>
<path fill="#dcfd9f" d="M1984 497h6v6h-6z"/>
<path fill="#ddfdae" d="M1984 502h6v6h-6z"/>
<path fill="#defdbd" d="M1984 507h6v6h-6z"/>
<path fill="#dffdcd" d="M1984 512h6v6h-6z"/>
<path fill="#e0fdde" d="M1984 517h6v6h-6z"/>
<path fill="#e1fdf0" d="M1984 522h6v6h-6z"/>
<path fill="#dff9fe" d="M1984 527h6v6h-6z"/>
<path fill="#cfe7fd" d="M1984 532h6v6h-6z"/>
<path fill="#c2d6fc" d="M1984 537h6v6h-6z"/>
<path fill="#b5c7fb" d="M1984 542h6v6h-6z"/>
<path fill="#aabafa" d="M1984 547h6v6h-6z"/>
<path fill="#a0aefa" d="M1984 552h6v6h-6z"/>
<path fill="#97a3f9" d="M1984 557h6v6h-6z"/>
<path fill="#8f98f9" d="M1984 562h6v6h-6z"/>
<path fill="#888ff8" d="M1984 567h6v6h-6z"/>
<path fill="#8186f8" d="M1984 572h6v6h-6z"/>
<path fill="#7a7ef8" d="M1984 577h6v6h-6z"/>
<path fill="#7477f7" d="M1984 582h6v6h-6z"/>
<path fill="#6f70f7" d="M1984 587h6v6h-6z"/>
<path fill="#6a6af7" d="M1984 592h6v6h-6z"/>
<path fill="#6564f7" d="M1984 597h6v6h-6z"/>
<path fill="#615ef7" d="M1984 602h6v6h-6z"/>
<path fill="#5d59f7" d="M1984 607h6v6h-6z"/>
<path fill="#e2fd4f" d="M1989 447h6v6h-6z"/>
<path fill="#e3fe50" d="M1989 452h6v6h-6z"/>
<path fill="#e3fe53" d="M1989 457h6v6h-6z"/>
<path fill="#e4fe57" d="M1989 462h6v6h-6z"/>
<path fill="#e5fe5e" d="M1989 467h6v6h-6z"/>
<path fill="#e6fe66" d="M1989 472h6v6h-6z"/>
<path fill="#e7fe6f" d="M1989 477h6v6h-6z"/>
<path fill="#e8fe7a" d="M1989 482h6v6h-6z"/>
<path fill="#e9fe86" d="M1989 487h6v6h-6z"/>
<path fill="#ebfe93" d="M1989 492h6v6h-6z"/>
<path fill="#ecfea1" d="M1989 497h6v6h-6z"/>
<path fill="#edfeaf" d="M1989 502h6v6h-6z"/>
<path fill="#effebf" d="M1989 507h6v6h-6z"/>
<path fill="#f0fed0" d="M1989 512h6v6h-6z"/>
<path fill="#f2fee1" d="M1989 517h6v6h-6z"/>
<path fill="#f3fef3" d="M1989 522h6v6h-6z"/>
<path fill="#edf6fe" d="M1989 527h6v6h-6z"/>
<path fill="#dde4fd" d="M1989 532h6v6h-6z"/>
<path fill="#ced3fc" d="M1989 537h6v6h-6z"/>
<path fill="#c1c5fb" d="M1989 542h6v6h-6z"/>
<path fill="#b6b7fa" d="M1989 547h6v6h-6z"/>
<path fill="#ababfa" d="M1989 552h6v6h-6z"/>
<path fill="#a2a0f9" d="M1989 557h6v6h-6z"/>
<path fill="#9996f9" d="M1989 562h6v6h-6z"/>
<path fill="#918df8" d="M1989 567h6v6h-6z"/>
<path fill="#8a84f8" d="M1989 572h6v6h-6z"/>
<path fill="#837cf8" d="M1989 577h6v6h-6z"/>
<path fill="#7d75f7" d="M1989 582h6v6h-6z"/>
<path fill="#776ef7" d="M1989 587h6v6h-6z"/>
<path fill="#7168f7" d="M1989 592h6v6h-6z"/>
<path fill="#6d62f7" d="M1989 597h6v6h-6z"/>
<path fill="#685cf7" d="M1989 602h6v6h-6z"/>
<path fill="#6457f7" d="M1989 607h6v6h-6z"/>
<path fill="#f0fe50" d="M1994 447h6v6h-6z"/>
<path fill="#f1fe51" d="M1994 452h6v6h-6z"/>
<path fill="#f2fe53" d="M1994 457h6v6h-6z"/>
<path fill="#f4fe58" d="M1994 462h6v6h-6z"/>
<path fill="#f5ff5e" d="M1994 467h6v6h-6z"/>
<path fill="#f6ff66" d="M1994 472h6v6h-6z"/>
<path fill="#f7ff70" d="M1994 477h6v6h-6z"/>
<path fill="#f9ff7b" d="M1994 482h6v6h-6z"/>
<path fill="#faff87" d="M1994 487h6v6h-6z"/>
<path fill="#fcff94" d="M1994 492h6v6h-6z"/>
<path fill="#fdffa2" d="M1994 497h6v6h-6z"/>
<path fill="#fefeb1" d="M1994 502h6v6h-6z"/>
<path fill="#fdfcbf" d="M1994 507h6v6h-6z"/>
<path fill="#fdface" d="M1994 512h6v6h-6z"/>
<path fill="#fdf8de" d="M1994 517h6v6h-6z"/>
<path fill="#fdf6ee" d="M1994 522h6v6h-6z"/>
<path fill="#fcf4fe" d="M1994 527h6v6h-6z"/>
<path fill="#ebe1fd" d="M1994 532h6v6h-6z"/>
<path fill="#dcd1fc" d="M1994 537h6v6h-6z"/>
<path fill="#cec2fb" d="M1994 542h6v6h-6z"/>
<path fill="#c2b5fa" d="M1994 547h6v6h-6z"/>
<path fill="#b7a9fa" d="M1994 552h6v6h-6z"/>
<path fill="#ac9ef9" d="M1994 557h6v6h-6z"/>
<path fill="#a394f9" d="M1994 562h6v6h-6z"/>
<path fill="#9b8af8" d="M1994 567h6v6h-6z"/>
<path fill="#9382f8" d="M1994 572h6v6h-6z"/>
<path fill="#8c7af8" d="M1994 577h6v6h-6z"/>
<path fill="#8573f7" d="M1994 582h6v6h-6z"/>
<path fill="#7f6cf7" d="M1994 587h6v6h-6z"/>
<path fill="#7966f7" d="M1994 592h6v6h-6z"/>
<path fill="#7460f7" d="M1994 597h6v6h-6z"/>
<path fill="#6f5bf7" d="M1994 602h6v6h-6z"/>
<path fill="#6b55f7" d="M1994 607h6v6h-6z"/>
<path fill="#fdfc50" d="M1999 447h6v6h-6z"/>
<path fill="#fcfb50" d="M1999 452h6v6h-6z"/>
<path fill="#fcf952" d="M1999 457h6v6h-6z"/>
<path fill="#fcf756" d="M1999 462h6v6h-6z"/>
<path fill="#fbf65b" d="M1999 467h6v6h-6z"/>
<path fill="#fbf462" d="M1999 472h6v6h-6z"/>
<path fill="#fbf26b" d="M1999 477h6v6h-6z"/>
<path fill="#faf175" d="M1999 482h6v6h-6z"/>
<path fill="#faef7f" d="M1999 487h6v6h-6z"/>
<path fill="#faed8b" d="M1999 492h6v6h-6z"/>
<path fill="#faeb97" d="M1999 497h6v6h-6z"/>
<path fill="#f9e9a4" d="M1999 502h6v6h-6z"/>
<path fill="#f9e7b1" d="M1999 507h6v6h-6z"/>
<path fill="#f9e5bf" d="M1999 512h6v6h-6z"/>
<path fill="#f9e3cd" d="M1999 517h6v6h-6z"/>
<path fill="#f8e1dc" d="M1999 522h6v6h-6z"/>
<path fill="#f8dfeb" d="M1999 527h6v6h-6z"/>
<path fill="#f8ddfb" d="M1999 532h6v6h-6z"/>
<path fill="#eacefc" d="M1999 537h6v6h-6z"/>
<path fill="#dbc0fb" d="M1999 542h6v6h-6z"/>
<path fill="#ceb2fa" d="M1999 547h6v6h-6z"/>
<path fill="#c2a6fa" d="M1999 552h6v6h-6z"/>
<path fill="#b89bf9" d="M1999 557h6v6h-6z"/>
<path fill="#ae91f9" d="M1999 562h6v6h-6z"/>
<path fill="#a588f8" d="M1999 567h6v6h-6z"/>
<path fill="#9d80f8" d="M1999 572h6v6h-6z"/>
<path fill="#9578f8" d="M1999 577h6v6h-6z"/>
<path fill="#8e71f7" d="M1999 582h6v6h-6z"/>
<path fill="#886af7" d="M1999 587h6v6h-6z"/>
<path fill="#8264f7" d="M1999 592h6v6h-6z"/>
<path fill="#7c5ef7" d="M1999 597h6v6h-6z"/>
<path fill="#7759f7" d="M1999 602h6v6h-6z"/>
<path fill="#7254f7" d="M1999 607h6v6h-6z"/>
<path fill="#f9eb4b" d="M2004 447h6v6h-6z"/>
<path fill="#f9e94b" d="M2004 452h6v6h-6z"/>
<path fill="#f8e84d" d="M2004 457h6v6h-6z"/>
<path fill="#f8e650" d="M2004 462h6v6h-6z"/>
<path fill="#f8e455" d="M2004 467h6v6h-6z"/>
<path fill="#f7e25c" d="M2004 472h6v6h-6z"/>
<path fill="#f7e164" d="M2004 477h6v6h-6z"/>
<path fill="#f7df6c" d="M2004 482h6v6h-6z"/>
<path fill="#f7dd76" d="M2004 487h6v6h-6z"/>
<path fill="#f6db81" d="M2004 492h6v6h-6z"/>
<path fill="#f6d98c" d="M2004 497h6v6h-6z"/>
<path fill="#f6d798" d="M2004 502h6v6h-6z"/>
<path fill="#f6d5a5" d="M2004 507h6v6h-6z"/>
<path fill="#f5d3b2" d="M2004 512h6v6h-6z"/>
<path fill="#f5d1bf" d="M2004 517h6v6h-6z"/>
<path fill="#f5cfcd" d="M2004 522h6v6h-6z"/>
<path fill="#f5cddb" d="M2004 527h6v6h-6z"/>
<path fill="#f5cbe9" d="M2004 532h6v6h-6z"/>
<path fill="#f4c9f8" d="M2004 537h6v6h-6z"/>
<path fill="#e9bdfb" d="M2004 542h6v6h-6z"/>
<path fill="#dbb0fa" d="M2004 547h6v6h-6z"/>
<path fill="#cfa4fa" d="M2004 552h6v6h-6z"/>
<path fill="#c399f9" d="M2004 557h6v6h-6z"/>
<path fill="#b98ff9" d="M2004 562h6v6h-6z"/>
<path fill="#b086f8" d="M2004 567h6v6h-6z"/>
<path fill="#a77ef8" d="M2004 572h6v6h-6z"/>
<path fill="#9f76f8" d="M2004 577h6v6h-6z"/>
<path fill="#986ff7" d="M2004 582h6v6h-6z"/>
<path fill="#9169f7" d="M2004 587h6v6h-6z"/>
<path fill="#8a62f7" d="M2004 592h6v6h-6z"/>
<path fill="#855df7" d="M2004 597h6v6h-6z"/>
<path fill="#7f57f7" d="M2004 602h6v6h-6z"/>
<path fill="#7a52f7" d="M2004 607h6v6h-6z"/>
<path fill="#f6db47" d="M2009 447h6v6h-6z"/>
<path fill="#f6da47" d="M2009 452h6v6h-6z"/>
<path fill="#f5d848" d="M2009 457h6v6h-6z"/>
<path fill="#f5d64b" d="M2009 462h6v6h-6z"/>
<path fill="#f5d450" d="M2009 467h6v6h-6z"/>
<path fill="#f4d356" d="M2009 472h6v6h-6z"/>
<path fill="#f4d15d" d="M2009 477h6v6h-6z"/>
<path fill="#f4cf65" d="M2009 482h6v6h-6z"/>
<path fill="#f4cd6f" d="M2009 487h6v6h-6z"/>
<path fill="#f3cb78" d="M2009 492h6v6h-6z"/>
<path fill="#f3c983" d="M2009 497h6v6h-6z"/>
<path fill="#f3c88e" d="M2009 502h6v6h-6z"/>
<path fill="#f3c69a" d="M2009 507h6v6h-6z"/>
<path fill="#f2c4a6" d="M2009 512h6v6h-6z"/>
<path fill="#f2c2b2" d="M2009 517h6v6h-6z"/>
<path fill="#f2bfbf" d="M2009 522h6v6h-6z"/>
<path fill="#f2bdcc" d="M2009 527h6v6h-6z"/>
<path fill="#f2bbda" d="M2009 532h6v6h-6z"/>
<path fill="#f2b9e8" d="M2009 537h6v6h-6z"/>
<path fill="#f2b7f6" d="M2009 542h6v6h-6z"/>
<path fill="#e8aefa" d="M2009 547h6v6h-6z"/>
<path fill="#dba2fa" d="M2009 552h6v6h-6z"/>
<path fill="#cf97f9" d="M2009 557h6v6h-6z"/>
<path fill="#c48df9" d="M2009 562h6v6h-6z"/>
<path fill="#ba84f8" d="M2009 567h6v6h-6z"/>
<path fill="#b17cf8" d="M2009 572h6v6h-6z"/>
<path fill="#a974f8" d="M2009 577h6v6h-6z"/>
<path fill="#a16df7" d="M2009 582h6v6h-6z"/>
<path fill="#9a67f7" d="M2009 587h6v6h-6z"/>
<path fill="#9361f7" d="M2009 592h6v6h-6z"/>
<path fill="#8d5bf7" d="M2009 597h6v6h-6z"/>
<path fill="#8756f7" d="M2009 602h6v6h-6z"/>
<path fill="#8251f7" d="M2009 607h6v6h-6z"/>
<path fill="#f3cd43" d="M2014 447h6v6h-6z"/>
<path fill="#f3cc43" d="M2014 452h6v6h-6z"/>
<path fill="#f3ca44" d="M2014 457h6v6h-6z"/>
<path fill="#f3c847" d="M2014 462h6v6h-6z"/>
<path fill="#f2c74b" d="M2014 467h6v6h-6z"/>
<path fill="#f2c551" d="M2014 472h6v6h-6z"/>
<path fill="#f2c357" d="M2014 477h6v6h-6z"/>
<path fill="#f1c15f" d="M2014 482h6v6h-6z"/>
<path fill="#f1bf68" d="M2014 487h6v6h-6z"/>
<path fill="#f1bd71" d="M2014 492h6v6h-6z"/>
<path fill="#f1bc7b" d="M2014 497h6v6h-6z"/>
<path fill="#f1ba85" d="M2014 502h6v6h-6z"/>
<path fill="#f0b890" d="M2014 507h6v6h-6z"/>
<path fill="#f0b69b" d="M2014 512h6v6h-6z"/>
<path fill="#f0b4a7" d="M2014 517h6v6h-6z"/>
<path fill="#f0b2b3" d="M2014 522h6v6h-6z"/>
<path fill="#f0b0bf" d="M2014 527h6v6h-6z"/>
<path fill="#efaecc" d="M2014 532h6v6h-6z"/>
<path fill="#efabd9" d="M2014 537h6v6h-6z"/>
<path fill="#efa9e6" d="M2014 542h6v6h-6z"/>
<path fill="#efa7f4" d="M2014 547h6v6h-6z"/>
<path fill="#e8a0fa" d="M2014 552h6v6h-6z"/>
<path fill="#dc95f9" d="M2014 557h6v6h-6z"/>
<path fill="#d08bf9" d="M2014 562h6v6h-6z"/>
<path fill="#c683f8" d="M2014 567h6v6h-6z"/>
<path fill="#bc7af8" d="M2014 572h6v6h-6z"/>
<path fill="#b373f8" d="M2014 577h6v6h-6z"/>
<path fill="#ab6cf7" d="M2014 582h6v6h-6z"/>
<path fill="#a365f7" d="M2014 587h6v6h-6z"/>
<path fill="#9c5ff7" d="M2014 592h6v6h-6z"/>
<path fill="#965af7" d="M2014 597h6v6h-6z"/>
<path fill="#9054f7" d="M2014 602h6v6h-6z"/>
<path fill="#8a4ff7" d="M2014 607h6v6h-6z"/>
<path fill="#f1c140" d="M2019 447h6v6h-6z"/>
<path fill="#f1bf40" d="M2019 452h6v6h-6z"/>
<path fill="#f1be41" d="M2019 457h6v6h-6z"/>
<path fill="#f0bc43" d="M2019 462h6v6h-6z"/>
<path fill="#f0ba47" d="M2019 467h6v6h-6z"/>
<path fill="#f0b84c" d="M2019 472h6v6h-6z"/>
<path fill="#f0b752" d="M2019 477h6v6h-6z"/>
<path fill="#efb559" d="M2019 482h6v6h-6z"/>
<path fill="#efb362" d="M2019 487h6v6h-6z"/>
<path fill="#efb16a" d="M2019 492h6v6h-6z"/>
<path fill="#efaf74" d="M2019 497h6v6h-6z"/>
<path fill="#efad7d" d="M2019 502h6v6h-6z"/>
<path fill="#eeab88" d="M2019 507h6v6h-6z"/>
<path fill="#eea992" d="M2019 512h6v6h-6z"/>
<path fill="#eea79d" d="M2019 517h6v6h-6z"/>
<path fill="#eea5a8" d="M2019 522h6v6h-6z"/>
<path fill="#eea3b4" d="M2019 527h6v6h-6z"/>
<path fill="#eea1c0" d="M2019 532h6v6h-6z"/>
<path fill="#ed9fcc" d="M2019 537h6v6h-6z"/>
<path fill="#ed9dd8" d="M2019 542h6v6h-6z"/>
<path fill="#ed9be5" d="M2019 547h6v6h-6z"/>
<path fill="#ed99f2" d="M2019 552h6v6h-6z"/>
<path fill="#e893f9" d="M2019 557h6v6h-6z"/>
<path fill="#dc8af9" d="M2019 562h6v6h-6z"/>
<path fill="#d181f8" d="M2019 567h6v6h-6z"/>
<path fill="#c779f8" d="M2019 572h6v6h-6z"/>
<path fill="#be71f8" d="M2019 577h6v6h-6z"/>
<path fill="#b56af8" d="M2019 582h6v6h-6z"/>
<path fill="#ad64f7" d="M2019 587h6v6h-6z"/>
<path fill="#a65ef7" d="M2019 592h6v6h-6z"/>
<path fill="#9f58f7" d="M2019 597h6v6h-6z"/>
<path fill="#9953f7" d="M2019 602h6v6h-6z"/>
<path fill="#934ef7" d="M2019 607h6v6h-6z"/>
<path fill="#f0b63d" d="M2024 447h6v6h-6z"/>
<path fill="#efb43d" d="M2024 452h6v6h-6z"/>
<path fill="#efb23e" d="M2024 457h6v6h-6z"/>
<path fill="#efb140" d="M2024 462h6v6h-6z"/>
<path fill="#efaf43" d="M2024 467h6v6h-6z"/>
<path fill="#eead48" d="M2024 472h6v6h-6z"/>
<path fill="#eeab4e" d="M2024 477h6v6h-6z"/>
<path fill="#eeaa55" d="M2024 482h6v6h-6z"/>
<path fill="#eea85c" d="M2024 487h6v6h-6z"/>
<path fill="#eda664" d="M2024 492h6v6h-6z"/>
<path fill="#eda46d" d="M2024 497h6v6h-6z"/>
<path fill="#eda276" d="M2024 502h6v6h-6z"/>
<path fill="#eda080" d="M2024 507h6v6h-6z"/>
<path fill="#ed9f8a" d="M2024 512h6v6h-6z"/>
<path fill="#ec9d94" d="M2024 517h6v6h-6z"/>
<path fill="#ec9b9f" d="M2024 522h6v6h-6z"/>
<path fill="#ec99aa" d="M2024 527h6v6h-6z"/>
<path fill="#ec97b5" d="M2024 532h6v6h-6z"/>
<path fill="#ec95c0" d="M2024 537h6v6h-6z"/>
<path fill="#ec93cc" d="M2024 542h6v6h-6z"/>
<path fill="#ec91d8" d="M2024 547h6v6h-6z"/>
<path fill="#ec8ee4" d="M2024 552h6v6h-6z"/>
<path fill="#ec8cf0" d="M2024 557h6v6h-6z"/>
<path fill="#e888f9" d="M2024 562h6v6h-6z"/>
<path fill="#dd7ff9" d="M2024 567h6v6h-6z"/>
<path fill="#d277f8" d="M2024 572h6v6h-6z"/>
<path fill="#c870f8" d="M2024 577h6v6h-6z"/>
<path fill="#bf69f8" d="M2024 582h6v6h-6z"/>
<path fill="#b763f7" d="M2024 587h6v6h-6z"/>
<path fill="#af5df7" d="M2024 592h6v6h-6z"/>
<path fill="#a857f7" d="M2024 597h6v6h-6z"/>
<path fill="#a152f7" d="M2024 602h6v6h-6z"/>
<path fill="#9b4df7" d="M2024 607h6v6h-6z"/>
<path fill="#eeab3a" d="M2029 447h6v6h-6z"/>
<path fill="#eeaa3a" d="M2029 452h6v6h-6z"/>
<path fill="#eea83b" d="M2029 457h6v6h-6z"/>
<path fill="#eda73d" d="M2029 462h6v6h-6z"/>
<path fill="#eda540" d="M2029 467h6v6h-6z"/>
<path fill="#eda344" d="M2029 472h6v6h-6z"/>
<path fill="#eda14a" d="M2029 477h6v6h-6z"/>
<path fill="#eca050" d="M2029 482h6v6h-6z"/>
<path fill="#ec9e57" d="M2029 487h6v6h-6z"/>
<path fill="#ec9c5f" d="M2029 492h6v6h-6z"/>
<path fill="#ec9a67" d="M2029 497h6v6h-6z"/>
<path fill="#ec9970" d="M2029 502h6v6h-6z"/>
<path fill="#eb9779" d="M2029 507h6v6h-6z"/>
<path fill="#eb9582" d="M2029 512h6v6h-6z"/>
<path fill="#eb938c" d="M2029 517h6v6h-6z"/>
<path fill="#eb9196" d="M2029 522h6v6h-6z"/>
<path fill="#eb8fa0" d="M2029 527h6v6h-6z"/>
<path fill="#eb8dab" d="M2029 532h6v6h-6z"/>
<path fill="#eb8bb6" d="M2029 537h6v6h-6z"/>
<path fill="#eb89c1" d="M2029 542h6v6h-6z"/>
<path fill="#eb87cc" d="M2029 547h6v6h-6z"/>
<path fill="#ea85d7" d="M2029 552h6v6h-6z"/>
<path fill="#ea83e3" d="M2029 557h6v6h-6z"/>
<path fill="#ea81ef" d="M2029 562h6v6h-6z"/>
<path fill="#e97ef9" d="M2029 567h6v6h-6z"/>
<path fill="#de76f8" d="M2029 572h6v6h-6z"/>
<path fill="#d36ff8" d="M2029 577h6v6h-6z"/>
<path fill="#ca68f8" d="M2029 582h6v6h-6z"/>
<path fill="#c161f7" d="M2029 587h6v6h-6z"/>
<path fill="#b95cf7" d="M2029 592h6v6h-6z"/>
<path fill="#b156f7" d="M2029 597h6v6h-6z"/>
<path fill="#aa51f7" d="M2029 602h6v6h-6z"/>
<path fill="#a44cf7" d="M2029 607h6v6h-6z"/>
<path fill="#eda238" d="M2034 447h6v6h-6z"/>
<path fill="#eca138" d="M2034 452h6v6h-6z"/>
<path fill="#ec9f38" d="M2034 457h6v6h-6z"/>
<path fill="#ec9d3a" d="M2034 462h6v6h-6z"/>
<path fill="#ec9c3d" d="M2034 467h6v6h-6z"/>
<path fill="#ec9a41" d="M2034 472h6v6h-6z"/>
<path fill="#eb9846" d="M2034 477h6v6h-6z"/>
<path fill="#eb974c" d="M2034 482h6v6h-6z"/>
<path fill="#eb9553" d="M2034 487h6v6h-6z"/>
<path fill="#eb935a" d="M2034 492h6v6h-6z"/>
<path fill="#eb9162" d="M2034 497h6v6h-6z"/>
<path fill="#eb906a" d="M2034 502h6v6h-6z"/>
<path fill="#ea8e73" d="M2034 507h6v6h-6z"/>
<path fill="#ea8c7c" d="M2034 512h6v6h-6z"/>
<path fill="#ea8a85" d="M2034 517h6v6h-6z"/>
<path fill="#ea888e" d="M2034 522h6v6h-6z"/>
<path fill="#ea8798" d="M2034 527h6v6h-6z"/>
<path fill="#ea85a2" d="M2034 532h6v6h-6z"/>
<path fill="#ea83ac" d="M2034 537h6v6h-6z"/>
<path fill="#ea81b6" d="M2034 542h6v6h-6z"/>
<path fill="#ea7fc1" d="M2034 547h6v6h-6z"/>
<path fill="#e97dcc" d="M2034 552h6v6h-6z"/>
<path fill="#e97bd7" d="M2034 557h6v6h-6z"/>
<path fill="#e979e2" d="M2034 562h6v6h-6z"/>
<path fill="#e977ed" d="M2034 567h6v6h-6z"/>
<path fill="#e975f8" d="M2034 572h6v6h-6z"/>
<path fill="#de6ef8" d="M2034 577h6v6h-6z"/>
<path fill="#d467f8" d="M2034 582h6v6h-6z"/>
<path fill="#cb61f8" d="M2034 587h6v6h-6z"/>
<path fill="#c35bf7" d="M2034 592h6v6h-6z"/>
<path fill="#bb55f7" d="M2034 597h6v6h-6z"/>
<path fill="#b450f7" d="M2034 602h6v6h-6z"/>
<path fill="#ad4cf7" d="M2034 607h6v6h-6z"/>
<path fill="#ec9a36" d="M2039 447h6v6h-6z"/>
<path fill="#eb9836" d="M2039 452h6v6h-6z"/>
<path fill="#eb9736" d="M2039 457h6v6h-6z"/>
<path fill="#eb9538" d="M2039 462h6v6h-6z"/>
<path fill="#eb933a" d="M2039 467h6v6h-6z"/>
<path fill="#eb923e" d="M2039 472h6v6h-6z"/>
<path fill="#ea9043" d="M2039 477h6v6h-6z"/>
<path fill="#ea8e48" d="M2039 482h6v6h-6z"/>
<path fill="#ea8d4f" d="M2039 487h6v6h-6z"/>
<path fill="#ea8b56" d="M2039 492h6v6h-6z"/>
<path fill="#ea895d" d="M2039 497h6v6h-6z"/>
<path fill="#ea8865" d="M2039 502h6v6h-6z"/>
<path fill="#e9866d" d="M2039 507h6v6h-6z"/>
<path fill="#e98476" d="M2039 512h6v6h-6z"/>
<path fill="#e9827e" d="M2039 517h6v6h-6z"/>
<path fill="#e98187" d="M2039 522h6v6h-6z"/>
<path fill="#e97f90" d="M2039 527h6v6h-6z"/>
<path fill="#e97d9a" d="M2039 532h6v6h-6z"/>
<path fill="#e97ba4" d="M2039 537h6v6h-6z"/>
<path fill="#e979ad" d="M2039 542h6v6h-6z"/>
<path fill="#e978b7" d="M2039 547h6v6h-6z"/>
<path fill="#e976c2" d="M2039 552h6v6h-6z"/>
<path fill="#e974cc" d="M2039 557h6v6h-6z"/>
<path fill="#e972d6" d="M2039 562h6v6h-6z"/>
<path fill="#e970e1" d="M2039 567h6v6h-6z"/>
<path fill="#e96eec" d="M2039 572h6v6h-6z"/>
<path fill="#e96cf7" d="M2039 577h6v6h-6z"/>
<path fill="#df66f8" d="M2039 582h6v6h-6z"/>
<path fill="#d660f8" d="M2039 587h6v6h-6z"/>
<path fill="#cd5af7" d="M2039 592h6v6h-6z"/>
<path fill="#c455f7" d="M2039 597h6v6h-6z"/>
<path fill="#bd50f7" d="M2039 602h6v6h-6z"/>
<path fill="#b64bf7" d="M2039 607h6v6h-6z"/>
<path fill="#eb9234" d="M2044 447h6v6h-6z"/>
<path fill="#ea9134" d="M2044 452h6v6h-6z"/>
<path fill="#ea8f34" d="M2044 457h6v6h-6z"/>
<path fill="#ea8d35" d="M2044 462h6v6h-6z"/>
<path fill="#ea8c38" d="M2044 467h6v6h-6z"/>
<path fill="#ea8a3b" d="M2044 472h6v6h-6z"/>
<path fill="#ea8940" d="M2044 477h6v6h-6z"/>
<path fill="#e98745" d="M2044 482h6v6h-6z"/>
<path fill="#e9854b" d="M2044 487h6v6h-6z"/>
<path fill="#e98452" d="M2044 492h6v6h-6z"/>
<path fill="#e98259" d="M2044 497h6v6h-6z"/>
<path fill="#e98160" d="M2044 502h6v6h-6z"/>
<path fill="#e97f68" d="M2044 507h6v6h-6z"/>
<path fill="#e97d70" d="M2044 512h6v6h-6z"/>
<path fill="#e87b78" d="M2044 517h6v6h-6z"/>
<path fill="#e87a81" d="M2044 522h6v6h-6z"/>
<path fill="#e8788a" d="M2044 527h6v6h-6z"/>
<path fill="#e87693" d="M2044 532h6v6h-6z"/>
<path fill="#e8749c" d="M2044 537h6v6h-6z"/>
<path fill="#e873a5" d="M2044 542h6v6h-6z"/>
<path fill="#e871af" d="M2044 547h6v6h-6z"/>
<path fill="#e86fb8" d="M2044 552h6v6h-6z"/>
<path fill="#e86dc2" d="M2044 557h6v6h-6z"/>
<path fill="#e86ccc" d="M2044 562h6v6h-6z"/>
<path fill="#e86ad6" d="M2044 567h6v6h-6z"/>
<path fill="#e868e0" d="M2044 572h6v6h-6z"/>
<path fill="#e866eb" d="M2044 577h6v6h-6z"/>
<path fill="#e864f6" d="M2044 582h6v6h-6z"/>
<path fill="#e05ff8" d="M2044 587h6v6h-6z"/>
<path fill="#d75af8" d="M2044 592h6v6h-6z"/>
<path fill="#ce54f7" d="M2044 597h6v6h-6z"/>
<path fill="#c64ff7" d="M2044 602h6v6h-6z"/>
<path fill="#bf4bf7" d="M2044 607h6v6h-6z"/>
<path fill="#ea8b33" d="M2049 447h6v6h-6z"/>
<path fill="#ea8a32" d="M2049 452h6v6h-6z"/>
<path fill="#e98832" d="M2049 457h6v6h-6z"/>
<path fill="#e98734" d="M2049 462h6v6h-6z"/>
<path fill="#e98536" d="M2049 467h6v6h-6z"/>
<path fill="#e98339" d="M2049 472h6v6h-6z"/>
<path fill="#e9823d" d="M2049 477h6v6h-6z"/>
<path fill="#e98042" d="M2049 482h6v6h-6z"/>
<path fill="#e87f48" d="M2049 487h6v6h-6z"/>
<path fill="#e87d4e" d="M2049 492h6v6h-6z"/>
<path fill="#e87c55" d="M2049 497h6v6h-6z"/>
<path fill="#e87a5c" d="M2049 502h6v6h-6z"/>
<path fill="#e87863" d="M2049 507h6v6h-6z"/>
<path fill="#e8776b" d="M2049 512h6v6h-6z"/>
<path fill="#e87573" d="M2049 517h6v6h-6z"/>
<path fill="#e8737b" d="M2049 522h6v6h-6z"/>
<path fill="#e87283" d="M2049 527h6v6h-6z"/>
<path fill="#e7708c" d="M2049 532h6v6h-6z"/>
<path fill="#e76e95" d="M2049 537h6v6h-6z"/>
<path fill="#e76d9d" d="M2049 542h6v6h-6z"/>
<path fill="#e76ba6" d="M2049 547h6v6h-6z"/>
<path fill="#e769b0" d="M2049 552h6v6h-6z"/>
<path fill="#e768b9" d="M2049 557h6v6h-6z"/>
<path fill="#e766c3" d="M2049 562h6v6h-6z"/>
<path fill="#e764cc" d="M2049 567h6v6h-6z"/>
<path fill="#e763d6" d="M2049 572h6v6h-6z"/>
<path fill="#e761e0" d="M2049 577h6v6h-6z"/>
<path fill="#e75fea" d="M2049 582h6v6h-6z"/>
<path fill="#e75df4" d="M2049 587h6v6h-6z"/>
<path fill="#e159f8" d="M2049 592h6v6h-6z"/>
<path fill="#d854f7" d="M2049 597h6v6h-6z"/>
<path fill="#d04ff7" d="M2049 602h6v6h-6z"/>
<path fill="#c84bf7" d="M2049 607h6v6h-6z"/>
<path fill="#e98531" d="M2054 447h6v6h-6z"/>
<path fill="#e98331" d="M2054 452h6v6h-6z"/>
<path fill="#e98231" d="M2054 457h6v6h-6z"/>
<path fill="#e98032" d="M2054 462h6v6h-6z"/>
<path fill="#e87f34" d="M2054 467h6v6h-6z"/>
<path fill="#e87d37" d="M2054 472h6v6h-6z"/>
<path fill="#e87c3b" d="M2054 477h6v6h-6z"/>
<path fill="#e87a3f" d="M2054 482h6v6h-6z"/>
<path fill="#e87945" d="M2054 487h6v6h-6z"/>
<path fill="#e8774b" d="M2054 492h6v6h-6z"/>
<path fill="#e87651" d="M2054 497h6v6h-6z"/>
<path fill="#e77458" d="M2054 502h6v6h-6z"/>
<path fill="#e7735f" d="M2054 507h6v6h-6z"/>
<path fill="#e77166" d="M2054 512h6v6h-6z"/>
<path fill="#e76f6e" d="M2054 517h6v6h-6z"/>
<path fill="#e76e76" d="M2054 522h6v6h-6z"/>
<path fill="#e76c7e" d="M2054 527h6v6h-6z"/>
<path fill="#e76b86" d="M2054 532h6v6h-6z"/>
<path fill="#e7698e" d="M2054 537h6v6h-6z"/>
<path fill="#e76796" d="M2054 542h6v6h-6z"/>
<path fill="#e7669f" d="M2054 547h6v6h-6z"/>
<path fill="#e764a8" d="M2054 552h6v6h-6z"/>
<path fill="#e763b1" d="M2054 557h6v6h-6z"/>
<path fill="#e761ba" d="M2054 562h6v6h-6z"/>
<path fill="#e75fc3" d="M2054 567h6v6h-6z"/>
<path fill="#e75ecc" d="M2054 572h6v6h-6z"/>
<path fill="#e75cd6" d="M2054 577h6v6h-6z"/>
<path fill="#e75bdf" d="M2054 582h6v6h-6z"/>
<path fill="#e759e9" d="M2054 587h6v6h-6z"/>
<path fill="#e757f3" d="M2054 592h6v6h-6z"/>
<path fill="#e254f8" d="M2054 597h6v6h-6z"/>
<path fill="#d94ff7" d="M2054 602h6v6h-6z"/>
<path fill="#d14bf7" d="M2054 607h6v6h-6z"/>
<path fill="#e87f30" d="M2059 447h6v6h-6z"/>
<path fill="#e87d30" d="M2059 452h6v6h-6z"/>
<path fill="#e87c30" d="M2059 457h6v6h-6z"/>
<path fill="#e87a30" d="M2059 462h6v6h-6z"/>
<path fill="#e87932" d="M2059 467h6v6h-6z"/>
<path fill="#e87835" d="M2059 472h6v6h-6z"/>
<path fill="#e87639" d="M2059 477h6v6h-6z"/>
<path fill="#e7753d" d="M2059 482h6v6h-6z"/>
<path fill="#e77342" d="M2059 487h6v6h-6z"/>
<path fill="#e77248" d="M2059 492h6v6h-6z"/>
<path fill="#e7704e" d="M2059 497h6v6h-6z"/>
<path fill="#e76f54" d="M2059 502h6v6h-6z"/>
<path fill="#e76d5b" d="M2059 507h6v6h-6z"/>
<path fill="#e76c62" d="M2059 512h6v6h-6z"/>
<path fill="#e76a69" d="M2059 517h6v6h-6z"/>
<path fill="#e76971" d="M2059 522h6v6h-6z"/>
<path fill="#e76778" d="M2059 527h6v6h-6z"/>
<path fill="#e66680" d="M2059 532h6v6h-6z"/>
<path fill="#e66488" d="M2059 537h6v6h-6z"/>
<path fill="#e66390" d="M2059 542h6v6h-6z"/>
<path fill="#e66198" d="M2059 547h6v6h-6z"/>
<path fill="#e660a1" d="M2059 552h6v6h-6z"/>
<path fill="#e65ea9" d="M2059 557h6v6h-6z"/>
<path fill="#e65db2" d="M2059 562h6v6h-6z"/>
<path fill="#e65bbb" d="M2059 567h6v6h-6z"/>
<path fill="#e65ac4" d="M2059 572h6v6h-6z"/>
<path fill="#e658cd" d="M2059 577h6v6h-6z"/>
<path fill="#e657d6" d="M2059 582h6v6h-6z"/>
<path fill="#e655df" d="M2059 587h6v6h-6z"/>
<path fill="#e654e8" d="M2059 592h6v6h-6z"/>
<path fill="#e752f2" d="M2059 597h6v6h-6z"/>
<path fill="#e350f8" d="M2059 602h6v6h-6z"/>
<path fill="#da4bf7" d="M2059 607h6v6h-6z"/>
<path fill="#e8792f" d="M2064 447h6v6h-6z"/>
<path fill="#e8782e" d="M2064 452h6v6h-6z"/>
<path fill="#e8772e" d="M2064 457h6v6h-6z"/>
<path fill="#e7752f" d="M2064 462h6v6h-6z"/>
<path fill="#e77431" d="M2064 467h6v6h-6z"/>
<path fill="#e77233" d="M2064 472h6v6h-6z"/>
<path fill="#e77137" d="M2064 477h6v6h-6z"/>
<path fill="#e7703b" d="M2064 482h6v6h-6z"/>
<path fill="#e76e40" d="M2064 487h6v6h-6z"/>
<path fill="#e76d45" d="M2064 492h6v6h-6z"/>
<path fill="#e76b4b" d="M2064 497h6v6h-6z"/>
<path fill="#e76a51" d="M2064 502h6v6h-6z"/>
<path fill="#e66857" d="M2064 507h6v6h-6z"/>
<path fill="#e6675e" d="M2064 512h6v6h-6z"/>
<path fill="#e66665" d="M2064 517h6v6h-6z"/>
<path fill="#e6646c" d="M2064 522h6v6h-6z"/>
<path fill="#e66373" d="M2064 527h6v6h-6z"/>
<path fill="#e6617b" d="M2064 532h6v6h-6z"/>
<path fill="#e66082" d="M2064 537h6v6h-6z"/>
<path fill="#e65e8a" d="M2064 542h6v6h-6z"/>
<path fill="#e65d92" d="M2064 547h6v6h-6z"/>
<path fill="#e65c9a" d="M2064 552h6v6h-6z"/>
<path fill="#e65aa2" d="M2064 557h6v6h-6z"/>
<path fill="#e659aa" d="M2064 562h6v6h-6z"/>
<path fill="#e657b3" d="M2064 567h6v6h-6z"/>
<path fill="#e656bb" d="M2064 572h6v6h-6z"/>
<path fill="#e654c4" d="M2064 577h6v6h-6z"/>
<path fill="#e653cd" d="M2064 582h6v6h-6z"/>
<path fill="#e652d6" d="M2064 587h6v6h-6z"/>
<path fill="#e650df" d="M2064 592h6v6h-6z"/>
<path fill="#e64fe8" d="M2064 597h6v6h-6z"/>
<path fill="#e64ef1" d="M2064 602h6v6h-6z"/>
<path fill="#e44cf7" d="M2064 607h6v6h-6z"/>
<path fill="#e7742e" d="M2069 447h6v6h-6z"/>
<path fill="#e7732d" d="M2069 452h6v6h-6z"/>
<path fill="#e7722d" d="M2069 457h6v6h-6z"/>
<path fill="#e7702e" d="M2069 462h6v6h-6z"/>
<path fill="#e76f2f" d="M2069 467h6v6h-6z"/>
<path fill="#e76e32" d="M2069 472h6v6h-6z"/>
<path fill="#e76c35" d="M2069 477h6v6h-6z"/>
<path fill="#e76b39" d="M2069 482h6v6h-6z"/>
<path fill="#e66a3d" d="M2069 487h6v6h-6z"/>
<path fill="#e66842" d="M2069 492h6v6h-6z"/>
<path fill="#e66748" d="M2069 497h6v6h-6z"/>
<path fill="#e6654e" d="M2069 502h6v6h-6z"/>
<path fill="#e66454" d="M2069 507h6v6h-6z"/>
<path fill="#e6635a" d="M2069 512h6v6h-6z"/>
<path fill="#e66161" d="M2069 517h6v6h-6z"/>
<path fill="#e66068" d="M2069 522h6v6h-6z"/>
<path fill="#e65f6f" d="M2069 527h6v6h-6z"/>
<path fill="#e65d76" d="M2069 532h6v6h-6z"/>
<path fill="#e65c7d" d="M2069 537h6v6h-6z"/>
<path fill="#e65b85" d="M2069 542h6v6h-6z"/>
<path fill="#e6598c" d="M2069 547h6v6h-6z"/>
<path fill="#e65894" d="M2069 552h6v6h-6z"/>
<path fill="#e6579c" d="M2069 557h6v6h-6z"/>
<path fill="#e655a4" d="M2069 562h6v6h-6z"/>
<path fill="#e654ac" d="M2069 567h6v6h-6z"/>
<path fill="#e653b4" d="M2069 572h6v6h-6z"/>
<path fill="#e651bc" d="M2069 577h6v6h-6z"/>
<path fill="#e650c4" d="M2069 582h6v6h-6z"/>
<path fill="#e64fcd" d="M2069 587h6v6h-6z"/>
<path fill="#e64ed5" d="M2069 592h6v6h-6z"/>
<path fill="#e64cde" d="M2069 597h6v6h-6z"/>
<path fill="#e64be7" d="M2069 602h6v6h-6z"/>
<path fill="#e64af0" d="M2069 607h6v6h-6z"/>
<path fill="#e7702d" d="M2074 447h6v6h-6z"/>
<path fill="#e76e2c" d="M2074 452h6v6h-6z"/>
<path fill="#e76d2c" d="M2074 457h6v6h-6z"/>
<path fill="#e76c2d" d="M2074 462h6v6h-6z"/>
<path fill="#e66b2e" d="M2074 467h6v6h-6z"/>
<path fill="#e66930" d="M2074 472h6v6h-6z"/>
<path fill="#e66833" d="M2074 477h6v6h-6z"/>
<path fill="#e66737" d="M2074 482h6v6h-6z"/>
<path fill="#e6653b" d="M2074 487h6v6h-6z"/>
<path fill="#e66440" d="M2074 492h6v6h-6z"/>
<path fill="#e66345" d="M2074 497h6v6h-6z"/>
<path fill="#e6614b" d="M2074 502h6v6h-6z"/>
<path fill="#e66051" d="M2074 507h6v6h-6z"/>
<path fill="#e65f57" d="M2074 512h6v6h-6z"/>
<path fill="#e65e5d" d="M2074 517h6v6h-6z"/>
<path fill="#e65c64" d="M2074 522h6v6h-6z"/>
<path fill="#e65b6b" d="M2074 527h6v6h-6z"/>
<path fill="#e55a71" d="M2074 532h6v6h-6z"/>
<path fill="#e55878" d="M2074 537h6v6h-6z"/>
<path fill="#e55780" d="M2074 542h6v6h-6z"/>
<path fill="#e55687" d="M2074 547h6v6h-6z"/>
<path fill="#e5558e" d="M2074 552h6v6h-6z"/>
<path fill="#e55396" d="M2074 557h6v6h-6z"/>
<path fill="#e5529d" d="M2074 562h6v6h-6z"/>
<path fill="#e551a5" d="M2074 567h6v6h-6z"/>
<path fill="#e550ad" d="M2074 572h6v6h-6z"/>
<path fill="#e54fb5" d="M2074 577h6v6h-6z"/>
<path fill="#e54dbd" d="M2074 582h6v6h-6z"/>
<path fill="#e54cc5" d="M2074 587h6v6h-6z"/>
<path fill="#e64bcd" d="M2074 592h6v6h-6z"/>
<path fill="#e64ad5" d="M2074 597h6v6h-6z"/>
<path fill="#e649de" d="M2074 602h6v6h-6z"/>
<path fill="#e648e6" d="M2074 607h6v6h-6z"/>
</g></g>
<path fill="#000" fill-opacity="0.39" fill-rule="evenodd" d="M2055.9 944.7L2444.6 493.1L2444.6 493.1L2443.2 492.9L2441.2 492.6L2438.6 492.3L2434.9 491.8L2430.1 491.2L2423.9 490.4L2415.7 489.3L2405.2 488.0L2392.3 486.3L2376.9 484.3L2359.2 482.0L2338.2 479.3L2333.5 478.7L2328.7 478.0L2323.7 477.4L2318.5 476.7L2313.1 476.0L2307.6 475.3L2301.9 474.5L2296.0 473.7L2289.9 473.0L2283.7 472.2L2277.3 471.3L2270.8 470.5L2264.2 469.6L2257.3 468.8L2250.4 467.9L2243.2 466.9L2235.9 466.0L2228.5 465.0L2221.1 464.1L2213.6 463.1L2206.1 462.1L2198.6 461.1L2191.0 460.2L2183.4 459.2L2175.8 458.2L2168.0 457.2L2160.2 456.1L2152.4 455.1L2144.6 454.1L2136.8 453.1L2129.0 452.1L2121.4 451.1L2113.8 450.1L2106.3 449.1L2098.8 448.2L2091.5 447.2L2084.2 446.3L2077.0 445.3L2069.9 444.4L2062.9 443.5L2056.1 442.6L2049.3 441.7L2042.6 440.9L2036.1 440.0L2029.7 439.2L2023.3 438.3L2017.1 437.5L2011.0 436.7L2005.1 436.0L1999.2 435.2L1993.4 434.5L1987.7 433.7L1982.2 433.0L1976.7 432.3L1971.4 431.7L1966.2 431.0L1961.1 430.4L1956.1 429.7L1951.2 429.1L1946.4 428.5L1941.6 427.9L1937.0 427.4L1932.5 426.8L1928.0 426.3L1923.7 425.8L1919.4 425.3L1915.3 424.8L1911.2 424.3L1907.2 423.9L1903.3 423.4L1899.4 423.0L1895.6 422.6L1891.9 422.2L1888.3 421.9L1884.7 421.5L1881.2 421.2L1877.7 420.9L1874.3 420.6L1870.9 420.4L1867.6 420.1L1864.4 419.9L1861.2 419.7L1858.0 419.6L1854.9 419.4L1851.8 419.3L1848.7 419.2L1845.7 419.1L1842.7 419.1L1839.7 419.1L1836.6 419.1L1833.6 419.1L1830.6 419.2L1827.6 419.3L1824.7 419.5L1821.8 419.7L1819.0 419.9L1816.2 420.2L1813.5 420.7L1810.9 421.2L1808.5 421.9L1806.1 422.7L1803.8 423.6L1801.6 424.8L1799.6 426.1L1797.6 427.7L1795.8 429.4L1794.2 431.5L1792.6 433.7L1791.2 436.3L1790.0 439.1L1789.0 442.2L1788.1 445.5L1787.5 449.2L1787.0 453.3L1786.7 457.6L1786.7 462.3L1786.9 467.4L1787.3 472.9L1788.0 478.8L1788.9 485.2L1790.1 492.1L1791.5 499.5L1793.3 507.4L1795.4 515.9L1797.8 525.1L1800.6 534.8L1803.7 545.0L1807.2 555.8L1811.0 567.1L1815.1 578.9L1819.6 591.1L1824.4 603.6L1829.5 616.5L1834.9 629.5L1840.7 642.8L1846.8 656.1L1853.2 669.5L1859.8 682.9L1866.5 696.2L1873.4 709.3L1880.2 722.3L1887.1 735.1L1893.9 747.4L1900.7 759.4L1907.3 770.9L1913.9 781.9L1920.3 792.3L1926.6 802.2L1932.7 811.5L1938.6 820.4L1944.4 828.7L1950.0 836.5L1955.3 843.7L1960.3 850.4L1965.1 856.5L1969.5 861.9L1973.7 866.8L1977.6 871.3L1981.4 875.5L1985.0 879.4L1988.6 883.1L1992.0 886.7L1995.3 890.1L1998.5 893.3L2001.6 896.3L2004.6 899.2L2007.4 901.9L2010.1 904.4L2012.6 906.8L2015.2 909.1L2017.6 911.4L2020.0 913.6L2022.2 915.7L2024.4 917.7L2026.4 919.6L2028.4 921.4L2030.2 923.1L2031.9 924.7L2033.5 926.2L2035.1 927.7L2047.2 939.1L2053.4 944.2L2055.2 944.8L2055.7 944.8L2055.9 944.7Z M2264.2 476.4 L1916.6 439.6 L1970.4 815.1 Z"/>
</g></svg>
<div style="left:1783.00px;top:404.00px;width:641.00px;height:2.00px;background:#8e8e8e;"></div>
<div style="left:1783.00px;top:405.00px;width:2.00px;height:558.00px;background:#9a9a9a;"></div>
<div style="left:2422.00px;top:405.00px;width:2.00px;height:558.00px;background:#8e8e8e;"></div>
<div style="left:1783.00px;top:961.00px;width:641.00px;height:2.00px;background:#9a9a9a;"></div>
<div style="left:1776.00px;top:961.00px;width:8.00px;height:2.00px;background:#c2c2c2;"></div>
<span class="t" style="left:1764.02px;top:954.82px;font-size:20.29px;line-height:20.29px;color:#c9c9c9;transform:scaleX(1.0700);">0</span>
<div style="left:1783.00px;top:962.00px;width:2.00px;height:8.00px;background:#c4c4c4;"></div>
<span class="t" style="left:1777.58px;top:974.62px;font-size:20.29px;line-height:20.29px;color:#c9c9c9;transform:scaleX(1.0700);">0</span>
<div style="left:1776.00px;top:869.00px;width:8.00px;height:2.00px;background:#c2c2c2;"></div>
<span class="t" style="left:1746.11px;top:860.70px;font-size:20.29px;line-height:20.29px;color:#c9c9c9;transform:scaleX(1.0700);">0.1</span>
<div style="left:1889.00px;top:962.00px;width:2.00px;height:8.00px;background:#c4c4c4;"></div>
<span class="t" style="left:1874.17px;top:974.62px;font-size:20.29px;line-height:20.29px;color:#c9c9c9;transform:scaleX(1.0700);">0.1</span>
<div style="left:1776.00px;top:777.00px;width:8.00px;height:2.00px;background:#c2c2c2;"></div>
<span class="t" style="left:1746.11px;top:767.87px;font-size:20.29px;line-height:20.29px;color:#c9c9c9;transform:scaleX(1.0700);">0.2</span>
<div style="left:1996.00px;top:962.00px;width:2.00px;height:8.00px;background:#c4c4c4;"></div>
<span class="t" style="left:1980.92px;top:974.62px;font-size:20.29px;line-height:20.29px;color:#c9c9c9;transform:scaleX(1.0700);">0.2</span>
<div style="left:1776.00px;top:684.00px;width:8.00px;height:2.00px;background:#c2c2c2;"></div>
<span class="t" style="left:1746.00px;top:675.05px;font-size:20.29px;line-height:20.29px;color:#c9c9c9;transform:scaleX(1.0700);">0.3</span>
<div style="left:2102.00px;top:962.00px;width:2.00px;height:8.00px;background:#c4c4c4;"></div>
<span class="t" style="left:2087.62px;top:974.62px;font-size:20.29px;line-height:20.29px;color:#c9c9c9;transform:scaleX(1.0700);">0.3</span>
<div style="left:1776.00px;top:591.00px;width:8.00px;height:2.00px;background:#c2c2c2;"></div>
<span class="t" style="left:1745.67px;top:582.22px;font-size:20.29px;line-height:20.29px;color:#c9c9c9;transform:scaleX(1.0700);">0.4</span>
<div style="left:2209.00px;top:962.00px;width:2.00px;height:8.00px;background:#c4c4c4;"></div>
<span class="t" style="left:2194.20px;top:974.62px;font-size:20.29px;line-height:20.29px;color:#c9c9c9;transform:scaleX(1.0700);">0.4</span>
<div style="left:1776.00px;top:498.00px;width:8.00px;height:2.00px;background:#c2c2c2;"></div>
<span class="t" style="left:1745.89px;top:489.40px;font-size:20.29px;line-height:20.29px;color:#c9c9c9;transform:scaleX(1.0700);">0.5</span>
<div style="left:2316.00px;top:962.00px;width:2.00px;height:8.00px;background:#c4c4c4;"></div>
<span class="t" style="left:2301.06px;top:974.62px;font-size:20.29px;line-height:20.29px;color:#c9c9c9;transform:scaleX(1.0700);">0.5</span>
<span class="t" style="left:2027.00px;top:380.82px;font-size:20.29px;line-height:20.29px;color:#dcdcdc;transform:scaleX(0.9840);">CIE 1976 u'v'</span>
<div style="left:0.00px;top:1250.50px;width:2560.00px;height:3.30px;background:#393939;"></div>
<div style="left:0.00px;top:1253.80px;width:2560.00px;height:121.20px;background:linear-gradient(180deg,#393939,#2b2b2b);"></div>
<div style="left:1903.00px;top:1253.80px;width:118.00px;height:121.20px;background:linear-gradient(180deg,#474747,#2a2a2a);"></div>
<div style="left:88.00px;top:1253.80px;width:12.40px;height:121.20px;background:linear-gradient(180deg,#484848,#2c2c2c);"></div>
<div style="left:-8.00px;top:1253.80px;width:96.00px;height:122.70px;background:linear-gradient(180deg,#a4a4a4,#7e7e7e 45%,#575757);border-radius:8px;"></div>
<div style="left:29.30px;top:1258.60px;width:28.80px;height:28.80px;border-radius:50%;background:linear-gradient(180deg,#6c6c6c,#9c9c9c);"></div>
<svg class="abs" style="left:28px;top:1258px" width="32" height="30"><path d="M7.200 17.100h16.800l-8.400-8.600z" fill="#333"/></svg>
<div style="left:9.60px;top:1306.40px;width:68.40px;height:58.60px;background:#fff;border-radius:6px;box-shadow:inset 2px 2px 2px rgba(0,0,0,.25);"></div>
<div style="left:100.25px;top:1253.80px;width:296.80px;height:122.70px;background:linear-gradient(180deg,#1f1f1f,#3d3d3d);border-radius:8px;"></div>
<div style="left:110.15px;top:1264.10px;width:276.90px;height:71.10px;background:#000000;border-radius:6px;"></div>
<span class="t" style="left:242.22px;top:1348.13px;font-size:20.87px;line-height:20.87px;color:#fff;transform:scaleX(1.0592);"><b>0</b></span>
<div style="left:401.45px;top:1253.80px;width:296.80px;height:122.70px;background:linear-gradient(180deg,#a9a9a9,#868686 38%,#565656);border-radius:8px;"></div>
<div style="left:411.35px;top:1264.10px;width:276.90px;height:71.10px;background:#353535;border-radius:6px;box-shadow:inset 0 2px 3px rgba(0,0,0,.45);"></div>
<span class="t" style="left:537.70px;top:1348.13px;font-size:20.87px;line-height:20.87px;color:#2a2a2a;transform:scaleX(1.0278);"><b>20</b></span>
<div style="left:702.65px;top:1253.80px;width:296.80px;height:122.70px;background:linear-gradient(180deg,#a9a9a9,#868686 38%,#565656);border-radius:8px;"></div>
<div style="left:712.55px;top:1264.10px;width:276.90px;height:71.10px;background:#676767;border-radius:6px;box-shadow:inset 0 2px 3px rgba(0,0,0,.45);"></div>
<span class="t" style="left:839.33px;top:1348.13px;font-size:20.87px;line-height:20.87px;color:#2a2a2a;transform:scaleX(1.0083);"><b>40</b></span>
<div style="left:1003.85px;top:1253.80px;width:296.80px;height:122.70px;background:linear-gradient(180deg,#a9a9a9,#868686 38%,#565656);border-radius:8px;"></div>
<div style="left:1013.75px;top:1264.10px;width:276.90px;height:71.10px;background:#999999;border-radius:6px;box-shadow:inset 0 2px 3px rgba(0,0,0,.45);"></div>
<span class="t" style="left:1140.10px;top:1348.13px;font-size:20.87px;line-height:20.87px;color:#2a2a2a;transform:scaleX(1.0278);"><b>60</b></span>
<div style="left:1305.05px;top:1253.80px;width:296.80px;height:122.70px;background:linear-gradient(180deg,#a9a9a9,#868686 38%,#565656);border-radius:8px;"></div>
<div style="left:1314.95px;top:1264.10px;width:276.90px;height:71.10px;background:#cccccc;border-radius:6px;box-shadow:inset 0 2px 3px rgba(0,0,0,.45);"></div>
<span class="t" style="left:1441.41px;top:1348.13px;font-size:20.87px;line-height:20.87px;color:#2a2a2a;transform:scaleX(1.0228);"><b>80</b></span>
<div style="left:1606.25px;top:1253.80px;width:296.80px;height:122.70px;background:linear-gradient(180deg,#a9a9a9,#868686 38%,#565656);border-radius:8px;"></div>
<div style="left:1616.15px;top:1264.10px;width:276.90px;height:71.10px;background:#ffffff;border-radius:6px;box-shadow:inset 2px 2px 2px rgba(0,0,0,.3);"></div>
<span class="t" style="left:1735.99px;top:1348.13px;font-size:20.87px;line-height:20.87px;color:#2a2a2a;transform:scaleX(1.0413);"><b>100</b></span>
<div style="left:2020.00px;top:1253.80px;width:359.60px;height:59.60px;background:linear-gradient(180deg,#ababab,#626262);border-radius:5px 0 0 5px;"></div>
<div style="left:2111.00px;top:1254.00px;width:2.00px;height:59.00px;background:#353535;"></div>
<div style="left:2200.00px;top:1254.00px;width:2.00px;height:59.00px;background:#353535;"></div>
<div style="left:2289.00px;top:1254.00px;width:2.00px;height:59.00px;background:#353535;"></div>
<div style="left:2379.30px;top:1253.80px;width:89.00px;height:59.60px;background:linear-gradient(180deg,#494949,#2e2e2e);"></div>
<div style="left:2472.50px;top:1257.00px;width:85.50px;height:53.60px;background:linear-gradient(180deg,#6a6a6a,#545454);"></div>
<span class="t" style="left:2486.41px;top:1266.76px;font-size:34.78px;line-height:34.78px;color:#fff;transform:scaleX(0.9937);">123</span>
<div style="left:2045.20px;top:1263.80px;width:39.20px;height:39.20px;border-radius:50%;background:linear-gradient(180deg,#7b7b7b,#b0b0b0);"></div>
<div style="left:2136.40px;top:1263.80px;width:39.20px;height:39.20px;border-radius:50%;background:linear-gradient(180deg,#7b7b7b,#b0b0b0);"></div>
<div style="left:2226.00px;top:1263.80px;width:39.20px;height:39.20px;border-radius:50%;background:linear-gradient(180deg,#7b7b7b,#b0b0b0);"></div>
<div style="left:2315.40px;top:1263.80px;width:39.20px;height:39.20px;border-radius:50%;background:linear-gradient(180deg,#7b7b7b,#b0b0b0);"></div>
<div style="left:2403.80px;top:1263.80px;width:39.20px;height:39.20px;border-radius:50%;background:linear-gradient(180deg,#363636,#424242);"></div>
<svg class="abs" style="left:2020px;top:1254px" width="450" height="62" viewBox="2020 1254 450 62">
<rect x="2058" y="1276" width="15" height="15.3" fill="#333"/>
<path d="M2150.6 1275.7V1294.8L2166.6 1285.2z" fill="#333"/>
<g fill="none" stroke="#333" stroke-width="3.3"><path d="M2240 1276.2h-4.6v17.6h4.6M2252.2 1276.2h4.600v17.6h-4.600"/></g>
<rect x="2240.800" y="1282.8" width="3.6" height="3.8" fill="#333"/><rect x="2247.8" y="1282.8" width="3.6" height="3.8" fill="#333"/>
<path transform="translate(2335 1284.5) scale(0.9) translate(-2335 -1283.3)" d="M2335 1283.3c-3-4.6-6.600-5.400-9-5.400a5.400 5.400 0 0 0 0 10.800c2.400 0 6-0.800 9-5.400c3-4.600 6.600-5.400 9-5.400a5.400 5.400 0 0 1 0 10.800c-2.400 0-6-0.800-9-5.400z" fill="none" stroke="#333" stroke-width="2.9"/>
<g fill="none" stroke="#222" stroke-width="4.2"><path d="M2414.6 1282.400a9.200 9.200 0 0 1 15.800 -4.200"/><path d="M2432.300 1286.200a9.200 9.200 0 0 1 -15.800 4.200"/></g>
<path d="M2434.500 1272.800v8.800h-8.800z M2412.400 1295.800v-8.800h8.800z" fill="#222"/>
</svg>
<div style="left:2020.00px;top:1315.60px;width:269.40px;height:62.40px;background:linear-gradient(180deg,#b1b1b1,#8a8a8a 50%,#5f5f5f);border-radius:7px 0 0 7px;"></div>
<div style="left:2291.20px;top:1315.60px;width:267.20px;height:62.40px;background:linear-gradient(180deg,#b1b1b1,#8a8a8a 50%,#5f5f5f);border-radius:0 7px 7px 0;"></div>
<div style="left:2061.20px;top:1325.40px;width:38.80px;height:38.80px;border-radius:50%;background:linear-gradient(180deg,#7f7f7f,#b4b4b4);"></div>
<div style="left:2483.80px;top:1325.40px;width:38.80px;height:38.80px;border-radius:50%;background:linear-gradient(180deg,#7f7f7f,#b4b4b4);"></div>
<svg class="abs" style="left:2020px;top:1316px" width="540" height="59" viewBox="2020 1316 540 59">
<g fill="none" stroke="#383838" stroke-width="3"><path d="M2081.500 1336.200l-8 9 8 9M2089.800 1336.200l-8 9 8 9"/>
<path d="M2494.300 1336.200l8 9-8 9M2502.600 1336.200l8 9-8 9"/></g></svg>
<span class="t" style="left:2131.63px;top:1324.19px;font-size:42.90px;line-height:42.90px;color:#343434;transform:scaleX(1.0694);text-shadow:0 0 3px rgba(40,40,40,.6);-webkit-text-stroke:1px #343434;">Back</span>
<span class="t" style="left:2343.22px;top:1324.19px;font-size:42.90px;line-height:42.90px;color:#343434;transform:scaleX(1.1892);text-shadow:0 0 3px rgba(40,40,40,.6);-webkit-text-stroke:1px #343434;">Next</span>
</div></body></html>
